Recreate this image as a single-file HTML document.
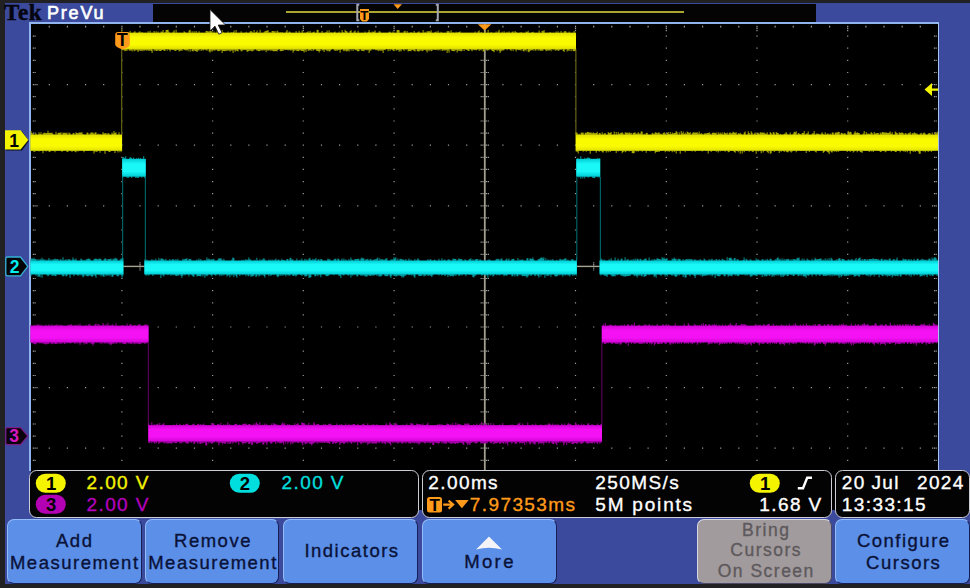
<!DOCTYPE html>
<html><head><meta charset="utf-8"><title>Tek PreVu</title>
<style>
html,body{margin:0;padding:0;background:#212023;}
body{width:970px;height:588px;overflow:hidden;position:relative;font-family:"Liberation Sans","DejaVu Sans",sans-serif;}
.abs{position:absolute;}
#screen{left:5px;top:3px;width:965px;height:581px;background:#3b4a9c;}
#topbar{left:153px;top:3.800px;width:663px;height:18.200px;background:#030403;}
#tek{left:4px;top:-1.300px;font-family:"Liberation Serif",serif;font-weight:bold;font-size:23px;color:#05050f;letter-spacing:0.700px;line-height:28px;-webkit-text-stroke:0.500px #05050f;}
#prevu{left:47px;top:1.500px;font-size:18px;color:#fff;line-height:22px;letter-spacing:1.8px;-webkit-text-stroke:0.650px #fff;}
#grat{left:28.700px;top:21.800px;width:910.700px;height:449px;background:#000;box-sizing:border-box;border:2px solid #8fb4ee;border-top-width:2.200px;border-right:1.600px solid #a5c4f4;border-bottom:none;}
svg{position:absolute;left:0;top:0;}
.box{box-sizing:border-box;border:1.700px solid #cdcdd8;border-radius:7.500px;background:#030303;top:470px;height:47.5px;}
.box>*{transform:translate(-0.200px,-0.200px);}
.t{position:absolute;white-space:nowrap;font-size:19px;line-height:20px;letter-spacing:1.4px;word-spacing:0px;-webkit-text-stroke:0.35px currentColor;}
.pill{position:absolute;width:30.200px;height:19px;border-radius:9.500px;color:#000;text-align:center;font-size:18.500px;font-weight:bold;line-height:19.500px;text-indent:1px;}
.btn{box-sizing:border-box;top:518.500px;height:65px;border-radius:7px;background:#5b8fe8;border-top:1.500px solid #93bcfa;border-left:1.500px solid #93bcfa;border-right:1.500px solid #171f55;border-bottom:1.500px solid #171f55;color:#0a1238;text-align:center;font-size:18.500px;line-height:22px;letter-spacing:1.5px;-webkit-text-stroke:0.35px currentColor;}
.btn div{position:absolute;left:-10px;right:-10px;white-space:nowrap;}
</style></head><body>
<div id="screen" class="abs"></div>
<div id="topbar" class="abs"></div>
<div id="tek" class="abs">Tek</div>
<div id="prevu" class="abs">PreVu</div>
<div id="grat" class="abs"></div>
<div class="abs" style="left:31px;top:470px;width:907px;height:39.500px;background:#000;"></div>
<svg width="970" height="588" viewBox="0 0 970 588">
<!-- record bar -->
<rect x="286" y="11.2" width="398" height="1.6" fill="#d6ce3e"/>
<path d="M359.300 4.800h-2v15.500h2M435.800 4.800h2v15.500h-2" fill="none" stroke="#a6a6b2" stroke-width="2"/>
<path d="M393.5 4.3h8.4l-4.2 4.6z" fill="#ff9a1a"/>
<path d="M360 9h9v10l-2 2.5h-5l-2-2.5z" fill="#ff9a1a"/>
<text x="364.400" y="20.400" font-size="13.500" font-weight="bold" text-anchor="middle" fill="#000" font-family='"Liberation Sans","DejaVu Sans",sans-serif'>T</text>
<defs><linearGradient id="gy" x1="0" y1="0" x2="0" y2="1"><stop offset="0" stop-color="#e2e200"/><stop offset="0.28" stop-color="#fbfb00"/><stop offset="0.72" stop-color="#fbfb00"/><stop offset="1" stop-color="#e2e200"/></linearGradient><linearGradient id="gc" x1="0" y1="0" x2="0" y2="1"><stop offset="0" stop-color="#00cdd6"/><stop offset="0.28" stop-color="#1af7f7"/><stop offset="0.72" stop-color="#1af7f7"/><stop offset="1" stop-color="#00cdd6"/></linearGradient><linearGradient id="gm" x1="0" y1="0" x2="0" y2="1"><stop offset="0" stop-color="#d404d8"/><stop offset="0.28" stop-color="#f412f4"/><stop offset="0.72" stop-color="#f412f4"/><stop offset="1" stop-color="#d404d8"/></linearGradient></defs>
<path d="M48.7 84.0h1.2v1.2h-1.2zM66.8 84.0h1.2v1.2h-1.2zM85.0 84.0h1.2v1.2h-1.2zM103.1 84.0h1.2v1.2h-1.2zM121.3 84.0h1.2v1.2h-1.2zM139.4 84.0h1.2v1.2h-1.2zM157.6 84.0h1.2v1.2h-1.2zM175.7 84.0h1.2v1.2h-1.2zM193.9 84.0h1.2v1.2h-1.2zM212.0 84.0h1.2v1.2h-1.2zM230.2 84.0h1.2v1.2h-1.2zM248.3 84.0h1.2v1.2h-1.2zM266.4 84.0h1.2v1.2h-1.2zM284.6 84.0h1.2v1.2h-1.2zM302.7 84.0h1.2v1.2h-1.2zM320.9 84.0h1.2v1.2h-1.2zM339.0 84.0h1.2v1.2h-1.2zM357.2 84.0h1.2v1.2h-1.2zM375.3 84.0h1.2v1.2h-1.2zM393.5 84.0h1.2v1.2h-1.2zM411.6 84.0h1.2v1.2h-1.2zM429.8 84.0h1.2v1.2h-1.2zM447.9 84.0h1.2v1.2h-1.2zM466.1 84.0h1.2v1.2h-1.2zM484.2 84.0h1.2v1.2h-1.2zM502.3 84.0h1.2v1.2h-1.2zM520.5 84.0h1.2v1.2h-1.2zM538.6 84.0h1.2v1.2h-1.2zM556.8 84.0h1.2v1.2h-1.2zM574.9 84.0h1.2v1.2h-1.2zM593.1 84.0h1.2v1.2h-1.2zM611.2 84.0h1.2v1.2h-1.2zM629.4 84.0h1.2v1.2h-1.2zM647.5 84.0h1.2v1.2h-1.2zM665.7 84.0h1.2v1.2h-1.2zM683.8 84.0h1.2v1.2h-1.2zM702.0 84.0h1.2v1.2h-1.2zM720.1 84.0h1.2v1.2h-1.2zM738.2 84.0h1.2v1.2h-1.2zM756.4 84.0h1.2v1.2h-1.2zM774.5 84.0h1.2v1.2h-1.2zM792.7 84.0h1.2v1.2h-1.2zM810.8 84.0h1.2v1.2h-1.2zM829.0 84.0h1.2v1.2h-1.2zM847.1 84.0h1.2v1.2h-1.2zM865.3 84.0h1.2v1.2h-1.2zM883.4 84.0h1.2v1.2h-1.2zM901.6 84.0h1.2v1.2h-1.2zM919.7 84.0h1.2v1.2h-1.2zM48.7 144.6h1.2v1.2h-1.2zM66.8 144.6h1.2v1.2h-1.2zM85.0 144.6h1.2v1.2h-1.2zM103.1 144.6h1.2v1.2h-1.2zM121.3 144.6h1.2v1.2h-1.2zM139.4 144.6h1.2v1.2h-1.2zM157.6 144.6h1.2v1.2h-1.2zM175.7 144.6h1.2v1.2h-1.2zM193.9 144.6h1.2v1.2h-1.2zM212.0 144.6h1.2v1.2h-1.2zM230.2 144.6h1.2v1.2h-1.2zM248.3 144.6h1.2v1.2h-1.2zM266.4 144.6h1.2v1.2h-1.2zM284.6 144.6h1.2v1.2h-1.2zM302.7 144.6h1.2v1.2h-1.2zM320.9 144.6h1.2v1.2h-1.2zM339.0 144.6h1.2v1.2h-1.2zM357.2 144.6h1.2v1.2h-1.2zM375.3 144.6h1.2v1.2h-1.2zM393.5 144.6h1.2v1.2h-1.2zM411.6 144.6h1.2v1.2h-1.2zM429.8 144.6h1.2v1.2h-1.2zM447.9 144.6h1.2v1.2h-1.2zM466.1 144.6h1.2v1.2h-1.2zM484.2 144.6h1.2v1.2h-1.2zM502.3 144.6h1.2v1.2h-1.2zM520.5 144.6h1.2v1.2h-1.2zM538.6 144.6h1.2v1.2h-1.2zM556.8 144.6h1.2v1.2h-1.2zM574.9 144.6h1.2v1.2h-1.2zM593.1 144.6h1.2v1.2h-1.2zM611.2 144.6h1.2v1.2h-1.2zM629.4 144.6h1.2v1.2h-1.2zM647.5 144.6h1.2v1.2h-1.2zM665.7 144.6h1.2v1.2h-1.2zM683.8 144.6h1.2v1.2h-1.2zM702.0 144.6h1.2v1.2h-1.2zM720.1 144.6h1.2v1.2h-1.2zM738.2 144.6h1.2v1.2h-1.2zM756.4 144.6h1.2v1.2h-1.2zM774.5 144.6h1.2v1.2h-1.2zM792.7 144.6h1.2v1.2h-1.2zM810.8 144.6h1.2v1.2h-1.2zM829.0 144.6h1.2v1.2h-1.2zM847.1 144.6h1.2v1.2h-1.2zM865.3 144.6h1.2v1.2h-1.2zM883.4 144.6h1.2v1.2h-1.2zM901.6 144.6h1.2v1.2h-1.2zM919.7 144.6h1.2v1.2h-1.2zM48.7 205.2h1.2v1.2h-1.2zM66.8 205.2h1.2v1.2h-1.2zM85.0 205.2h1.2v1.2h-1.2zM103.1 205.2h1.2v1.2h-1.2zM121.3 205.2h1.2v1.2h-1.2zM139.4 205.2h1.2v1.2h-1.2zM157.6 205.2h1.2v1.2h-1.2zM175.7 205.2h1.2v1.2h-1.2zM193.9 205.2h1.2v1.2h-1.2zM212.0 205.2h1.2v1.2h-1.2zM230.2 205.2h1.2v1.2h-1.2zM248.3 205.2h1.2v1.2h-1.2zM266.4 205.2h1.2v1.2h-1.2zM284.6 205.2h1.2v1.2h-1.2zM302.7 205.2h1.2v1.2h-1.2zM320.9 205.2h1.2v1.2h-1.2zM339.0 205.2h1.2v1.2h-1.2zM357.2 205.2h1.2v1.2h-1.2zM375.3 205.2h1.2v1.2h-1.2zM393.5 205.2h1.2v1.2h-1.2zM411.6 205.2h1.2v1.2h-1.2zM429.8 205.2h1.2v1.2h-1.2zM447.9 205.2h1.2v1.2h-1.2zM466.1 205.2h1.2v1.2h-1.2zM484.2 205.2h1.2v1.2h-1.2zM502.3 205.2h1.2v1.2h-1.2zM520.5 205.2h1.2v1.2h-1.2zM538.6 205.2h1.2v1.2h-1.2zM556.8 205.2h1.2v1.2h-1.2zM574.9 205.2h1.2v1.2h-1.2zM593.1 205.2h1.2v1.2h-1.2zM611.2 205.2h1.2v1.2h-1.2zM629.4 205.2h1.2v1.2h-1.2zM647.5 205.2h1.2v1.2h-1.2zM665.7 205.2h1.2v1.2h-1.2zM683.8 205.2h1.2v1.2h-1.2zM702.0 205.2h1.2v1.2h-1.2zM720.1 205.2h1.2v1.2h-1.2zM738.2 205.2h1.2v1.2h-1.2zM756.4 205.2h1.2v1.2h-1.2zM774.5 205.2h1.2v1.2h-1.2zM792.7 205.2h1.2v1.2h-1.2zM810.8 205.2h1.2v1.2h-1.2zM829.0 205.2h1.2v1.2h-1.2zM847.1 205.2h1.2v1.2h-1.2zM865.3 205.2h1.2v1.2h-1.2zM883.4 205.2h1.2v1.2h-1.2zM901.6 205.2h1.2v1.2h-1.2zM919.7 205.2h1.2v1.2h-1.2zM48.7 265.8h1.2v1.2h-1.2zM66.8 265.8h1.2v1.2h-1.2zM85.0 265.8h1.2v1.2h-1.2zM103.1 265.8h1.2v1.2h-1.2zM121.3 265.8h1.2v1.2h-1.2zM139.4 265.8h1.2v1.2h-1.2zM157.6 265.8h1.2v1.2h-1.2zM175.7 265.8h1.2v1.2h-1.2zM193.9 265.8h1.2v1.2h-1.2zM212.0 265.8h1.2v1.2h-1.2zM230.2 265.8h1.2v1.2h-1.2zM248.3 265.8h1.2v1.2h-1.2zM266.4 265.8h1.2v1.2h-1.2zM284.6 265.8h1.2v1.2h-1.2zM302.7 265.8h1.2v1.2h-1.2zM320.9 265.8h1.2v1.2h-1.2zM339.0 265.8h1.2v1.2h-1.2zM357.2 265.8h1.2v1.2h-1.2zM375.3 265.8h1.2v1.2h-1.2zM393.5 265.8h1.2v1.2h-1.2zM411.6 265.8h1.2v1.2h-1.2zM429.8 265.8h1.2v1.2h-1.2zM447.9 265.8h1.2v1.2h-1.2zM466.1 265.8h1.2v1.2h-1.2zM484.2 265.8h1.2v1.2h-1.2zM502.3 265.8h1.2v1.2h-1.2zM520.5 265.8h1.2v1.2h-1.2zM538.6 265.8h1.2v1.2h-1.2zM556.8 265.8h1.2v1.2h-1.2zM574.9 265.8h1.2v1.2h-1.2zM593.1 265.8h1.2v1.2h-1.2zM611.2 265.8h1.2v1.2h-1.2zM629.4 265.8h1.2v1.2h-1.2zM647.5 265.8h1.2v1.2h-1.2zM665.7 265.8h1.2v1.2h-1.2zM683.8 265.8h1.2v1.2h-1.2zM702.0 265.8h1.2v1.2h-1.2zM720.1 265.8h1.2v1.2h-1.2zM738.2 265.8h1.2v1.2h-1.2zM756.4 265.8h1.2v1.2h-1.2zM774.5 265.8h1.2v1.2h-1.2zM792.7 265.8h1.2v1.2h-1.2zM810.8 265.8h1.2v1.2h-1.2zM829.0 265.8h1.2v1.2h-1.2zM847.1 265.8h1.2v1.2h-1.2zM865.3 265.8h1.2v1.2h-1.2zM883.4 265.8h1.2v1.2h-1.2zM901.6 265.8h1.2v1.2h-1.2zM919.7 265.8h1.2v1.2h-1.2zM48.7 326.4h1.2v1.2h-1.2zM66.8 326.4h1.2v1.2h-1.2zM85.0 326.4h1.2v1.2h-1.2zM103.1 326.4h1.2v1.2h-1.2zM121.3 326.4h1.2v1.2h-1.2zM139.4 326.4h1.2v1.2h-1.2zM157.6 326.4h1.2v1.2h-1.2zM175.7 326.4h1.2v1.2h-1.2zM193.9 326.4h1.2v1.2h-1.2zM212.0 326.4h1.2v1.2h-1.2zM230.2 326.4h1.2v1.2h-1.2zM248.3 326.4h1.2v1.2h-1.2zM266.4 326.4h1.2v1.2h-1.2zM284.6 326.4h1.2v1.2h-1.2zM302.7 326.4h1.2v1.2h-1.2zM320.9 326.4h1.2v1.2h-1.2zM339.0 326.4h1.2v1.2h-1.2zM357.2 326.4h1.2v1.2h-1.2zM375.3 326.4h1.2v1.2h-1.2zM393.5 326.4h1.2v1.2h-1.2zM411.6 326.4h1.2v1.2h-1.2zM429.8 326.4h1.2v1.2h-1.2zM447.9 326.4h1.2v1.2h-1.2zM466.1 326.4h1.2v1.2h-1.2zM484.2 326.4h1.2v1.2h-1.2zM502.3 326.4h1.2v1.2h-1.2zM520.5 326.4h1.2v1.2h-1.2zM538.6 326.4h1.2v1.2h-1.2zM556.8 326.4h1.2v1.2h-1.2zM574.9 326.4h1.2v1.2h-1.2zM593.1 326.4h1.2v1.2h-1.2zM611.2 326.4h1.2v1.2h-1.2zM629.4 326.4h1.2v1.2h-1.2zM647.5 326.4h1.2v1.2h-1.2zM665.7 326.4h1.2v1.2h-1.2zM683.8 326.4h1.2v1.2h-1.2zM702.0 326.4h1.2v1.2h-1.2zM720.1 326.4h1.2v1.2h-1.2zM738.2 326.4h1.2v1.2h-1.2zM756.4 326.4h1.2v1.2h-1.2zM774.5 326.4h1.2v1.2h-1.2zM792.7 326.4h1.2v1.2h-1.2zM810.8 326.4h1.2v1.2h-1.2zM829.0 326.4h1.2v1.2h-1.2zM847.1 326.4h1.2v1.2h-1.2zM865.3 326.4h1.2v1.2h-1.2zM883.4 326.4h1.2v1.2h-1.2zM901.6 326.4h1.2v1.2h-1.2zM919.7 326.4h1.2v1.2h-1.2zM48.7 387.0h1.2v1.2h-1.2zM66.8 387.0h1.2v1.2h-1.2zM85.0 387.0h1.2v1.2h-1.2zM103.1 387.0h1.2v1.2h-1.2zM121.3 387.0h1.2v1.2h-1.2zM139.4 387.0h1.2v1.2h-1.2zM157.6 387.0h1.2v1.2h-1.2zM175.7 387.0h1.2v1.2h-1.2zM193.9 387.0h1.2v1.2h-1.2zM212.0 387.0h1.2v1.2h-1.2zM230.2 387.0h1.2v1.2h-1.2zM248.3 387.0h1.2v1.2h-1.2zM266.4 387.0h1.2v1.2h-1.2zM284.6 387.0h1.2v1.2h-1.2zM302.7 387.0h1.2v1.2h-1.2zM320.9 387.0h1.2v1.2h-1.2zM339.0 387.0h1.2v1.2h-1.2zM357.2 387.0h1.2v1.2h-1.2zM375.3 387.0h1.2v1.2h-1.2zM393.5 387.0h1.2v1.2h-1.2zM411.6 387.0h1.2v1.2h-1.2zM429.8 387.0h1.2v1.2h-1.2zM447.9 387.0h1.2v1.2h-1.2zM466.1 387.0h1.2v1.2h-1.2zM484.2 387.0h1.2v1.2h-1.2zM502.3 387.0h1.2v1.2h-1.2zM520.5 387.0h1.2v1.2h-1.2zM538.6 387.0h1.2v1.2h-1.2zM556.8 387.0h1.2v1.2h-1.2zM574.9 387.0h1.2v1.2h-1.2zM593.1 387.0h1.2v1.2h-1.2zM611.2 387.0h1.2v1.2h-1.2zM629.4 387.0h1.2v1.2h-1.2zM647.5 387.0h1.2v1.2h-1.2zM665.7 387.0h1.2v1.2h-1.2zM683.8 387.0h1.2v1.2h-1.2zM702.0 387.0h1.2v1.2h-1.2zM720.1 387.0h1.2v1.2h-1.2zM738.2 387.0h1.2v1.2h-1.2zM756.4 387.0h1.2v1.2h-1.2zM774.5 387.0h1.2v1.2h-1.2zM792.7 387.0h1.2v1.2h-1.2zM810.8 387.0h1.2v1.2h-1.2zM829.0 387.0h1.2v1.2h-1.2zM847.1 387.0h1.2v1.2h-1.2zM865.3 387.0h1.2v1.2h-1.2zM883.4 387.0h1.2v1.2h-1.2zM901.6 387.0h1.2v1.2h-1.2zM919.7 387.0h1.2v1.2h-1.2zM48.7 447.6h1.2v1.2h-1.2zM66.8 447.6h1.2v1.2h-1.2zM85.0 447.6h1.2v1.2h-1.2zM103.1 447.6h1.2v1.2h-1.2zM121.3 447.6h1.2v1.2h-1.2zM139.4 447.6h1.2v1.2h-1.2zM157.6 447.6h1.2v1.2h-1.2zM175.7 447.6h1.2v1.2h-1.2zM193.9 447.6h1.2v1.2h-1.2zM212.0 447.6h1.2v1.2h-1.2zM230.2 447.6h1.2v1.2h-1.2zM248.3 447.6h1.2v1.2h-1.2zM266.4 447.6h1.2v1.2h-1.2zM284.6 447.6h1.2v1.2h-1.2zM302.7 447.6h1.2v1.2h-1.2zM320.9 447.6h1.2v1.2h-1.2zM339.0 447.6h1.2v1.2h-1.2zM357.2 447.6h1.2v1.2h-1.2zM375.3 447.6h1.2v1.2h-1.2zM393.5 447.6h1.2v1.2h-1.2zM411.6 447.6h1.2v1.2h-1.2zM429.8 447.6h1.2v1.2h-1.2zM447.9 447.6h1.2v1.2h-1.2zM466.1 447.6h1.2v1.2h-1.2zM484.2 447.6h1.2v1.2h-1.2zM502.3 447.6h1.2v1.2h-1.2zM520.5 447.6h1.2v1.2h-1.2zM538.6 447.6h1.2v1.2h-1.2zM556.8 447.6h1.2v1.2h-1.2zM574.9 447.6h1.2v1.2h-1.2zM593.1 447.6h1.2v1.2h-1.2zM611.2 447.6h1.2v1.2h-1.2zM629.4 447.6h1.2v1.2h-1.2zM647.5 447.6h1.2v1.2h-1.2zM665.7 447.6h1.2v1.2h-1.2zM683.8 447.6h1.2v1.2h-1.2zM702.0 447.6h1.2v1.2h-1.2zM720.1 447.6h1.2v1.2h-1.2zM738.2 447.6h1.2v1.2h-1.2zM756.4 447.6h1.2v1.2h-1.2zM774.5 447.6h1.2v1.2h-1.2zM792.7 447.6h1.2v1.2h-1.2zM810.8 447.6h1.2v1.2h-1.2zM829.0 447.6h1.2v1.2h-1.2zM847.1 447.6h1.2v1.2h-1.2zM865.3 447.6h1.2v1.2h-1.2zM883.4 447.6h1.2v1.2h-1.2zM901.6 447.6h1.2v1.2h-1.2zM919.7 447.6h1.2v1.2h-1.2zM121.3 35.5h1.2v1.2h-1.2zM121.3 47.6h1.2v1.2h-1.2zM121.3 59.8h1.2v1.2h-1.2zM121.3 71.9h1.2v1.2h-1.2zM121.3 84.0h1.2v1.2h-1.2zM121.3 96.1h1.2v1.2h-1.2zM121.3 108.2h1.2v1.2h-1.2zM121.3 120.4h1.2v1.2h-1.2zM121.3 132.5h1.2v1.2h-1.2zM121.3 144.6h1.2v1.2h-1.2zM121.3 156.7h1.2v1.2h-1.2zM121.3 168.8h1.2v1.2h-1.2zM121.3 181.0h1.2v1.2h-1.2zM121.3 193.1h1.2v1.2h-1.2zM121.3 205.2h1.2v1.2h-1.2zM121.3 217.3h1.2v1.2h-1.2zM121.3 229.4h1.2v1.2h-1.2zM121.3 241.6h1.2v1.2h-1.2zM121.3 253.7h1.2v1.2h-1.2zM121.3 265.8h1.2v1.2h-1.2zM121.3 277.9h1.2v1.2h-1.2zM121.3 290.0h1.2v1.2h-1.2zM121.3 302.2h1.2v1.2h-1.2zM121.3 314.3h1.2v1.2h-1.2zM121.3 326.4h1.2v1.2h-1.2zM121.3 338.5h1.2v1.2h-1.2zM121.3 350.6h1.2v1.2h-1.2zM121.3 362.8h1.2v1.2h-1.2zM121.3 374.9h1.2v1.2h-1.2zM121.3 387.0h1.2v1.2h-1.2zM121.3 399.1h1.2v1.2h-1.2zM121.3 411.2h1.2v1.2h-1.2zM121.3 423.4h1.2v1.2h-1.2zM121.3 435.5h1.2v1.2h-1.2zM121.3 447.6h1.2v1.2h-1.2zM121.3 459.7h1.2v1.2h-1.2zM212.0 35.5h1.2v1.2h-1.2zM212.0 47.6h1.2v1.2h-1.2zM212.0 59.8h1.2v1.2h-1.2zM212.0 71.9h1.2v1.2h-1.2zM212.0 84.0h1.2v1.2h-1.2zM212.0 96.1h1.2v1.2h-1.2zM212.0 108.2h1.2v1.2h-1.2zM212.0 120.4h1.2v1.2h-1.2zM212.0 132.5h1.2v1.2h-1.2zM212.0 144.6h1.2v1.2h-1.2zM212.0 156.7h1.2v1.2h-1.2zM212.0 168.8h1.2v1.2h-1.2zM212.0 181.0h1.2v1.2h-1.2zM212.0 193.1h1.2v1.2h-1.2zM212.0 205.2h1.2v1.2h-1.2zM212.0 217.3h1.2v1.2h-1.2zM212.0 229.4h1.2v1.2h-1.2zM212.0 241.6h1.2v1.2h-1.2zM212.0 253.7h1.2v1.2h-1.2zM212.0 265.8h1.2v1.2h-1.2zM212.0 277.9h1.2v1.2h-1.2zM212.0 290.0h1.2v1.2h-1.2zM212.0 302.2h1.2v1.2h-1.2zM212.0 314.3h1.2v1.2h-1.2zM212.0 326.4h1.2v1.2h-1.2zM212.0 338.5h1.2v1.2h-1.2zM212.0 350.6h1.2v1.2h-1.2zM212.0 362.8h1.2v1.2h-1.2zM212.0 374.9h1.2v1.2h-1.2zM212.0 387.0h1.2v1.2h-1.2zM212.0 399.1h1.2v1.2h-1.2zM212.0 411.2h1.2v1.2h-1.2zM212.0 423.4h1.2v1.2h-1.2zM212.0 435.5h1.2v1.2h-1.2zM212.0 447.6h1.2v1.2h-1.2zM212.0 459.7h1.2v1.2h-1.2zM302.7 35.5h1.2v1.2h-1.2zM302.7 47.6h1.2v1.2h-1.2zM302.7 59.8h1.2v1.2h-1.2zM302.7 71.9h1.2v1.2h-1.2zM302.7 84.0h1.2v1.2h-1.2zM302.7 96.1h1.2v1.2h-1.2zM302.7 108.2h1.2v1.2h-1.2zM302.7 120.4h1.2v1.2h-1.2zM302.7 132.5h1.2v1.2h-1.2zM302.7 144.6h1.2v1.2h-1.2zM302.7 156.7h1.2v1.2h-1.2zM302.7 168.8h1.2v1.2h-1.2zM302.7 181.0h1.2v1.2h-1.2zM302.7 193.1h1.2v1.2h-1.2zM302.7 205.2h1.2v1.2h-1.2zM302.7 217.3h1.2v1.2h-1.2zM302.7 229.4h1.2v1.2h-1.2zM302.7 241.6h1.2v1.2h-1.2zM302.7 253.7h1.2v1.2h-1.2zM302.7 265.8h1.2v1.2h-1.2zM302.7 277.9h1.2v1.2h-1.2zM302.7 290.0h1.2v1.2h-1.2zM302.7 302.2h1.2v1.2h-1.2zM302.7 314.3h1.2v1.2h-1.2zM302.7 326.4h1.2v1.2h-1.2zM302.7 338.5h1.2v1.2h-1.2zM302.7 350.6h1.2v1.2h-1.2zM302.7 362.8h1.2v1.2h-1.2zM302.7 374.9h1.2v1.2h-1.2zM302.7 387.0h1.2v1.2h-1.2zM302.7 399.1h1.2v1.2h-1.2zM302.7 411.2h1.2v1.2h-1.2zM302.7 423.4h1.2v1.2h-1.2zM302.7 435.5h1.2v1.2h-1.2zM302.7 447.6h1.2v1.2h-1.2zM302.7 459.7h1.2v1.2h-1.2zM393.5 35.5h1.2v1.2h-1.2zM393.5 47.6h1.2v1.2h-1.2zM393.5 59.8h1.2v1.2h-1.2zM393.5 71.9h1.2v1.2h-1.2zM393.5 84.0h1.2v1.2h-1.2zM393.5 96.1h1.2v1.2h-1.2zM393.5 108.2h1.2v1.2h-1.2zM393.5 120.4h1.2v1.2h-1.2zM393.5 132.5h1.2v1.2h-1.2zM393.5 144.6h1.2v1.2h-1.2zM393.5 156.7h1.2v1.2h-1.2zM393.5 168.8h1.2v1.2h-1.2zM393.5 181.0h1.2v1.2h-1.2zM393.5 193.1h1.2v1.2h-1.2zM393.5 205.2h1.2v1.2h-1.2zM393.5 217.3h1.2v1.2h-1.2zM393.5 229.4h1.2v1.2h-1.2zM393.5 241.6h1.2v1.2h-1.2zM393.5 253.7h1.2v1.2h-1.2zM393.5 265.8h1.2v1.2h-1.2zM393.5 277.9h1.2v1.2h-1.2zM393.5 290.0h1.2v1.2h-1.2zM393.5 302.2h1.2v1.2h-1.2zM393.5 314.3h1.2v1.2h-1.2zM393.5 326.4h1.2v1.2h-1.2zM393.5 338.5h1.2v1.2h-1.2zM393.5 350.6h1.2v1.2h-1.2zM393.5 362.8h1.2v1.2h-1.2zM393.5 374.9h1.2v1.2h-1.2zM393.5 387.0h1.2v1.2h-1.2zM393.5 399.1h1.2v1.2h-1.2zM393.5 411.2h1.2v1.2h-1.2zM393.5 423.4h1.2v1.2h-1.2zM393.5 435.5h1.2v1.2h-1.2zM393.5 447.6h1.2v1.2h-1.2zM393.5 459.7h1.2v1.2h-1.2zM484.2 35.5h1.2v1.2h-1.2zM484.2 47.6h1.2v1.2h-1.2zM484.2 59.8h1.2v1.2h-1.2zM484.2 71.9h1.2v1.2h-1.2zM484.2 84.0h1.2v1.2h-1.2zM484.2 96.1h1.2v1.2h-1.2zM484.2 108.2h1.2v1.2h-1.2zM484.2 120.4h1.2v1.2h-1.2zM484.2 132.5h1.2v1.2h-1.2zM484.2 144.6h1.2v1.2h-1.2zM484.2 156.7h1.2v1.2h-1.2zM484.2 168.8h1.2v1.2h-1.2zM484.2 181.0h1.2v1.2h-1.2zM484.2 193.1h1.2v1.2h-1.2zM484.2 205.2h1.2v1.2h-1.2zM484.2 217.3h1.2v1.2h-1.2zM484.2 229.4h1.2v1.2h-1.2zM484.2 241.6h1.2v1.2h-1.2zM484.2 253.7h1.2v1.2h-1.2zM484.2 265.8h1.2v1.2h-1.2zM484.2 277.9h1.2v1.2h-1.2zM484.2 290.0h1.2v1.2h-1.2zM484.2 302.2h1.2v1.2h-1.2zM484.2 314.3h1.2v1.2h-1.2zM484.2 326.4h1.2v1.2h-1.2zM484.2 338.5h1.2v1.2h-1.2zM484.2 350.6h1.2v1.2h-1.2zM484.2 362.8h1.2v1.2h-1.2zM484.2 374.9h1.2v1.2h-1.2zM484.2 387.0h1.2v1.2h-1.2zM484.2 399.1h1.2v1.2h-1.2zM484.2 411.2h1.2v1.2h-1.2zM484.2 423.4h1.2v1.2h-1.2zM484.2 435.5h1.2v1.2h-1.2zM484.2 447.6h1.2v1.2h-1.2zM484.2 459.7h1.2v1.2h-1.2zM574.9 35.5h1.2v1.2h-1.2zM574.9 47.6h1.2v1.2h-1.2zM574.9 59.8h1.2v1.2h-1.2zM574.9 71.9h1.2v1.2h-1.2zM574.9 84.0h1.2v1.2h-1.2zM574.9 96.1h1.2v1.2h-1.2zM574.9 108.2h1.2v1.2h-1.2zM574.9 120.4h1.2v1.2h-1.2zM574.9 132.5h1.2v1.2h-1.2zM574.9 144.6h1.2v1.2h-1.2zM574.9 156.7h1.2v1.2h-1.2zM574.9 168.8h1.2v1.2h-1.2zM574.9 181.0h1.2v1.2h-1.2zM574.9 193.1h1.2v1.2h-1.2zM574.9 205.2h1.2v1.2h-1.2zM574.9 217.3h1.2v1.2h-1.2zM574.9 229.4h1.2v1.2h-1.2zM574.9 241.6h1.2v1.2h-1.2zM574.9 253.7h1.2v1.2h-1.2zM574.9 265.8h1.2v1.2h-1.2zM574.9 277.9h1.2v1.2h-1.2zM574.9 290.0h1.2v1.2h-1.2zM574.9 302.2h1.2v1.2h-1.2zM574.9 314.3h1.2v1.2h-1.2zM574.9 326.4h1.2v1.2h-1.2zM574.9 338.5h1.2v1.2h-1.2zM574.9 350.6h1.2v1.2h-1.2zM574.9 362.8h1.2v1.2h-1.2zM574.9 374.9h1.2v1.2h-1.2zM574.9 387.0h1.2v1.2h-1.2zM574.9 399.1h1.2v1.2h-1.2zM574.9 411.2h1.2v1.2h-1.2zM574.9 423.4h1.2v1.2h-1.2zM574.9 435.5h1.2v1.2h-1.2zM574.9 447.6h1.2v1.2h-1.2zM574.9 459.7h1.2v1.2h-1.2zM665.7 35.5h1.2v1.2h-1.2zM665.7 47.6h1.2v1.2h-1.2zM665.7 59.8h1.2v1.2h-1.2zM665.7 71.9h1.2v1.2h-1.2zM665.7 84.0h1.2v1.2h-1.2zM665.7 96.1h1.2v1.2h-1.2zM665.7 108.2h1.2v1.2h-1.2zM665.7 120.4h1.2v1.2h-1.2zM665.7 132.5h1.2v1.2h-1.2zM665.7 144.6h1.2v1.2h-1.2zM665.7 156.7h1.2v1.2h-1.2zM665.7 168.8h1.2v1.2h-1.2zM665.7 181.0h1.2v1.2h-1.2zM665.7 193.1h1.2v1.2h-1.2zM665.7 205.2h1.2v1.2h-1.2zM665.7 217.3h1.2v1.2h-1.2zM665.7 229.4h1.2v1.2h-1.2zM665.7 241.6h1.2v1.2h-1.2zM665.7 253.7h1.2v1.2h-1.2zM665.7 265.8h1.2v1.2h-1.2zM665.7 277.9h1.2v1.2h-1.2zM665.7 290.0h1.2v1.2h-1.2zM665.7 302.2h1.2v1.2h-1.2zM665.7 314.3h1.2v1.2h-1.2zM665.7 326.4h1.2v1.2h-1.2zM665.7 338.5h1.2v1.2h-1.2zM665.7 350.6h1.2v1.2h-1.2zM665.7 362.8h1.2v1.2h-1.2zM665.7 374.9h1.2v1.2h-1.2zM665.7 387.0h1.2v1.2h-1.2zM665.7 399.1h1.2v1.2h-1.2zM665.7 411.2h1.2v1.2h-1.2zM665.7 423.4h1.2v1.2h-1.2zM665.7 435.5h1.2v1.2h-1.2zM665.7 447.6h1.2v1.2h-1.2zM665.7 459.7h1.2v1.2h-1.2zM756.4 35.5h1.2v1.2h-1.2zM756.4 47.6h1.2v1.2h-1.2zM756.4 59.8h1.2v1.2h-1.2zM756.4 71.9h1.2v1.2h-1.2zM756.4 84.0h1.2v1.2h-1.2zM756.4 96.1h1.2v1.2h-1.2zM756.4 108.2h1.2v1.2h-1.2zM756.4 120.4h1.2v1.2h-1.2zM756.4 132.5h1.2v1.2h-1.2zM756.4 144.6h1.2v1.2h-1.2zM756.4 156.7h1.2v1.2h-1.2zM756.4 168.8h1.2v1.2h-1.2zM756.4 181.0h1.2v1.2h-1.2zM756.4 193.1h1.2v1.2h-1.2zM756.4 205.2h1.2v1.2h-1.2zM756.4 217.3h1.2v1.2h-1.2zM756.4 229.4h1.2v1.2h-1.2zM756.4 241.6h1.2v1.2h-1.2zM756.4 253.7h1.2v1.2h-1.2zM756.4 265.8h1.2v1.2h-1.2zM756.4 277.9h1.2v1.2h-1.2zM756.4 290.0h1.2v1.2h-1.2zM756.4 302.2h1.2v1.2h-1.2zM756.4 314.3h1.2v1.2h-1.2zM756.4 326.4h1.2v1.2h-1.2zM756.4 338.5h1.2v1.2h-1.2zM756.4 350.6h1.2v1.2h-1.2zM756.4 362.8h1.2v1.2h-1.2zM756.4 374.9h1.2v1.2h-1.2zM756.4 387.0h1.2v1.2h-1.2zM756.4 399.1h1.2v1.2h-1.2zM756.4 411.2h1.2v1.2h-1.2zM756.4 423.4h1.2v1.2h-1.2zM756.4 435.5h1.2v1.2h-1.2zM756.4 447.6h1.2v1.2h-1.2zM756.4 459.7h1.2v1.2h-1.2zM847.1 35.5h1.2v1.2h-1.2zM847.1 47.6h1.2v1.2h-1.2zM847.1 59.8h1.2v1.2h-1.2zM847.1 71.9h1.2v1.2h-1.2zM847.1 84.0h1.2v1.2h-1.2zM847.1 96.1h1.2v1.2h-1.2zM847.1 108.2h1.2v1.2h-1.2zM847.1 120.4h1.2v1.2h-1.2zM847.1 132.5h1.2v1.2h-1.2zM847.1 144.6h1.2v1.2h-1.2zM847.1 156.7h1.2v1.2h-1.2zM847.1 168.8h1.2v1.2h-1.2zM847.1 181.0h1.2v1.2h-1.2zM847.1 193.1h1.2v1.2h-1.2zM847.1 205.2h1.2v1.2h-1.2zM847.1 217.3h1.2v1.2h-1.2zM847.1 229.4h1.2v1.2h-1.2zM847.1 241.6h1.2v1.2h-1.2zM847.1 253.7h1.2v1.2h-1.2zM847.1 265.8h1.2v1.2h-1.2zM847.1 277.9h1.2v1.2h-1.2zM847.1 290.0h1.2v1.2h-1.2zM847.1 302.2h1.2v1.2h-1.2zM847.1 314.3h1.2v1.2h-1.2zM847.1 326.4h1.2v1.2h-1.2zM847.1 338.5h1.2v1.2h-1.2zM847.1 350.6h1.2v1.2h-1.2zM847.1 362.8h1.2v1.2h-1.2zM847.1 374.9h1.2v1.2h-1.2zM847.1 387.0h1.2v1.2h-1.2zM847.1 399.1h1.2v1.2h-1.2zM847.1 411.2h1.2v1.2h-1.2zM847.1 423.4h1.2v1.2h-1.2zM847.1 435.5h1.2v1.2h-1.2zM847.1 447.6h1.2v1.2h-1.2zM847.1 459.7h1.2v1.2h-1.2zM48.7 25.8h1.2v1.6h-1.2zM66.8 25.8h1.2v1.6h-1.2zM85.0 25.8h1.2v1.6h-1.2zM103.1 25.8h1.2v1.6h-1.2zM121.3 25.8h1.2v1.6h-1.2zM139.4 25.8h1.2v1.6h-1.2zM157.6 25.8h1.2v1.6h-1.2zM175.7 25.8h1.2v1.6h-1.2zM193.9 25.8h1.2v1.6h-1.2zM212.0 25.8h1.2v1.6h-1.2zM230.2 25.8h1.2v1.6h-1.2zM248.3 25.8h1.2v1.6h-1.2zM266.4 25.8h1.2v1.6h-1.2zM284.6 25.8h1.2v1.6h-1.2zM302.7 25.8h1.2v1.6h-1.2zM320.9 25.8h1.2v1.6h-1.2zM339.0 25.8h1.2v1.6h-1.2zM357.2 25.8h1.2v1.6h-1.2zM375.3 25.8h1.2v1.6h-1.2zM393.5 25.8h1.2v1.6h-1.2zM411.6 25.8h1.2v1.6h-1.2zM429.8 25.8h1.2v1.6h-1.2zM447.9 25.8h1.2v1.6h-1.2zM466.1 25.8h1.2v1.6h-1.2zM484.2 25.8h1.2v1.6h-1.2zM502.3 25.8h1.2v1.6h-1.2zM520.5 25.8h1.2v1.6h-1.2zM538.6 25.8h1.2v1.6h-1.2zM556.8 25.8h1.2v1.6h-1.2zM574.9 25.8h1.2v1.6h-1.2zM593.1 25.8h1.2v1.6h-1.2zM611.2 25.8h1.2v1.6h-1.2zM629.4 25.8h1.2v1.6h-1.2zM647.5 25.8h1.2v1.6h-1.2zM665.7 25.8h1.2v1.6h-1.2zM683.8 25.8h1.2v1.6h-1.2zM702.0 25.8h1.2v1.6h-1.2zM720.1 25.8h1.2v1.6h-1.2zM738.2 25.8h1.2v1.6h-1.2zM756.4 25.8h1.2v1.6h-1.2zM774.5 25.8h1.2v1.6h-1.2zM792.7 25.8h1.2v1.6h-1.2zM810.8 25.8h1.2v1.6h-1.2zM829.0 25.8h1.2v1.6h-1.2zM847.1 25.8h1.2v1.6h-1.2zM865.3 25.8h1.2v1.6h-1.2zM883.4 25.8h1.2v1.6h-1.2zM901.6 25.8h1.2v1.6h-1.2zM919.7 25.8h1.2v1.6h-1.2zM121.3 28.0h1.2v1.2h-1.2zM121.3 30.0h1.2v1.2h-1.2zM212.0 28.0h1.2v1.2h-1.2zM212.0 30.0h1.2v1.2h-1.2zM302.7 28.0h1.2v1.2h-1.2zM302.7 30.0h1.2v1.2h-1.2zM393.5 28.0h1.2v1.2h-1.2zM393.5 30.0h1.2v1.2h-1.2zM484.2 28.0h1.2v1.2h-1.2zM484.2 30.0h1.2v1.2h-1.2zM574.9 28.0h1.2v1.2h-1.2zM574.9 30.0h1.2v1.2h-1.2zM665.7 28.0h1.2v1.2h-1.2zM665.7 30.0h1.2v1.2h-1.2zM756.4 28.0h1.2v1.2h-1.2zM756.4 30.0h1.2v1.2h-1.2zM847.1 28.0h1.2v1.2h-1.2zM847.1 30.0h1.2v1.2h-1.2zM32.8 35.5h1.2v1.2h-1.2zM935.6 35.5h1.2v1.2h-1.2zM34.5 35.5h1.2v1.2h-1.2zM933.9 35.5h1.2v1.2h-1.2zM32.8 47.6h1.2v1.2h-1.2zM935.6 47.6h1.2v1.2h-1.2zM34.5 47.6h1.2v1.2h-1.2zM933.9 47.6h1.2v1.2h-1.2zM32.8 59.8h1.2v1.2h-1.2zM935.6 59.8h1.2v1.2h-1.2zM34.5 59.8h1.2v1.2h-1.2zM933.9 59.8h1.2v1.2h-1.2zM32.8 71.9h1.2v1.2h-1.2zM935.6 71.9h1.2v1.2h-1.2zM34.5 71.9h1.2v1.2h-1.2zM933.9 71.9h1.2v1.2h-1.2zM32.8 84.0h1.2v1.2h-1.2zM935.6 84.0h1.2v1.2h-1.2zM34.5 84.0h1.2v1.2h-1.2zM933.9 84.0h1.2v1.2h-1.2zM36.4 84.0h1.2v1.2h-1.2zM932.0 84.0h1.2v1.2h-1.2zM32.8 96.1h1.2v1.2h-1.2zM935.6 96.1h1.2v1.2h-1.2zM34.5 96.1h1.2v1.2h-1.2zM933.9 96.1h1.2v1.2h-1.2zM32.8 108.2h1.2v1.2h-1.2zM935.6 108.2h1.2v1.2h-1.2zM34.5 108.2h1.2v1.2h-1.2zM933.9 108.2h1.2v1.2h-1.2zM32.8 120.4h1.2v1.2h-1.2zM935.6 120.4h1.2v1.2h-1.2zM34.5 120.4h1.2v1.2h-1.2zM933.9 120.4h1.2v1.2h-1.2zM32.8 132.5h1.2v1.2h-1.2zM935.6 132.5h1.2v1.2h-1.2zM34.5 132.5h1.2v1.2h-1.2zM933.9 132.5h1.2v1.2h-1.2zM32.8 144.6h1.2v1.2h-1.2zM935.6 144.6h1.2v1.2h-1.2zM34.5 144.6h1.2v1.2h-1.2zM933.9 144.6h1.2v1.2h-1.2zM36.4 144.6h1.2v1.2h-1.2zM932.0 144.6h1.2v1.2h-1.2zM32.8 156.7h1.2v1.2h-1.2zM935.6 156.7h1.2v1.2h-1.2zM34.5 156.7h1.2v1.2h-1.2zM933.9 156.7h1.2v1.2h-1.2zM32.8 168.8h1.2v1.2h-1.2zM935.6 168.8h1.2v1.2h-1.2zM34.5 168.8h1.2v1.2h-1.2zM933.9 168.8h1.2v1.2h-1.2zM32.8 181.0h1.2v1.2h-1.2zM935.6 181.0h1.2v1.2h-1.2zM34.5 181.0h1.2v1.2h-1.2zM933.9 181.0h1.2v1.2h-1.2zM32.8 193.1h1.2v1.2h-1.2zM935.6 193.1h1.2v1.2h-1.2zM34.5 193.1h1.2v1.2h-1.2zM933.9 193.1h1.2v1.2h-1.2zM32.8 205.2h1.2v1.2h-1.2zM935.6 205.2h1.2v1.2h-1.2zM34.5 205.2h1.2v1.2h-1.2zM933.9 205.2h1.2v1.2h-1.2zM36.4 205.2h1.2v1.2h-1.2zM932.0 205.2h1.2v1.2h-1.2zM32.8 217.3h1.2v1.2h-1.2zM935.6 217.3h1.2v1.2h-1.2zM34.5 217.3h1.2v1.2h-1.2zM933.9 217.3h1.2v1.2h-1.2zM32.8 229.4h1.2v1.2h-1.2zM935.6 229.4h1.2v1.2h-1.2zM34.5 229.4h1.2v1.2h-1.2zM933.9 229.4h1.2v1.2h-1.2zM32.8 241.6h1.2v1.2h-1.2zM935.6 241.6h1.2v1.2h-1.2zM34.5 241.6h1.2v1.2h-1.2zM933.9 241.6h1.2v1.2h-1.2zM32.8 253.7h1.2v1.2h-1.2zM935.6 253.7h1.2v1.2h-1.2zM34.5 253.7h1.2v1.2h-1.2zM933.9 253.7h1.2v1.2h-1.2zM32.8 265.8h1.2v1.2h-1.2zM935.6 265.8h1.2v1.2h-1.2zM34.5 265.8h1.2v1.2h-1.2zM933.9 265.8h1.2v1.2h-1.2zM36.4 265.8h1.2v1.2h-1.2zM932.0 265.8h1.2v1.2h-1.2zM32.8 277.9h1.2v1.2h-1.2zM935.6 277.9h1.2v1.2h-1.2zM34.5 277.9h1.2v1.2h-1.2zM933.9 277.9h1.2v1.2h-1.2zM32.8 290.0h1.2v1.2h-1.2zM935.6 290.0h1.2v1.2h-1.2zM34.5 290.0h1.2v1.2h-1.2zM933.9 290.0h1.2v1.2h-1.2zM32.8 302.2h1.2v1.2h-1.2zM935.6 302.2h1.2v1.2h-1.2zM34.5 302.2h1.2v1.2h-1.2zM933.9 302.2h1.2v1.2h-1.2zM32.8 314.3h1.2v1.2h-1.2zM935.6 314.3h1.2v1.2h-1.2zM34.5 314.3h1.2v1.2h-1.2zM933.9 314.3h1.2v1.2h-1.2zM32.8 326.4h1.2v1.2h-1.2zM935.6 326.4h1.2v1.2h-1.2zM34.5 326.4h1.2v1.2h-1.2zM933.9 326.4h1.2v1.2h-1.2zM36.4 326.4h1.2v1.2h-1.2zM932.0 326.4h1.2v1.2h-1.2zM32.8 338.5h1.2v1.2h-1.2zM935.6 338.5h1.2v1.2h-1.2zM34.5 338.5h1.2v1.2h-1.2zM933.9 338.5h1.2v1.2h-1.2zM32.8 350.6h1.2v1.2h-1.2zM935.6 350.6h1.2v1.2h-1.2zM34.5 350.6h1.2v1.2h-1.2zM933.9 350.6h1.2v1.2h-1.2zM32.8 362.8h1.2v1.2h-1.2zM935.6 362.8h1.2v1.2h-1.2zM34.5 362.8h1.2v1.2h-1.2zM933.9 362.8h1.2v1.2h-1.2zM32.8 374.9h1.2v1.2h-1.2zM935.6 374.9h1.2v1.2h-1.2zM34.5 374.9h1.2v1.2h-1.2zM933.9 374.9h1.2v1.2h-1.2zM32.8 387.0h1.2v1.2h-1.2zM935.6 387.0h1.2v1.2h-1.2zM34.5 387.0h1.2v1.2h-1.2zM933.9 387.0h1.2v1.2h-1.2zM36.4 387.0h1.2v1.2h-1.2zM932.0 387.0h1.2v1.2h-1.2zM32.8 399.1h1.2v1.2h-1.2zM935.6 399.1h1.2v1.2h-1.2zM34.5 399.1h1.2v1.2h-1.2zM933.9 399.1h1.2v1.2h-1.2zM32.8 411.2h1.2v1.2h-1.2zM935.6 411.2h1.2v1.2h-1.2zM34.5 411.2h1.2v1.2h-1.2zM933.9 411.2h1.2v1.2h-1.2zM32.8 423.4h1.2v1.2h-1.2zM935.6 423.4h1.2v1.2h-1.2zM34.5 423.4h1.2v1.2h-1.2zM933.9 423.4h1.2v1.2h-1.2zM32.8 435.5h1.2v1.2h-1.2zM935.6 435.5h1.2v1.2h-1.2zM34.5 435.5h1.2v1.2h-1.2zM933.9 435.5h1.2v1.2h-1.2zM32.8 447.6h1.2v1.2h-1.2zM935.6 447.6h1.2v1.2h-1.2zM34.5 447.6h1.2v1.2h-1.2zM933.9 447.6h1.2v1.2h-1.2zM36.4 447.6h1.2v1.2h-1.2zM932.0 447.6h1.2v1.2h-1.2zM32.8 459.7h1.2v1.2h-1.2zM935.6 459.7h1.2v1.2h-1.2zM34.5 459.7h1.2v1.2h-1.2zM933.9 459.7h1.2v1.2h-1.2zM480.6 35.5h1.2v1.2h-1.2zM482.4 35.5h1.2v1.2h-1.2zM486.0 35.5h1.2v1.2h-1.2zM487.8 35.5h1.2v1.2h-1.2zM480.6 47.6h1.2v1.2h-1.2zM482.4 47.6h1.2v1.2h-1.2zM486.0 47.6h1.2v1.2h-1.2zM487.8 47.6h1.2v1.2h-1.2zM480.6 59.8h1.2v1.2h-1.2zM482.4 59.8h1.2v1.2h-1.2zM486.0 59.8h1.2v1.2h-1.2zM487.8 59.8h1.2v1.2h-1.2zM480.6 71.9h1.2v1.2h-1.2zM482.4 71.9h1.2v1.2h-1.2zM486.0 71.9h1.2v1.2h-1.2zM487.8 71.9h1.2v1.2h-1.2zM480.6 84.0h1.2v1.2h-1.2zM482.4 84.0h1.2v1.2h-1.2zM486.0 84.0h1.2v1.2h-1.2zM487.8 84.0h1.2v1.2h-1.2zM480.6 96.1h1.2v1.2h-1.2zM482.4 96.1h1.2v1.2h-1.2zM486.0 96.1h1.2v1.2h-1.2zM487.8 96.1h1.2v1.2h-1.2zM480.6 108.2h1.2v1.2h-1.2zM482.4 108.2h1.2v1.2h-1.2zM486.0 108.2h1.2v1.2h-1.2zM487.8 108.2h1.2v1.2h-1.2zM480.6 120.4h1.2v1.2h-1.2zM482.4 120.4h1.2v1.2h-1.2zM486.0 120.4h1.2v1.2h-1.2zM487.8 120.4h1.2v1.2h-1.2zM480.6 132.5h1.2v1.2h-1.2zM482.4 132.5h1.2v1.2h-1.2zM486.0 132.5h1.2v1.2h-1.2zM487.8 132.5h1.2v1.2h-1.2zM480.6 144.6h1.2v1.2h-1.2zM482.4 144.6h1.2v1.2h-1.2zM486.0 144.6h1.2v1.2h-1.2zM487.8 144.6h1.2v1.2h-1.2zM480.6 156.7h1.2v1.2h-1.2zM482.4 156.7h1.2v1.2h-1.2zM486.0 156.7h1.2v1.2h-1.2zM487.8 156.7h1.2v1.2h-1.2zM480.6 168.8h1.2v1.2h-1.2zM482.4 168.8h1.2v1.2h-1.2zM486.0 168.8h1.2v1.2h-1.2zM487.8 168.8h1.2v1.2h-1.2zM480.6 181.0h1.2v1.2h-1.2zM482.4 181.0h1.2v1.2h-1.2zM486.0 181.0h1.2v1.2h-1.2zM487.8 181.0h1.2v1.2h-1.2zM480.6 193.1h1.2v1.2h-1.2zM482.4 193.1h1.2v1.2h-1.2zM486.0 193.1h1.2v1.2h-1.2zM487.8 193.1h1.2v1.2h-1.2zM480.6 205.2h1.2v1.2h-1.2zM482.4 205.2h1.2v1.2h-1.2zM486.0 205.2h1.2v1.2h-1.2zM487.8 205.2h1.2v1.2h-1.2zM480.6 217.3h1.2v1.2h-1.2zM482.4 217.3h1.2v1.2h-1.2zM486.0 217.3h1.2v1.2h-1.2zM487.8 217.3h1.2v1.2h-1.2zM480.6 229.4h1.2v1.2h-1.2zM482.4 229.4h1.2v1.2h-1.2zM486.0 229.4h1.2v1.2h-1.2zM487.8 229.4h1.2v1.2h-1.2zM480.6 241.6h1.2v1.2h-1.2zM482.4 241.6h1.2v1.2h-1.2zM486.0 241.6h1.2v1.2h-1.2zM487.8 241.6h1.2v1.2h-1.2zM480.6 253.7h1.2v1.2h-1.2zM482.4 253.7h1.2v1.2h-1.2zM486.0 253.7h1.2v1.2h-1.2zM487.8 253.7h1.2v1.2h-1.2zM480.6 265.8h1.2v1.2h-1.2zM482.4 265.8h1.2v1.2h-1.2zM486.0 265.8h1.2v1.2h-1.2zM487.8 265.8h1.2v1.2h-1.2zM480.6 277.9h1.2v1.2h-1.2zM482.4 277.9h1.2v1.2h-1.2zM486.0 277.9h1.2v1.2h-1.2zM487.8 277.9h1.2v1.2h-1.2zM480.6 290.0h1.2v1.2h-1.2zM482.4 290.0h1.2v1.2h-1.2zM486.0 290.0h1.2v1.2h-1.2zM487.8 290.0h1.2v1.2h-1.2zM480.6 302.2h1.2v1.2h-1.2zM482.4 302.2h1.2v1.2h-1.2zM486.0 302.2h1.2v1.2h-1.2zM487.8 302.2h1.2v1.2h-1.2zM480.6 314.3h1.2v1.2h-1.2zM482.4 314.3h1.2v1.2h-1.2zM486.0 314.3h1.2v1.2h-1.2zM487.8 314.3h1.2v1.2h-1.2zM480.6 326.4h1.2v1.2h-1.2zM482.4 326.4h1.2v1.2h-1.2zM486.0 326.4h1.2v1.2h-1.2zM487.8 326.4h1.2v1.2h-1.2zM480.6 338.5h1.2v1.2h-1.2zM482.4 338.5h1.2v1.2h-1.2zM486.0 338.5h1.2v1.2h-1.2zM487.8 338.5h1.2v1.2h-1.2zM480.6 350.6h1.2v1.2h-1.2zM482.4 350.6h1.2v1.2h-1.2zM486.0 350.6h1.2v1.2h-1.2zM487.8 350.6h1.2v1.2h-1.2zM480.6 362.8h1.2v1.2h-1.2zM482.4 362.8h1.2v1.2h-1.2zM486.0 362.8h1.2v1.2h-1.2zM487.8 362.8h1.2v1.2h-1.2zM480.6 374.9h1.2v1.2h-1.2zM482.4 374.9h1.2v1.2h-1.2zM486.0 374.9h1.2v1.2h-1.2zM487.8 374.9h1.2v1.2h-1.2zM480.6 387.0h1.2v1.2h-1.2zM482.4 387.0h1.2v1.2h-1.2zM486.0 387.0h1.2v1.2h-1.2zM487.8 387.0h1.2v1.2h-1.2zM480.6 399.1h1.2v1.2h-1.2zM482.4 399.1h1.2v1.2h-1.2zM486.0 399.1h1.2v1.2h-1.2zM487.8 399.1h1.2v1.2h-1.2zM480.6 411.2h1.2v1.2h-1.2zM482.4 411.2h1.2v1.2h-1.2zM486.0 411.2h1.2v1.2h-1.2zM487.8 411.2h1.2v1.2h-1.2zM480.6 423.4h1.2v1.2h-1.2zM482.4 423.4h1.2v1.2h-1.2zM486.0 423.4h1.2v1.2h-1.2zM487.8 423.4h1.2v1.2h-1.2zM480.6 435.5h1.2v1.2h-1.2zM482.4 435.5h1.2v1.2h-1.2zM486.0 435.5h1.2v1.2h-1.2zM487.8 435.5h1.2v1.2h-1.2zM480.6 447.6h1.2v1.2h-1.2zM482.4 447.6h1.2v1.2h-1.2zM486.0 447.6h1.2v1.2h-1.2zM487.8 447.6h1.2v1.2h-1.2zM480.6 459.7h1.2v1.2h-1.2zM482.4 459.7h1.2v1.2h-1.2zM486.0 459.7h1.2v1.2h-1.2zM487.8 459.7h1.2v1.2h-1.2zM48.7 262.2h1.2v1.2h-1.2zM48.7 264.0h1.2v1.2h-1.2zM48.7 267.6h1.2v1.2h-1.2zM48.7 269.4h1.2v1.2h-1.2zM66.8 262.2h1.2v1.2h-1.2zM66.8 264.0h1.2v1.2h-1.2zM66.8 267.6h1.2v1.2h-1.2zM66.8 269.4h1.2v1.2h-1.2zM85.0 262.2h1.2v1.2h-1.2zM85.0 264.0h1.2v1.2h-1.2zM85.0 267.6h1.2v1.2h-1.2zM85.0 269.4h1.2v1.2h-1.2zM103.1 262.2h1.2v1.2h-1.2zM103.1 264.0h1.2v1.2h-1.2zM103.1 267.6h1.2v1.2h-1.2zM103.1 269.4h1.2v1.2h-1.2zM121.3 262.2h1.2v1.2h-1.2zM121.3 264.0h1.2v1.2h-1.2zM121.3 267.6h1.2v1.2h-1.2zM121.3 269.4h1.2v1.2h-1.2zM139.4 262.2h1.2v1.2h-1.2zM139.4 264.0h1.2v1.2h-1.2zM139.4 267.6h1.2v1.2h-1.2zM139.4 269.4h1.2v1.2h-1.2zM157.6 262.2h1.2v1.2h-1.2zM157.6 264.0h1.2v1.2h-1.2zM157.6 267.6h1.2v1.2h-1.2zM157.6 269.4h1.2v1.2h-1.2zM175.7 262.2h1.2v1.2h-1.2zM175.7 264.0h1.2v1.2h-1.2zM175.7 267.6h1.2v1.2h-1.2zM175.7 269.4h1.2v1.2h-1.2zM193.9 262.2h1.2v1.2h-1.2zM193.9 264.0h1.2v1.2h-1.2zM193.9 267.6h1.2v1.2h-1.2zM193.9 269.4h1.2v1.2h-1.2zM212.0 262.2h1.2v1.2h-1.2zM212.0 264.0h1.2v1.2h-1.2zM212.0 267.6h1.2v1.2h-1.2zM212.0 269.4h1.2v1.2h-1.2zM230.2 262.2h1.2v1.2h-1.2zM230.2 264.0h1.2v1.2h-1.2zM230.2 267.6h1.2v1.2h-1.2zM230.2 269.4h1.2v1.2h-1.2zM248.3 262.2h1.2v1.2h-1.2zM248.3 264.0h1.2v1.2h-1.2zM248.3 267.6h1.2v1.2h-1.2zM248.3 269.4h1.2v1.2h-1.2zM266.4 262.2h1.2v1.2h-1.2zM266.4 264.0h1.2v1.2h-1.2zM266.4 267.6h1.2v1.2h-1.2zM266.4 269.4h1.2v1.2h-1.2zM284.6 262.2h1.2v1.2h-1.2zM284.6 264.0h1.2v1.2h-1.2zM284.6 267.6h1.2v1.2h-1.2zM284.6 269.4h1.2v1.2h-1.2zM302.7 262.2h1.2v1.2h-1.2zM302.7 264.0h1.2v1.2h-1.2zM302.7 267.6h1.2v1.2h-1.2zM302.7 269.4h1.2v1.2h-1.2zM320.9 262.2h1.2v1.2h-1.2zM320.9 264.0h1.2v1.2h-1.2zM320.9 267.6h1.2v1.2h-1.2zM320.9 269.4h1.2v1.2h-1.2zM339.0 262.2h1.2v1.2h-1.2zM339.0 264.0h1.2v1.2h-1.2zM339.0 267.6h1.2v1.2h-1.2zM339.0 269.4h1.2v1.2h-1.2zM357.2 262.2h1.2v1.2h-1.2zM357.2 264.0h1.2v1.2h-1.2zM357.2 267.6h1.2v1.2h-1.2zM357.2 269.4h1.2v1.2h-1.2zM375.3 262.2h1.2v1.2h-1.2zM375.3 264.0h1.2v1.2h-1.2zM375.3 267.6h1.2v1.2h-1.2zM375.3 269.4h1.2v1.2h-1.2zM393.5 262.2h1.2v1.2h-1.2zM393.5 264.0h1.2v1.2h-1.2zM393.5 267.6h1.2v1.2h-1.2zM393.5 269.4h1.2v1.2h-1.2zM411.6 262.2h1.2v1.2h-1.2zM411.6 264.0h1.2v1.2h-1.2zM411.6 267.6h1.2v1.2h-1.2zM411.6 269.4h1.2v1.2h-1.2zM429.8 262.2h1.2v1.2h-1.2zM429.8 264.0h1.2v1.2h-1.2zM429.8 267.6h1.2v1.2h-1.2zM429.8 269.4h1.2v1.2h-1.2zM447.9 262.2h1.2v1.2h-1.2zM447.9 264.0h1.2v1.2h-1.2zM447.9 267.6h1.2v1.2h-1.2zM447.9 269.4h1.2v1.2h-1.2zM466.1 262.2h1.2v1.2h-1.2zM466.1 264.0h1.2v1.2h-1.2zM466.1 267.6h1.2v1.2h-1.2zM466.1 269.4h1.2v1.2h-1.2zM484.2 262.2h1.2v1.2h-1.2zM484.2 264.0h1.2v1.2h-1.2zM484.2 267.6h1.2v1.2h-1.2zM484.2 269.4h1.2v1.2h-1.2zM502.3 262.2h1.2v1.2h-1.2zM502.3 264.0h1.2v1.2h-1.2zM502.3 267.6h1.2v1.2h-1.2zM502.3 269.4h1.2v1.2h-1.2zM520.5 262.2h1.2v1.2h-1.2zM520.5 264.0h1.2v1.2h-1.2zM520.5 267.6h1.2v1.2h-1.2zM520.5 269.4h1.2v1.2h-1.2zM538.6 262.2h1.2v1.2h-1.2zM538.6 264.0h1.2v1.2h-1.2zM538.6 267.6h1.2v1.2h-1.2zM538.6 269.4h1.2v1.2h-1.2zM556.8 262.2h1.2v1.2h-1.2zM556.8 264.0h1.2v1.2h-1.2zM556.8 267.6h1.2v1.2h-1.2zM556.8 269.4h1.2v1.2h-1.2zM574.9 262.2h1.2v1.2h-1.2zM574.9 264.0h1.2v1.2h-1.2zM574.9 267.6h1.2v1.2h-1.2zM574.9 269.4h1.2v1.2h-1.2zM593.1 262.2h1.2v1.2h-1.2zM593.1 264.0h1.2v1.2h-1.2zM593.1 267.6h1.2v1.2h-1.2zM593.1 269.4h1.2v1.2h-1.2zM611.2 262.2h1.2v1.2h-1.2zM611.2 264.0h1.2v1.2h-1.2zM611.2 267.6h1.2v1.2h-1.2zM611.2 269.4h1.2v1.2h-1.2zM629.4 262.2h1.2v1.2h-1.2zM629.4 264.0h1.2v1.2h-1.2zM629.4 267.6h1.2v1.2h-1.2zM629.4 269.4h1.2v1.2h-1.2zM647.5 262.2h1.2v1.2h-1.2zM647.5 264.0h1.2v1.2h-1.2zM647.5 267.6h1.2v1.2h-1.2zM647.5 269.4h1.2v1.2h-1.2zM665.7 262.2h1.2v1.2h-1.2zM665.7 264.0h1.2v1.2h-1.2zM665.7 267.6h1.2v1.2h-1.2zM665.7 269.4h1.2v1.2h-1.2zM683.8 262.2h1.2v1.2h-1.2zM683.8 264.0h1.2v1.2h-1.2zM683.8 267.6h1.2v1.2h-1.2zM683.8 269.4h1.2v1.2h-1.2zM702.0 262.2h1.2v1.2h-1.2zM702.0 264.0h1.2v1.2h-1.2zM702.0 267.6h1.2v1.2h-1.2zM702.0 269.4h1.2v1.2h-1.2zM720.1 262.2h1.2v1.2h-1.2zM720.1 264.0h1.2v1.2h-1.2zM720.1 267.6h1.2v1.2h-1.2zM720.1 269.4h1.2v1.2h-1.2zM738.2 262.2h1.2v1.2h-1.2zM738.2 264.0h1.2v1.2h-1.2zM738.2 267.6h1.2v1.2h-1.2zM738.2 269.4h1.2v1.2h-1.2zM756.4 262.2h1.2v1.2h-1.2zM756.4 264.0h1.2v1.2h-1.2zM756.4 267.6h1.2v1.2h-1.2zM756.4 269.4h1.2v1.2h-1.2zM774.5 262.2h1.2v1.2h-1.2zM774.5 264.0h1.2v1.2h-1.2zM774.5 267.6h1.2v1.2h-1.2zM774.5 269.4h1.2v1.2h-1.2zM792.7 262.2h1.2v1.2h-1.2zM792.7 264.0h1.2v1.2h-1.2zM792.7 267.6h1.2v1.2h-1.2zM792.7 269.4h1.2v1.2h-1.2zM810.8 262.2h1.2v1.2h-1.2zM810.8 264.0h1.2v1.2h-1.2zM810.8 267.6h1.2v1.2h-1.2zM810.8 269.4h1.2v1.2h-1.2zM829.0 262.2h1.2v1.2h-1.2zM829.0 264.0h1.2v1.2h-1.2zM829.0 267.6h1.2v1.2h-1.2zM829.0 269.4h1.2v1.2h-1.2zM847.1 262.2h1.2v1.2h-1.2zM847.1 264.0h1.2v1.2h-1.2zM847.1 267.6h1.2v1.2h-1.2zM847.1 269.4h1.2v1.2h-1.2zM865.3 262.2h1.2v1.2h-1.2zM865.3 264.0h1.2v1.2h-1.2zM865.3 267.6h1.2v1.2h-1.2zM865.3 269.4h1.2v1.2h-1.2zM883.4 262.2h1.2v1.2h-1.2zM883.4 264.0h1.2v1.2h-1.2zM883.4 267.6h1.2v1.2h-1.2zM883.4 269.4h1.2v1.2h-1.2zM901.6 262.2h1.2v1.2h-1.2zM901.6 264.0h1.2v1.2h-1.2zM901.6 267.6h1.2v1.2h-1.2zM901.6 269.4h1.2v1.2h-1.2zM919.7 262.2h1.2v1.2h-1.2zM919.7 264.0h1.2v1.2h-1.2zM919.7 267.6h1.2v1.2h-1.2zM919.7 269.4h1.2v1.2h-1.2z" fill="#9a9a96"/>
<rect x="483.9" y="24" width="1.8" height="446" fill="#a29e8e"/>
<rect x="31" y="265.7" width="907" height="1.4" fill="#a9a595"/>
<rect x="147.8" y="343" width="1.2" height="83" fill="#560058"/>
<rect x="601.2" y="343" width="1.2" height="83" fill="#560058"/>
<path d="M30.5 324.9h1.0v18.2h-1.0zM31.5 325.6h1.0v17.4h-1.0zM32.5 325.6h1.0v17.9h-1.0zM33.5 325.0h1.0v19.1h-1.0zM34.5 324.9h1.0v19.4h-1.0zM35.5 325.6h1.0v18.6h-1.0zM36.5 324.2h1.0v19.0h-1.0zM37.5 324.8h1.0v17.7h-1.0zM38.5 324.5h1.0v19.0h-1.0zM39.5 325.6h1.0v17.4h-1.0zM40.5 324.4h1.0v19.1h-1.0zM41.5 325.6h1.0v17.7h-1.0zM42.5 325.6h1.0v17.7h-1.0zM43.5 325.6h1.0v18.5h-1.0zM44.5 325.6h1.0v18.6h-1.0zM45.5 324.6h1.0v19.9h-1.0zM46.5 325.6h1.0v18.2h-1.0zM47.5 325.6h1.0v18.5h-1.0zM48.5 324.3h1.0v19.4h-1.0zM49.5 325.6h1.0v16.8h-1.0zM50.5 325.6h1.0v18.2h-1.0zM51.5 324.3h1.0v20.0h-1.0zM52.5 325.6h1.0v17.9h-1.0zM53.5 325.6h1.0v18.0h-1.0zM54.5 325.0h1.0v19.0h-1.0zM55.5 324.8h1.0v19.3h-1.0zM56.5 324.6h1.0v19.5h-1.0zM57.5 325.6h1.0v16.8h-1.0zM58.5 324.6h1.0v19.5h-1.0zM59.5 325.6h1.0v17.6h-1.0zM60.5 324.8h1.0v18.9h-1.0zM61.5 325.1h1.0v18.4h-1.0zM62.5 325.6h1.0v16.8h-1.0zM63.5 325.6h1.0v18.2h-1.0zM64.5 325.6h1.0v18.5h-1.0zM65.5 325.6h1.0v16.8h-1.0zM66.5 325.6h1.0v17.9h-1.0zM67.5 324.4h1.0v18.7h-1.0zM68.5 324.9h1.0v18.1h-1.0zM69.5 324.9h1.0v18.5h-1.0zM70.5 324.1h1.0v19.1h-1.0zM71.5 324.7h1.0v18.4h-1.0zM72.5 325.6h1.0v16.8h-1.0zM73.5 325.6h1.0v17.5h-1.0zM74.5 324.7h1.0v19.4h-1.0zM75.5 325.1h1.0v17.4h-1.0zM76.5 325.6h1.0v18.1h-1.0zM77.5 324.5h1.0v17.9h-1.0zM78.5 325.6h1.0v17.7h-1.0zM79.5 323.8h1.0v21.3h-1.0zM80.5 325.6h1.0v17.6h-1.0zM81.5 325.6h1.0v16.8h-1.0zM82.5 325.6h1.0v16.8h-1.0zM83.5 325.6h1.0v19.0h-1.0zM84.5 325.6h1.0v17.4h-1.0zM85.5 324.8h1.0v19.1h-1.0zM86.5 325.6h1.0v18.6h-1.0zM87.5 325.6h1.0v16.8h-1.0zM88.5 323.7h1.0v19.5h-1.0zM89.5 324.4h1.0v18.0h-1.0zM90.5 325.6h1.0v18.2h-1.0zM91.5 325.6h1.0v18.2h-1.0zM92.5 325.6h1.0v19.8h-1.0zM93.5 325.6h1.0v18.4h-1.0zM94.5 324.2h1.0v18.2h-1.0zM95.5 323.5h1.0v19.0h-1.0zM96.5 325.6h1.0v17.5h-1.0zM97.5 324.1h1.0v18.3h-1.0zM98.5 324.2h1.0v18.3h-1.0zM99.5 325.6h1.0v18.1h-1.0zM100.5 325.1h1.0v17.4h-1.0zM101.5 325.6h1.0v18.6h-1.0zM102.5 322.9h1.0v19.6h-1.0zM103.5 324.8h1.0v18.5h-1.0zM104.5 325.6h1.0v17.9h-1.0zM105.5 324.1h1.0v19.5h-1.0zM106.5 325.6h1.0v16.8h-1.0zM107.5 322.8h1.0v20.9h-1.0zM108.5 325.6h1.0v17.9h-1.0zM109.5 325.1h1.0v19.5h-1.0zM110.5 325.6h1.0v19.5h-1.0zM111.5 324.5h1.0v19.5h-1.0zM112.5 324.5h1.0v18.9h-1.0zM113.5 325.6h1.0v18.1h-1.0zM114.5 325.6h1.0v16.8h-1.0zM115.5 323.2h1.0v20.5h-1.0zM116.5 325.6h1.0v18.0h-1.0zM117.5 325.6h1.0v16.8h-1.0zM118.5 325.6h1.0v16.8h-1.0zM119.5 325.6h1.0v18.1h-1.0zM120.5 325.6h1.0v16.8h-1.0zM121.5 325.0h1.0v18.1h-1.0zM122.5 325.0h1.0v19.0h-1.0zM123.5 325.6h1.0v18.3h-1.0zM124.5 325.6h1.0v18.5h-1.0zM125.5 325.6h1.0v18.6h-1.0zM126.5 323.4h1.0v19.1h-1.0zM127.5 325.6h1.0v17.9h-1.0zM128.5 325.6h1.0v17.6h-1.0zM129.5 324.3h1.0v19.4h-1.0zM130.5 324.0h1.0v19.8h-1.0zM131.5 325.6h1.0v18.6h-1.0zM132.5 325.6h1.0v16.8h-1.0zM133.5 324.8h1.0v19.2h-1.0zM134.5 325.0h1.0v19.2h-1.0zM135.5 325.6h1.0v17.5h-1.0zM136.5 325.6h1.0v18.3h-1.0zM137.5 325.0h1.0v18.5h-1.0zM138.5 324.1h1.0v20.0h-1.0zM139.5 324.2h1.0v20.0h-1.0zM140.5 325.6h1.0v18.1h-1.0zM141.5 325.6h1.0v17.5h-1.0zM142.5 325.6h1.0v17.5h-1.0zM143.5 325.0h1.0v18.4h-1.0zM144.5 324.3h1.0v19.4h-1.0zM145.5 324.7h1.0v18.6h-1.0zM146.5 324.3h1.0v19.0h-1.0zM147.5 325.6h1.0v16.8h-1.0z" fill="#a000a4"/>
<rect x="30.5" y="326.0" width="118.0" height="16.1" fill="url(#gm)"/>
<path d="M148.3 423.6h1.0v19.4h-1.0zM149.3 425.0h1.0v18.0h-1.0zM150.3 425.0h1.0v16.4h-1.0zM151.3 422.3h1.0v21.0h-1.0zM152.3 425.0h1.0v17.1h-1.0zM153.3 424.4h1.0v18.1h-1.0zM154.3 424.4h1.0v19.3h-1.0zM155.3 425.0h1.0v17.4h-1.0zM156.3 424.0h1.0v18.9h-1.0zM157.3 423.4h1.0v18.0h-1.0zM158.3 425.0h1.0v18.9h-1.0zM159.3 422.9h1.0v19.8h-1.0zM160.3 425.0h1.0v17.4h-1.0zM161.3 425.0h1.0v17.5h-1.0zM162.3 424.1h1.0v18.0h-1.0zM163.3 423.1h1.0v20.0h-1.0zM164.3 425.0h1.0v18.4h-1.0zM165.3 425.0h1.0v17.6h-1.0zM166.3 425.0h1.0v18.4h-1.0zM167.3 425.0h1.0v18.6h-1.0zM168.3 425.0h1.0v18.4h-1.0zM169.3 425.0h1.0v18.0h-1.0zM170.3 425.0h1.0v18.6h-1.0zM171.3 425.0h1.0v18.7h-1.0zM172.3 425.0h1.0v17.4h-1.0zM173.3 424.4h1.0v17.9h-1.0zM174.3 425.0h1.0v18.2h-1.0zM175.3 425.0h1.0v17.9h-1.0zM176.3 423.6h1.0v19.4h-1.0zM177.3 425.0h1.0v17.1h-1.0zM178.3 425.0h1.0v17.1h-1.0zM179.3 423.7h1.0v19.8h-1.0zM180.3 425.0h1.0v17.7h-1.0zM181.3 425.0h1.0v18.5h-1.0zM182.3 425.0h1.0v17.1h-1.0zM183.3 424.2h1.0v18.4h-1.0zM184.3 425.0h1.0v17.1h-1.0zM185.3 423.8h1.0v19.6h-1.0zM186.3 423.9h1.0v19.0h-1.0zM187.3 423.5h1.0v20.4h-1.0zM188.3 425.0h1.0v17.9h-1.0zM189.3 425.0h1.0v16.4h-1.0zM190.3 425.0h1.0v17.4h-1.0zM191.3 425.0h1.0v18.1h-1.0zM192.3 423.9h1.0v17.5h-1.0zM193.3 423.6h1.0v20.2h-1.0zM194.3 425.0h1.0v18.7h-1.0zM195.3 425.0h1.0v17.0h-1.0zM196.3 425.0h1.0v17.6h-1.0zM197.3 424.1h1.0v19.6h-1.0zM198.3 423.7h1.0v18.6h-1.0zM199.3 425.0h1.0v18.8h-1.0zM200.3 424.1h1.0v19.9h-1.0zM201.3 425.0h1.0v17.8h-1.0zM202.3 424.4h1.0v19.2h-1.0zM203.3 423.5h1.0v19.1h-1.0zM204.3 425.0h1.0v17.7h-1.0zM205.3 425.0h1.0v20.2h-1.0zM206.3 425.0h1.0v20.4h-1.0zM207.3 425.0h1.0v17.0h-1.0zM208.3 425.0h1.0v18.5h-1.0zM209.3 425.0h1.0v17.0h-1.0zM210.3 425.0h1.0v17.9h-1.0zM211.3 423.0h1.0v20.9h-1.0zM212.3 423.8h1.0v19.3h-1.0zM213.3 423.2h1.0v19.2h-1.0zM214.3 425.0h1.0v17.4h-1.0zM215.3 425.0h1.0v16.4h-1.0zM216.3 425.0h1.0v17.3h-1.0zM217.3 424.1h1.0v18.4h-1.0zM218.3 423.9h1.0v21.3h-1.0zM219.3 425.0h1.0v18.0h-1.0zM220.3 423.0h1.0v19.6h-1.0zM221.3 425.0h1.0v18.0h-1.0zM222.3 425.0h1.0v19.3h-1.0zM223.3 424.2h1.0v18.7h-1.0zM224.3 425.0h1.0v18.7h-1.0zM225.3 424.5h1.0v19.3h-1.0zM226.3 425.0h1.0v17.0h-1.0zM227.3 422.2h1.0v21.5h-1.0zM228.3 425.0h1.0v17.2h-1.0zM229.3 423.9h1.0v20.0h-1.0zM230.3 425.0h1.0v18.5h-1.0zM231.3 425.0h1.0v17.0h-1.0zM232.3 425.0h1.0v18.8h-1.0zM233.3 425.0h1.0v17.2h-1.0zM234.3 423.8h1.0v18.4h-1.0zM235.3 423.9h1.0v18.9h-1.0zM236.3 423.8h1.0v18.8h-1.0zM237.3 425.0h1.0v16.4h-1.0zM238.3 425.0h1.0v19.7h-1.0zM239.3 424.2h1.0v17.2h-1.0zM240.3 425.0h1.0v17.0h-1.0zM241.3 425.0h1.0v17.8h-1.0zM242.3 423.8h1.0v20.6h-1.0zM243.3 424.1h1.0v19.2h-1.0zM244.3 423.6h1.0v19.4h-1.0zM245.3 423.4h1.0v20.2h-1.0zM246.3 424.3h1.0v18.3h-1.0zM247.3 425.0h1.0v17.3h-1.0zM248.3 424.0h1.0v19.9h-1.0zM249.3 424.1h1.0v19.9h-1.0zM250.3 424.4h1.0v18.3h-1.0zM251.3 425.0h1.0v20.0h-1.0zM252.3 425.0h1.0v19.4h-1.0zM253.3 423.5h1.0v18.6h-1.0zM254.3 425.0h1.0v17.7h-1.0zM255.3 423.2h1.0v19.4h-1.0zM256.3 422.2h1.0v21.8h-1.0zM257.3 424.1h1.0v19.5h-1.0zM258.3 425.0h1.0v17.9h-1.0zM259.3 422.2h1.0v20.5h-1.0zM260.3 425.0h1.0v17.8h-1.0zM261.3 425.0h1.0v17.0h-1.0zM262.3 424.4h1.0v20.0h-1.0zM263.3 425.0h1.0v19.5h-1.0zM264.3 423.4h1.0v19.1h-1.0zM265.3 425.0h1.0v17.5h-1.0zM266.3 423.7h1.0v21.3h-1.0zM267.3 425.0h1.0v17.4h-1.0zM268.3 425.0h1.0v16.4h-1.0zM269.3 425.0h1.0v17.5h-1.0zM270.3 425.0h1.0v18.8h-1.0zM271.3 423.6h1.0v20.0h-1.0zM272.3 425.0h1.0v17.6h-1.0zM273.3 422.9h1.0v19.2h-1.0zM274.3 423.7h1.0v18.5h-1.0zM275.3 423.9h1.0v20.1h-1.0zM276.3 425.0h1.0v16.4h-1.0zM277.3 424.4h1.0v18.6h-1.0zM278.3 425.0h1.0v17.4h-1.0zM279.3 425.0h1.0v18.3h-1.0zM280.3 425.0h1.0v18.3h-1.0zM281.3 423.6h1.0v19.6h-1.0zM282.3 422.4h1.0v20.1h-1.0zM283.3 424.3h1.0v20.5h-1.0zM284.3 422.9h1.0v18.6h-1.0zM285.3 425.0h1.0v18.6h-1.0zM286.3 425.0h1.0v16.4h-1.0zM287.3 424.0h1.0v19.7h-1.0zM288.3 425.0h1.0v17.5h-1.0zM289.3 424.3h1.0v17.2h-1.0zM290.3 425.0h1.0v19.5h-1.0zM291.3 425.0h1.0v17.5h-1.0zM292.3 425.0h1.0v19.1h-1.0zM293.3 425.0h1.0v17.4h-1.0zM294.3 423.2h1.0v19.3h-1.0zM295.3 425.0h1.0v17.4h-1.0zM296.3 424.1h1.0v18.2h-1.0zM297.3 423.1h1.0v20.0h-1.0zM298.3 424.4h1.0v18.7h-1.0zM299.3 425.0h1.0v17.3h-1.0zM300.3 425.0h1.0v17.5h-1.0zM301.3 422.2h1.0v21.0h-1.0zM302.3 422.9h1.0v22.6h-1.0zM303.3 423.1h1.0v19.3h-1.0zM304.3 423.5h1.0v20.1h-1.0zM305.3 425.0h1.0v19.6h-1.0zM306.3 424.5h1.0v18.8h-1.0zM307.3 425.0h1.0v18.2h-1.0zM308.3 422.7h1.0v19.8h-1.0zM309.3 425.0h1.0v19.1h-1.0zM310.3 425.0h1.0v18.9h-1.0zM311.3 424.4h1.0v21.1h-1.0zM312.3 425.0h1.0v18.8h-1.0zM313.3 422.2h1.0v21.4h-1.0zM314.3 423.6h1.0v19.2h-1.0zM315.3 425.0h1.0v17.3h-1.0zM316.3 424.1h1.0v18.7h-1.0zM317.3 424.2h1.0v19.6h-1.0zM318.3 423.9h1.0v18.2h-1.0zM319.3 425.0h1.0v18.1h-1.0zM320.3 425.0h1.0v17.6h-1.0zM321.3 425.0h1.0v17.8h-1.0zM322.3 425.0h1.0v17.8h-1.0zM323.3 423.8h1.0v18.7h-1.0zM324.3 425.0h1.0v17.9h-1.0zM325.3 424.0h1.0v18.3h-1.0zM326.3 425.0h1.0v17.8h-1.0zM327.3 425.0h1.0v18.2h-1.0zM328.3 423.7h1.0v19.3h-1.0zM329.3 423.9h1.0v20.0h-1.0zM330.3 423.6h1.0v17.9h-1.0zM331.3 425.0h1.0v17.3h-1.0zM332.3 425.0h1.0v18.9h-1.0zM333.3 425.0h1.0v18.5h-1.0zM334.3 425.0h1.0v17.7h-1.0zM335.3 425.0h1.0v18.7h-1.0zM336.3 423.6h1.0v19.4h-1.0zM337.3 425.0h1.0v17.5h-1.0zM338.3 425.0h1.0v17.0h-1.0zM339.3 424.3h1.0v20.7h-1.0zM340.3 425.0h1.0v18.5h-1.0zM341.3 423.9h1.0v18.8h-1.0zM342.3 425.0h1.0v18.1h-1.0zM343.3 425.0h1.0v18.9h-1.0zM344.3 425.0h1.0v18.5h-1.0zM345.3 423.4h1.0v19.3h-1.0zM346.3 425.0h1.0v17.3h-1.0zM347.3 425.0h1.0v18.6h-1.0zM348.3 423.8h1.0v17.7h-1.0zM349.3 425.0h1.0v17.6h-1.0zM350.3 424.5h1.0v18.8h-1.0zM351.3 425.0h1.0v18.7h-1.0zM352.3 424.3h1.0v17.8h-1.0zM353.3 424.1h1.0v18.6h-1.0zM354.3 423.9h1.0v18.6h-1.0zM355.3 425.0h1.0v17.2h-1.0zM356.3 425.0h1.0v17.2h-1.0zM357.3 423.8h1.0v21.4h-1.0zM358.3 425.0h1.0v17.0h-1.0zM359.3 425.0h1.0v17.7h-1.0zM360.3 425.0h1.0v18.8h-1.0zM361.3 425.0h1.0v18.8h-1.0zM362.3 423.9h1.0v18.6h-1.0zM363.3 423.6h1.0v19.5h-1.0zM364.3 425.0h1.0v17.3h-1.0zM365.3 425.0h1.0v18.2h-1.0zM366.3 425.0h1.0v17.6h-1.0zM367.3 423.3h1.0v21.8h-1.0zM368.3 425.0h1.0v18.6h-1.0zM369.3 425.0h1.0v18.4h-1.0zM370.3 425.0h1.0v17.2h-1.0zM371.3 424.5h1.0v19.0h-1.0zM372.3 425.0h1.0v18.4h-1.0zM373.3 423.9h1.0v19.7h-1.0zM374.3 425.0h1.0v18.2h-1.0zM375.3 425.0h1.0v18.7h-1.0zM376.3 424.2h1.0v19.3h-1.0zM377.3 425.0h1.0v17.6h-1.0zM378.3 425.0h1.0v17.4h-1.0zM379.3 425.0h1.0v18.3h-1.0zM380.3 425.0h1.0v16.4h-1.0zM381.3 425.0h1.0v18.3h-1.0zM382.3 425.0h1.0v18.4h-1.0zM383.3 425.0h1.0v17.4h-1.0zM384.3 425.0h1.0v18.8h-1.0zM385.3 424.5h1.0v19.4h-1.0zM386.3 423.2h1.0v18.9h-1.0zM387.3 425.0h1.0v18.3h-1.0zM388.3 425.0h1.0v18.1h-1.0zM389.3 422.3h1.0v21.4h-1.0zM390.3 423.5h1.0v21.9h-1.0zM391.3 424.3h1.0v17.8h-1.0zM392.3 425.0h1.0v18.2h-1.0zM393.3 425.0h1.0v17.5h-1.0zM394.3 424.4h1.0v18.0h-1.0zM395.3 422.8h1.0v19.7h-1.0zM396.3 423.7h1.0v18.9h-1.0zM397.3 425.0h1.0v18.7h-1.0zM398.3 425.0h1.0v17.8h-1.0zM399.3 425.0h1.0v17.6h-1.0zM400.3 425.0h1.0v17.4h-1.0zM401.3 425.0h1.0v18.6h-1.0zM402.3 424.5h1.0v19.0h-1.0zM403.3 425.0h1.0v17.9h-1.0zM404.3 425.0h1.0v17.3h-1.0zM405.3 425.0h1.0v18.6h-1.0zM406.3 423.5h1.0v19.0h-1.0zM407.3 425.0h1.0v17.2h-1.0zM408.3 425.0h1.0v18.5h-1.0zM409.3 425.0h1.0v18.2h-1.0zM410.3 422.9h1.0v20.9h-1.0zM411.3 423.5h1.0v18.9h-1.0zM412.3 423.5h1.0v19.2h-1.0zM413.3 425.0h1.0v17.9h-1.0zM414.3 425.0h1.0v18.5h-1.0zM415.3 425.0h1.0v17.6h-1.0zM416.3 423.6h1.0v19.9h-1.0zM417.3 424.0h1.0v19.1h-1.0zM418.3 424.0h1.0v20.4h-1.0zM419.3 424.2h1.0v19.5h-1.0zM420.3 424.3h1.0v18.3h-1.0zM421.3 425.0h1.0v17.6h-1.0zM422.3 423.4h1.0v18.8h-1.0zM423.3 425.0h1.0v17.7h-1.0zM424.3 425.0h1.0v18.4h-1.0zM425.3 425.0h1.0v18.2h-1.0zM426.3 424.3h1.0v17.8h-1.0zM427.3 422.4h1.0v20.6h-1.0zM428.3 425.0h1.0v17.2h-1.0zM429.3 425.0h1.0v18.4h-1.0zM430.3 425.0h1.0v18.1h-1.0zM431.3 425.0h1.0v17.4h-1.0zM432.3 425.0h1.0v20.1h-1.0zM433.3 425.0h1.0v20.0h-1.0zM434.3 425.0h1.0v17.6h-1.0zM435.3 425.0h1.0v17.8h-1.0zM436.3 425.0h1.0v18.2h-1.0zM437.3 424.0h1.0v19.2h-1.0zM438.3 425.0h1.0v18.8h-1.0zM439.3 423.8h1.0v19.0h-1.0zM440.3 425.0h1.0v16.4h-1.0zM441.3 423.9h1.0v19.7h-1.0zM442.3 425.0h1.0v17.2h-1.0zM443.3 425.0h1.0v18.4h-1.0zM444.3 425.0h1.0v18.6h-1.0zM445.3 425.0h1.0v18.8h-1.0zM446.3 423.7h1.0v19.8h-1.0zM447.3 423.4h1.0v18.7h-1.0zM448.3 424.1h1.0v18.8h-1.0zM449.3 425.0h1.0v17.7h-1.0zM450.3 424.3h1.0v19.6h-1.0zM451.3 425.0h1.0v18.6h-1.0zM452.3 423.1h1.0v20.4h-1.0zM453.3 425.0h1.0v17.9h-1.0zM454.3 425.0h1.0v18.9h-1.0zM455.3 422.6h1.0v21.1h-1.0zM456.3 425.0h1.0v18.0h-1.0zM457.3 423.6h1.0v20.1h-1.0zM458.3 424.1h1.0v18.8h-1.0zM459.3 424.5h1.0v18.1h-1.0zM460.3 424.2h1.0v18.7h-1.0zM461.3 425.0h1.0v17.7h-1.0zM462.3 425.0h1.0v19.0h-1.0zM463.3 425.0h1.0v20.1h-1.0zM464.3 423.6h1.0v18.4h-1.0zM465.3 423.5h1.0v19.0h-1.0zM466.3 424.3h1.0v19.2h-1.0zM467.3 423.2h1.0v22.0h-1.0zM468.3 423.5h1.0v20.0h-1.0zM469.3 425.0h1.0v20.1h-1.0zM470.3 425.0h1.0v18.3h-1.0zM471.3 425.0h1.0v17.8h-1.0zM472.3 425.0h1.0v17.5h-1.0zM473.3 424.3h1.0v17.8h-1.0zM474.3 425.0h1.0v17.9h-1.0zM475.3 425.0h1.0v18.7h-1.0zM476.3 423.6h1.0v19.5h-1.0zM477.3 425.0h1.0v17.7h-1.0zM478.3 425.0h1.0v16.4h-1.0zM479.3 423.8h1.0v18.3h-1.0zM480.3 425.0h1.0v18.8h-1.0zM481.3 422.1h1.0v20.8h-1.0zM482.3 425.0h1.0v18.4h-1.0zM483.3 425.0h1.0v18.7h-1.0zM484.3 422.8h1.0v20.8h-1.0zM485.3 424.0h1.0v19.1h-1.0zM486.3 425.0h1.0v18.6h-1.0zM487.3 425.0h1.0v17.5h-1.0zM488.3 425.0h1.0v16.4h-1.0zM489.3 425.0h1.0v17.6h-1.0zM490.3 423.0h1.0v20.3h-1.0zM491.3 425.0h1.0v18.4h-1.0zM492.3 425.0h1.0v17.0h-1.0zM493.3 423.4h1.0v20.5h-1.0zM494.3 425.0h1.0v18.5h-1.0zM495.3 425.0h1.0v18.2h-1.0zM496.3 425.0h1.0v18.1h-1.0zM497.3 425.0h1.0v18.3h-1.0zM498.3 425.0h1.0v17.2h-1.0zM499.3 424.5h1.0v19.4h-1.0zM500.3 425.0h1.0v18.6h-1.0zM501.3 425.0h1.0v17.5h-1.0zM502.3 422.9h1.0v20.0h-1.0zM503.3 425.0h1.0v19.0h-1.0zM504.3 425.0h1.0v17.2h-1.0zM505.3 425.0h1.0v18.8h-1.0zM506.3 425.0h1.0v17.7h-1.0zM507.3 425.0h1.0v20.4h-1.0zM508.3 425.0h1.0v17.2h-1.0zM509.3 425.0h1.0v17.3h-1.0zM510.3 424.5h1.0v17.7h-1.0zM511.3 425.0h1.0v18.7h-1.0zM512.3 424.5h1.0v18.0h-1.0zM513.3 425.0h1.0v17.1h-1.0zM514.3 425.0h1.0v18.7h-1.0zM515.3 425.0h1.0v18.2h-1.0zM516.3 425.0h1.0v18.8h-1.0zM517.3 423.4h1.0v18.6h-1.0zM518.3 423.8h1.0v18.4h-1.0zM519.3 422.5h1.0v21.3h-1.0zM520.3 425.0h1.0v17.7h-1.0zM521.3 425.0h1.0v18.3h-1.0zM522.3 423.6h1.0v19.7h-1.0zM523.3 425.0h1.0v17.7h-1.0zM524.3 425.0h1.0v20.1h-1.0zM525.3 425.0h1.0v17.1h-1.0zM526.3 425.0h1.0v18.6h-1.0zM527.3 422.6h1.0v18.8h-1.0zM528.3 425.0h1.0v17.6h-1.0zM529.3 425.0h1.0v19.5h-1.0zM530.3 425.0h1.0v18.7h-1.0zM531.3 425.0h1.0v17.0h-1.0zM532.3 424.0h1.0v19.6h-1.0zM533.3 425.0h1.0v18.6h-1.0zM534.3 425.0h1.0v19.8h-1.0zM535.3 423.6h1.0v19.8h-1.0zM536.3 425.0h1.0v17.1h-1.0zM537.3 425.0h1.0v17.4h-1.0zM538.3 425.0h1.0v19.3h-1.0zM539.3 425.0h1.0v17.9h-1.0zM540.3 424.2h1.0v19.4h-1.0zM541.3 425.0h1.0v18.6h-1.0zM542.3 425.0h1.0v18.1h-1.0zM543.3 425.0h1.0v19.7h-1.0zM544.3 425.0h1.0v17.3h-1.0zM545.3 424.3h1.0v18.4h-1.0zM546.3 425.0h1.0v18.0h-1.0zM547.3 424.5h1.0v17.0h-1.0zM548.3 423.3h1.0v20.3h-1.0zM549.3 423.8h1.0v19.2h-1.0zM550.3 424.5h1.0v17.0h-1.0zM551.3 425.0h1.0v18.1h-1.0zM552.3 423.6h1.0v20.3h-1.0zM553.3 425.0h1.0v18.9h-1.0zM554.3 424.5h1.0v17.9h-1.0zM555.3 424.4h1.0v19.3h-1.0zM556.3 425.0h1.0v20.3h-1.0zM557.3 423.8h1.0v18.4h-1.0zM558.3 425.0h1.0v18.1h-1.0zM559.3 425.0h1.0v16.4h-1.0zM560.3 425.0h1.0v17.8h-1.0zM561.3 423.4h1.0v18.0h-1.0zM562.3 424.5h1.0v18.2h-1.0zM563.3 425.0h1.0v20.2h-1.0zM564.3 423.6h1.0v19.7h-1.0zM565.3 425.0h1.0v17.2h-1.0zM566.3 425.0h1.0v20.0h-1.0zM567.3 423.8h1.0v18.4h-1.0zM568.3 423.1h1.0v19.9h-1.0zM569.3 424.2h1.0v19.1h-1.0zM570.3 423.7h1.0v18.4h-1.0zM571.3 425.0h1.0v18.8h-1.0zM572.3 425.0h1.0v19.2h-1.0zM573.3 425.0h1.0v18.8h-1.0zM574.3 425.0h1.0v17.9h-1.0zM575.3 422.3h1.0v20.9h-1.0zM576.3 424.3h1.0v19.2h-1.0zM577.3 425.0h1.0v18.7h-1.0zM578.3 424.0h1.0v18.5h-1.0zM579.3 425.0h1.0v17.3h-1.0zM580.3 425.0h1.0v18.8h-1.0zM581.3 423.4h1.0v20.4h-1.0zM582.3 425.0h1.0v17.9h-1.0zM583.3 424.2h1.0v18.5h-1.0zM584.3 425.0h1.0v16.4h-1.0zM585.3 425.0h1.0v17.5h-1.0zM586.3 425.0h1.0v18.4h-1.0zM587.3 423.4h1.0v20.2h-1.0zM588.3 423.2h1.0v20.4h-1.0zM589.3 425.0h1.0v17.8h-1.0zM590.3 425.0h1.0v18.1h-1.0zM591.3 424.3h1.0v19.1h-1.0zM592.3 424.4h1.0v18.8h-1.0zM593.3 425.0h1.0v17.4h-1.0zM594.3 425.0h1.0v18.6h-1.0zM595.3 425.0h1.0v17.1h-1.0zM596.3 425.0h1.0v18.4h-1.0zM597.3 423.6h1.0v20.1h-1.0zM598.3 425.0h1.0v17.0h-1.0zM599.3 425.0h1.0v18.7h-1.0zM600.3 424.3h1.0v18.4h-1.0zM601.3 424.1h0.7v17.9h-0.7z" fill="#a000a4"/>
<rect x="148.3" y="425.4" width="453.7" height="15.7" fill="url(#gm)"/>
<path d="M601.8 325.6h1.0v18.0h-1.0zM602.8 324.3h1.0v18.1h-1.0zM603.8 325.6h1.0v18.3h-1.0zM604.8 323.0h1.0v21.1h-1.0zM605.8 325.6h1.0v18.0h-1.0zM606.8 325.6h1.0v17.4h-1.0zM607.8 325.6h1.0v17.6h-1.0zM608.8 324.8h1.0v17.6h-1.0zM609.8 325.0h1.0v18.3h-1.0zM610.8 324.4h1.0v19.2h-1.0zM611.8 325.6h1.0v18.5h-1.0zM612.8 325.6h1.0v17.5h-1.0zM613.8 325.6h1.0v17.7h-1.0zM614.8 324.7h1.0v19.1h-1.0zM615.8 325.6h1.0v18.1h-1.0zM616.8 325.6h1.0v18.4h-1.0zM617.8 325.6h1.0v17.9h-1.0zM618.8 325.6h1.0v17.9h-1.0zM619.8 325.6h1.0v19.2h-1.0zM620.8 324.7h1.0v19.5h-1.0zM621.8 325.6h1.0v16.8h-1.0zM622.8 325.6h1.0v16.8h-1.0zM623.8 324.5h1.0v17.9h-1.0zM624.8 325.6h1.0v17.9h-1.0zM625.8 325.6h1.0v18.0h-1.0zM626.8 324.6h1.0v18.4h-1.0zM627.8 324.0h1.0v21.7h-1.0zM628.8 325.6h1.0v16.8h-1.0zM629.8 325.6h1.0v16.8h-1.0zM630.8 324.4h1.0v19.5h-1.0zM631.8 324.5h1.0v17.9h-1.0zM632.8 325.6h1.0v18.0h-1.0zM633.8 322.8h1.0v20.6h-1.0zM634.8 325.6h1.0v18.1h-1.0zM635.8 325.6h1.0v17.7h-1.0zM636.8 325.6h1.0v17.5h-1.0zM637.8 325.0h1.0v18.6h-1.0zM638.8 324.8h1.0v18.9h-1.0zM639.8 325.6h1.0v18.1h-1.0zM640.8 325.6h1.0v18.3h-1.0zM641.8 325.6h1.0v18.1h-1.0zM642.8 325.6h1.0v17.7h-1.0zM643.8 324.5h1.0v19.2h-1.0zM644.8 324.7h1.0v17.7h-1.0zM645.8 324.5h1.0v18.9h-1.0zM646.8 325.6h1.0v18.4h-1.0zM647.8 325.0h1.0v17.4h-1.0zM648.8 323.9h1.0v19.7h-1.0zM649.8 325.6h1.0v17.6h-1.0zM650.8 325.6h1.0v18.9h-1.0zM651.8 324.7h1.0v19.1h-1.0zM652.8 325.6h1.0v16.8h-1.0zM653.8 325.6h1.0v19.8h-1.0zM654.8 325.6h1.0v18.4h-1.0zM655.8 325.6h1.0v16.8h-1.0zM656.8 324.1h1.0v19.9h-1.0zM657.8 325.6h1.0v18.6h-1.0zM658.8 325.6h1.0v18.4h-1.0zM659.8 325.6h1.0v17.8h-1.0zM660.8 325.6h1.0v18.3h-1.0zM661.8 324.7h1.0v18.8h-1.0zM662.8 324.2h1.0v18.2h-1.0zM663.8 325.6h1.0v17.6h-1.0zM664.8 324.9h1.0v18.8h-1.0zM665.8 324.1h1.0v20.0h-1.0zM666.8 325.6h1.0v16.8h-1.0zM667.8 324.6h1.0v17.8h-1.0zM668.8 325.0h1.0v18.6h-1.0zM669.8 325.6h1.0v19.5h-1.0zM670.8 325.6h1.0v18.0h-1.0zM671.8 325.6h1.0v17.8h-1.0zM672.8 325.6h1.0v18.6h-1.0zM673.8 325.6h1.0v17.5h-1.0zM674.8 323.5h1.0v20.3h-1.0zM675.8 325.6h1.0v16.8h-1.0zM676.8 325.6h1.0v18.2h-1.0zM677.8 325.6h1.0v18.0h-1.0zM678.8 325.6h1.0v17.8h-1.0zM679.8 325.6h1.0v16.8h-1.0zM680.8 325.6h1.0v18.5h-1.0zM681.8 325.6h1.0v16.8h-1.0zM682.8 325.6h1.0v16.8h-1.0zM683.8 323.8h1.0v19.9h-1.0zM684.8 325.6h1.0v17.6h-1.0zM685.8 325.6h1.0v17.8h-1.0zM686.8 325.6h1.0v17.4h-1.0zM687.8 323.0h1.0v20.9h-1.0zM688.8 324.8h1.0v17.7h-1.0zM689.8 325.6h1.0v17.6h-1.0zM690.8 325.6h1.0v17.7h-1.0zM691.8 325.6h1.0v18.6h-1.0zM692.8 325.6h1.0v17.5h-1.0zM693.8 324.3h1.0v18.9h-1.0zM694.8 324.5h1.0v17.9h-1.0zM695.8 325.6h1.0v16.8h-1.0zM696.8 325.1h1.0v19.7h-1.0zM697.8 325.6h1.0v17.6h-1.0zM698.8 325.0h1.0v17.5h-1.0zM699.8 325.6h1.0v17.9h-1.0zM700.8 323.9h1.0v18.5h-1.0zM701.8 325.6h1.0v16.8h-1.0zM702.8 323.2h1.0v19.9h-1.0zM703.8 325.6h1.0v16.8h-1.0zM704.8 324.1h1.0v18.3h-1.0zM705.8 324.4h1.0v18.0h-1.0zM706.8 325.6h1.0v16.8h-1.0zM707.8 324.7h1.0v20.0h-1.0zM708.8 324.1h1.0v19.9h-1.0zM709.8 324.9h1.0v18.3h-1.0zM710.8 325.6h1.0v18.1h-1.0zM711.8 324.5h1.0v19.0h-1.0zM712.8 325.0h1.0v17.5h-1.0zM713.8 323.7h1.0v19.7h-1.0zM714.8 325.1h1.0v18.4h-1.0zM715.8 324.3h1.0v19.0h-1.0zM716.8 325.6h1.0v17.9h-1.0zM717.8 325.6h1.0v16.8h-1.0zM718.8 324.7h1.0v20.2h-1.0zM719.8 325.6h1.0v18.6h-1.0zM720.8 325.6h1.0v17.9h-1.0zM721.8 324.3h1.0v19.8h-1.0zM722.8 325.6h1.0v17.7h-1.0zM723.8 325.6h1.0v18.5h-1.0zM724.8 324.5h1.0v18.8h-1.0zM725.8 325.6h1.0v18.2h-1.0zM726.8 325.6h1.0v17.9h-1.0zM727.8 324.9h1.0v17.5h-1.0zM728.8 324.4h1.0v19.4h-1.0zM729.8 323.3h1.0v19.7h-1.0zM730.8 324.9h1.0v19.1h-1.0zM731.8 324.7h1.0v17.8h-1.0zM732.8 325.6h1.0v16.8h-1.0zM733.8 325.6h1.0v17.7h-1.0zM734.8 324.4h1.0v19.1h-1.0zM735.8 323.1h1.0v20.2h-1.0zM736.8 325.6h1.0v18.2h-1.0zM737.8 325.0h1.0v17.5h-1.0zM738.8 325.6h1.0v18.7h-1.0zM739.8 324.9h1.0v18.5h-1.0zM740.8 323.9h1.0v19.9h-1.0zM741.8 324.2h1.0v19.8h-1.0zM742.8 324.6h1.0v18.8h-1.0zM743.8 324.2h1.0v20.5h-1.0zM744.8 324.2h1.0v18.9h-1.0zM745.8 325.0h1.0v19.6h-1.0zM746.8 325.6h1.0v18.8h-1.0zM747.8 325.6h1.0v18.3h-1.0zM748.8 325.6h1.0v17.5h-1.0zM749.8 325.6h1.0v18.6h-1.0zM750.8 325.6h1.0v19.9h-1.0zM751.8 325.6h1.0v17.4h-1.0zM752.8 325.6h1.0v18.0h-1.0zM753.8 325.6h1.0v18.3h-1.0zM754.8 324.3h1.0v18.1h-1.0zM755.8 324.5h1.0v18.0h-1.0zM756.8 325.6h1.0v17.7h-1.0zM757.8 324.7h1.0v18.6h-1.0zM758.8 324.9h1.0v20.4h-1.0zM759.8 324.8h1.0v18.7h-1.0zM760.8 325.6h1.0v17.7h-1.0zM761.8 325.6h1.0v18.1h-1.0zM762.8 324.2h1.0v19.8h-1.0zM763.8 324.4h1.0v19.2h-1.0zM764.8 325.6h1.0v16.8h-1.0zM765.8 324.8h1.0v18.5h-1.0zM766.8 324.8h1.0v19.1h-1.0zM767.8 323.9h1.0v19.8h-1.0zM768.8 323.8h1.0v19.2h-1.0zM769.8 325.6h1.0v18.8h-1.0zM770.8 325.6h1.0v16.8h-1.0zM771.8 325.6h1.0v18.0h-1.0zM772.8 323.8h1.0v19.3h-1.0zM773.8 325.6h1.0v18.2h-1.0zM774.8 325.6h1.0v17.7h-1.0zM775.8 324.9h1.0v19.1h-1.0zM776.8 325.6h1.0v17.6h-1.0zM777.8 325.6h1.0v16.8h-1.0zM778.8 325.6h1.0v18.4h-1.0zM779.8 325.6h1.0v19.1h-1.0zM780.8 324.2h1.0v19.3h-1.0zM781.8 325.6h1.0v18.4h-1.0zM782.8 325.1h1.0v18.8h-1.0zM783.8 325.6h1.0v20.0h-1.0zM784.8 325.6h1.0v18.0h-1.0zM785.8 324.8h1.0v18.3h-1.0zM786.8 325.6h1.0v17.9h-1.0zM787.8 325.6h1.0v17.4h-1.0zM788.8 323.8h1.0v20.6h-1.0zM789.8 325.6h1.0v16.8h-1.0zM790.8 325.6h1.0v17.7h-1.0zM791.8 325.6h1.0v17.9h-1.0zM792.8 324.6h1.0v19.5h-1.0zM793.8 325.6h1.0v17.7h-1.0zM794.8 323.3h1.0v20.0h-1.0zM795.8 324.7h1.0v19.5h-1.0zM796.8 325.6h1.0v16.8h-1.0zM797.8 325.6h1.0v16.8h-1.0zM798.8 325.6h1.0v16.8h-1.0zM799.8 324.4h1.0v19.0h-1.0zM800.8 325.6h1.0v16.8h-1.0zM801.8 325.6h1.0v17.7h-1.0zM802.8 324.1h1.0v19.1h-1.0zM803.8 325.6h1.0v17.5h-1.0zM804.8 325.6h1.0v18.1h-1.0zM805.8 323.3h1.0v20.2h-1.0zM806.8 324.9h1.0v17.5h-1.0zM807.8 325.6h1.0v18.5h-1.0zM808.8 325.0h1.0v18.3h-1.0zM809.8 325.6h1.0v17.6h-1.0zM810.8 325.6h1.0v18.0h-1.0zM811.8 325.6h1.0v17.9h-1.0zM812.8 324.6h1.0v17.8h-1.0zM813.8 325.6h1.0v19.8h-1.0zM814.8 324.0h1.0v20.4h-1.0zM815.8 325.6h1.0v17.6h-1.0zM816.8 325.6h1.0v18.4h-1.0zM817.8 324.2h1.0v19.1h-1.0zM818.8 324.0h1.0v19.3h-1.0zM819.8 324.3h1.0v19.8h-1.0zM820.8 325.6h1.0v16.8h-1.0zM821.8 325.6h1.0v16.8h-1.0zM822.8 325.6h1.0v18.3h-1.0zM823.8 324.3h1.0v19.8h-1.0zM824.8 324.7h1.0v21.0h-1.0zM825.8 325.6h1.0v18.1h-1.0zM826.8 324.5h1.0v18.0h-1.0zM827.8 324.1h1.0v19.2h-1.0zM828.8 324.6h1.0v17.8h-1.0zM829.8 325.6h1.0v17.4h-1.0zM830.8 324.2h1.0v19.5h-1.0zM831.8 324.3h1.0v18.8h-1.0zM832.8 325.6h1.0v18.2h-1.0zM833.8 325.6h1.0v16.8h-1.0zM834.8 324.7h1.0v18.9h-1.0zM835.8 325.6h1.0v16.8h-1.0zM836.8 324.9h1.0v17.6h-1.0zM837.8 325.6h1.0v18.0h-1.0zM838.8 324.2h1.0v20.0h-1.0zM839.8 325.6h1.0v17.8h-1.0zM840.8 324.1h1.0v18.9h-1.0zM841.8 324.7h1.0v19.0h-1.0zM842.8 323.5h1.0v20.2h-1.0zM843.8 325.1h1.0v19.2h-1.0zM844.8 324.9h1.0v18.4h-1.0zM845.8 324.5h1.0v19.2h-1.0zM846.8 325.6h1.0v16.8h-1.0zM847.8 325.6h1.0v18.1h-1.0zM848.8 325.6h1.0v16.8h-1.0zM849.8 325.6h1.0v18.2h-1.0zM850.8 323.6h1.0v22.0h-1.0zM851.8 325.6h1.0v17.7h-1.0zM852.8 325.6h1.0v19.4h-1.0zM853.8 325.6h1.0v18.1h-1.0zM854.8 323.9h1.0v19.5h-1.0zM855.8 325.6h1.0v17.8h-1.0zM856.8 324.8h1.0v18.3h-1.0zM857.8 324.1h1.0v19.4h-1.0zM858.8 325.6h1.0v17.6h-1.0zM859.8 324.8h1.0v19.2h-1.0zM860.8 325.6h1.0v16.8h-1.0zM861.8 324.1h1.0v19.0h-1.0zM862.8 324.5h1.0v18.0h-1.0zM863.8 323.0h1.0v21.1h-1.0zM864.8 324.6h1.0v17.9h-1.0zM865.8 324.8h1.0v18.4h-1.0zM866.8 324.3h1.0v19.2h-1.0zM867.8 324.4h1.0v18.0h-1.0zM868.8 325.6h1.0v18.3h-1.0zM869.8 325.6h1.0v17.5h-1.0zM870.8 325.6h1.0v16.8h-1.0zM871.8 324.9h1.0v18.7h-1.0zM872.8 325.6h1.0v18.5h-1.0zM873.8 324.7h1.0v20.5h-1.0zM874.8 323.1h1.0v20.0h-1.0zM875.8 323.9h1.0v19.5h-1.0zM876.8 325.6h1.0v17.7h-1.0zM877.8 325.6h1.0v18.6h-1.0zM878.8 325.6h1.0v16.8h-1.0zM879.8 324.4h1.0v20.4h-1.0zM880.8 324.9h1.0v19.1h-1.0zM881.8 324.2h1.0v19.5h-1.0zM882.8 325.6h1.0v18.2h-1.0zM883.8 325.6h1.0v18.3h-1.0zM884.8 324.3h1.0v21.1h-1.0zM885.8 324.3h1.0v18.2h-1.0zM886.8 325.6h1.0v18.0h-1.0zM887.8 325.6h1.0v17.4h-1.0zM888.8 325.6h1.0v18.4h-1.0zM889.8 322.7h1.0v21.3h-1.0zM890.8 325.1h1.0v18.0h-1.0zM891.8 325.6h1.0v17.6h-1.0zM892.8 325.6h1.0v17.5h-1.0zM893.8 324.3h1.0v18.2h-1.0zM894.8 325.1h1.0v19.6h-1.0zM895.8 325.6h1.0v18.2h-1.0zM896.8 324.2h1.0v19.2h-1.0zM897.8 325.6h1.0v18.3h-1.0zM898.8 324.4h1.0v19.7h-1.0zM899.8 324.5h1.0v19.7h-1.0zM900.8 325.6h1.0v17.6h-1.0zM901.8 324.8h1.0v18.5h-1.0zM902.8 324.3h1.0v19.1h-1.0zM903.8 325.6h1.0v18.1h-1.0zM904.8 324.2h1.0v18.3h-1.0zM905.8 324.3h1.0v18.2h-1.0zM906.8 324.7h1.0v19.4h-1.0zM907.8 324.3h1.0v19.2h-1.0zM908.8 325.6h1.0v16.8h-1.0zM909.8 324.1h1.0v19.9h-1.0zM910.8 325.6h1.0v18.5h-1.0zM911.8 325.6h1.0v17.4h-1.0zM912.8 324.0h1.0v20.2h-1.0zM913.8 324.3h1.0v18.9h-1.0zM914.8 325.6h1.0v17.8h-1.0zM915.8 325.6h1.0v20.0h-1.0zM916.8 325.6h1.0v17.7h-1.0zM917.8 325.6h1.0v17.4h-1.0zM918.8 325.6h1.0v17.9h-1.0zM919.8 325.1h1.0v17.4h-1.0zM920.8 324.1h1.0v19.5h-1.0zM921.8 324.6h1.0v19.3h-1.0zM922.8 324.3h1.0v18.9h-1.0zM923.8 323.4h1.0v19.1h-1.0zM924.8 324.9h1.0v17.6h-1.0zM925.8 325.6h1.0v19.1h-1.0zM926.8 324.8h1.0v18.2h-1.0zM927.8 325.6h1.0v18.1h-1.0zM928.8 324.0h1.0v19.9h-1.0zM929.8 325.6h1.0v18.2h-1.0zM930.8 325.6h1.0v16.8h-1.0zM931.8 325.6h1.0v17.8h-1.0zM932.8 322.7h1.0v20.8h-1.0zM933.8 323.8h1.0v18.6h-1.0zM934.8 324.4h1.0v18.0h-1.0zM935.8 324.4h1.0v18.9h-1.0zM936.8 325.0h1.0v17.5h-1.0zM937.8 325.6h0.2v16.8h-0.2z" fill="#a000a4"/>
<rect x="601.8" y="326.0" width="336.2" height="16.1" fill="url(#gm)"/>
<rect x="122.0" y="177" width="1.2" height="84" fill="#006064"/>
<rect x="144.8" y="177" width="1.2" height="84" fill="#006064"/>
<rect x="576.2" y="177" width="1.2" height="84" fill="#006064"/>
<rect x="599.8" y="177" width="1.2" height="84" fill="#006064"/>
<path d="M30.5 258.9h1.0v17.1h-1.0zM31.5 258.1h1.0v16.5h-1.0zM32.5 258.9h1.0v15.7h-1.0zM33.5 257.7h1.0v16.8h-1.0zM34.5 259.0h1.0v15.5h-1.0zM35.5 258.9h1.0v16.9h-1.0zM36.5 260.4h1.0v14.1h-1.0zM37.5 259.0h1.0v17.8h-1.0zM38.5 260.4h1.0v15.9h-1.0zM39.5 258.9h1.0v18.3h-1.0zM40.5 259.7h1.0v14.8h-1.0zM41.5 257.8h1.0v19.9h-1.0zM42.5 259.7h1.0v14.9h-1.0zM43.5 259.0h1.0v15.5h-1.0zM44.5 260.4h1.0v14.1h-1.0zM45.5 259.4h1.0v15.2h-1.0zM46.5 260.4h1.0v14.9h-1.0zM47.5 259.8h1.0v16.5h-1.0zM48.5 257.9h1.0v17.7h-1.0zM49.5 260.4h1.0v14.1h-1.0zM50.5 259.2h1.0v15.3h-1.0zM51.5 260.4h1.0v15.6h-1.0zM52.5 259.2h1.0v16.4h-1.0zM53.5 259.4h1.0v16.0h-1.0zM54.5 258.4h1.0v17.7h-1.0zM55.5 259.4h1.0v16.8h-1.0zM56.5 259.0h1.0v15.5h-1.0zM57.5 259.3h1.0v15.2h-1.0zM58.5 260.4h1.0v14.7h-1.0zM59.5 259.4h1.0v15.2h-1.0zM60.5 259.3h1.0v15.2h-1.0zM61.5 260.4h1.0v15.2h-1.0zM62.5 257.3h1.0v19.2h-1.0zM63.5 260.4h1.0v15.6h-1.0zM64.5 259.8h1.0v14.7h-1.0zM65.5 259.2h1.0v17.2h-1.0zM66.5 260.4h1.0v15.5h-1.0zM67.5 259.3h1.0v15.3h-1.0zM68.5 259.2h1.0v15.3h-1.0zM69.5 259.2h1.0v18.5h-1.0zM70.5 260.4h1.0v14.1h-1.0zM71.5 259.8h1.0v14.7h-1.0zM72.5 257.5h1.0v17.0h-1.0zM73.5 259.6h1.0v16.7h-1.0zM74.5 259.8h1.0v14.8h-1.0zM75.5 258.4h1.0v16.1h-1.0zM76.5 260.4h1.0v14.7h-1.0zM77.5 260.4h1.0v15.5h-1.0zM78.5 260.4h1.0v14.1h-1.0zM79.5 260.4h1.0v15.1h-1.0zM80.5 258.5h1.0v16.1h-1.0zM81.5 259.5h1.0v15.9h-1.0zM82.5 260.4h1.0v16.8h-1.0zM83.5 259.8h1.0v16.5h-1.0zM84.5 260.4h1.0v14.1h-1.0zM85.5 259.6h1.0v16.2h-1.0zM86.5 259.3h1.0v16.7h-1.0zM87.5 258.8h1.0v17.6h-1.0zM88.5 258.4h1.0v17.4h-1.0zM89.5 259.1h1.0v16.4h-1.0zM90.5 260.4h1.0v15.6h-1.0zM91.5 260.4h1.0v16.7h-1.0zM92.5 260.4h1.0v15.9h-1.0zM93.5 259.3h1.0v15.3h-1.0zM94.5 258.7h1.0v17.2h-1.0zM95.5 258.6h1.0v19.1h-1.0zM96.5 259.0h1.0v15.6h-1.0zM97.5 259.6h1.0v14.9h-1.0zM98.5 258.6h1.0v16.6h-1.0zM99.5 258.8h1.0v15.7h-1.0zM100.5 259.0h1.0v17.4h-1.0zM101.5 260.4h1.0v14.7h-1.0zM102.5 260.4h1.0v15.8h-1.0zM103.5 259.6h1.0v17.4h-1.0zM104.5 258.3h1.0v16.3h-1.0zM105.5 258.7h1.0v17.5h-1.0zM106.5 260.4h1.0v14.7h-1.0zM107.5 259.0h1.0v16.9h-1.0zM108.5 259.2h1.0v15.3h-1.0zM109.5 258.9h1.0v17.3h-1.0zM110.5 258.6h1.0v15.9h-1.0zM111.5 260.4h1.0v16.5h-1.0zM112.5 258.8h1.0v17.6h-1.0zM113.5 259.2h1.0v15.3h-1.0zM114.5 257.8h1.0v17.5h-1.0zM115.5 258.6h1.0v15.9h-1.0zM116.5 258.6h1.0v17.3h-1.0zM117.5 260.4h1.0v16.0h-1.0zM118.5 260.4h1.0v15.1h-1.0zM119.5 259.6h1.0v15.0h-1.0zM120.5 258.8h1.0v16.4h-1.0zM121.5 258.4h1.0v19.3h-1.0zM122.5 257.9h0.9v17.9h-0.9z" fill="#009ca0"/>
<rect x="30.5" y="260.8" width="92.9" height="13.4" fill="url(#gc)"/>
<path d="M122.2 157.6h1.0v20.1h-1.0zM123.2 156.9h1.0v19.8h-1.0zM124.2 158.0h1.0v18.8h-1.0zM125.2 156.3h1.0v20.4h-1.0zM126.2 158.7h1.0v18.7h-1.0zM127.2 158.7h1.0v19.0h-1.0zM128.2 158.7h1.0v19.0h-1.0zM129.2 157.7h1.0v19.0h-1.0zM130.2 157.1h1.0v19.6h-1.0zM131.2 158.0h1.0v19.9h-1.0zM132.2 158.7h1.0v18.1h-1.0zM133.2 157.4h1.0v19.3h-1.0zM134.2 158.7h1.0v18.1h-1.0zM135.2 158.7h1.0v19.2h-1.0zM136.2 157.9h1.0v19.7h-1.0zM137.2 158.7h1.0v19.3h-1.0zM138.2 157.7h1.0v20.0h-1.0zM139.2 158.7h1.0v18.1h-1.0zM140.2 157.9h1.0v18.8h-1.0zM141.2 158.7h1.0v19.1h-1.0zM142.2 158.7h1.0v18.1h-1.0zM143.2 156.3h1.0v20.4h-1.0zM144.2 158.7h1.0v19.3h-1.0zM145.2 158.7h0.5v18.1h-0.5z" fill="#009ca0"/>
<rect x="122.2" y="159.0" width="23.5" height="17.4" fill="url(#gc)"/>
<path d="M144.4 259.6h1.0v15.0h-1.0zM145.4 260.4h1.0v15.1h-1.0zM146.4 259.6h1.0v15.9h-1.0zM147.4 260.4h1.0v14.1h-1.0zM148.4 260.4h1.0v15.3h-1.0zM149.4 260.4h1.0v14.1h-1.0zM150.4 260.4h1.0v14.1h-1.0zM151.4 259.0h1.0v15.5h-1.0zM152.4 260.4h1.0v15.7h-1.0zM153.4 259.7h1.0v14.9h-1.0zM154.4 260.4h1.0v14.1h-1.0zM155.4 258.7h1.0v15.8h-1.0zM156.4 260.4h1.0v14.1h-1.0zM157.4 260.4h1.0v14.1h-1.0zM158.4 257.9h1.0v16.6h-1.0zM159.4 260.4h1.0v14.1h-1.0zM160.4 258.6h1.0v19.4h-1.0zM161.4 258.5h1.0v16.0h-1.0zM162.4 258.7h1.0v16.7h-1.0zM163.4 259.6h1.0v16.8h-1.0zM164.4 260.4h1.0v14.1h-1.0zM165.4 258.8h1.0v15.7h-1.0zM166.4 260.4h1.0v14.1h-1.0zM167.4 260.4h1.0v14.8h-1.0zM168.4 260.4h1.0v14.1h-1.0zM169.4 259.1h1.0v15.5h-1.0zM170.4 260.4h1.0v15.3h-1.0zM171.4 259.7h1.0v14.8h-1.0zM172.4 259.1h1.0v16.5h-1.0zM173.4 259.4h1.0v15.1h-1.0zM174.4 260.4h1.0v14.8h-1.0zM175.4 258.9h1.0v17.1h-1.0zM176.4 260.4h1.0v15.6h-1.0zM177.4 258.7h1.0v16.7h-1.0zM178.4 260.4h1.0v15.0h-1.0zM179.4 260.4h1.0v14.1h-1.0zM180.4 260.4h1.0v15.3h-1.0zM181.4 260.4h1.0v17.5h-1.0zM182.4 258.7h1.0v17.1h-1.0zM183.4 259.7h1.0v14.9h-1.0zM184.4 258.8h1.0v16.8h-1.0zM185.4 259.1h1.0v15.4h-1.0zM186.4 258.0h1.0v16.5h-1.0zM187.4 260.4h1.0v14.1h-1.0zM188.4 259.0h1.0v17.4h-1.0zM189.4 259.0h1.0v15.6h-1.0zM190.4 259.2h1.0v15.4h-1.0zM191.4 260.4h1.0v15.2h-1.0zM192.4 260.4h1.0v15.8h-1.0zM193.4 260.4h1.0v16.7h-1.0zM194.4 260.4h1.0v14.1h-1.0zM195.4 260.4h1.0v14.1h-1.0zM196.4 259.4h1.0v17.0h-1.0zM197.4 260.4h1.0v15.5h-1.0zM198.4 258.4h1.0v17.7h-1.0zM199.4 260.4h1.0v15.7h-1.0zM200.4 259.1h1.0v17.3h-1.0zM201.4 260.4h1.0v14.1h-1.0zM202.4 260.4h1.0v16.0h-1.0zM203.4 260.4h1.0v14.1h-1.0zM204.4 259.7h1.0v18.1h-1.0zM205.4 260.4h1.0v14.8h-1.0zM206.4 257.4h1.0v18.8h-1.0zM207.4 259.5h1.0v16.1h-1.0zM208.4 258.5h1.0v16.0h-1.0zM209.4 259.5h1.0v15.1h-1.0zM210.4 259.5h1.0v15.8h-1.0zM211.4 259.3h1.0v17.1h-1.0zM212.4 259.6h1.0v14.9h-1.0zM213.4 258.7h1.0v15.8h-1.0zM214.4 260.4h1.0v14.9h-1.0zM215.4 260.4h1.0v15.4h-1.0zM216.4 260.4h1.0v14.1h-1.0zM217.4 259.4h1.0v15.2h-1.0zM218.4 258.1h1.0v16.4h-1.0zM219.4 258.8h1.0v17.4h-1.0zM220.4 258.0h1.0v16.5h-1.0zM221.4 259.6h1.0v16.3h-1.0zM222.4 260.4h1.0v14.1h-1.0zM223.4 258.8h1.0v16.8h-1.0zM224.4 260.4h1.0v14.1h-1.0zM225.4 260.4h1.0v14.1h-1.0zM226.4 260.4h1.0v16.0h-1.0zM227.4 260.4h1.0v15.2h-1.0zM228.4 260.4h1.0v14.9h-1.0zM229.4 260.4h1.0v16.8h-1.0zM230.4 260.4h1.0v14.1h-1.0zM231.4 259.4h1.0v16.3h-1.0zM232.4 257.4h1.0v17.2h-1.0zM233.4 258.0h1.0v18.9h-1.0zM234.4 260.4h1.0v14.1h-1.0zM235.4 260.4h1.0v15.6h-1.0zM236.4 260.4h1.0v17.4h-1.0zM237.4 260.4h1.0v14.1h-1.0zM238.4 260.4h1.0v14.1h-1.0zM239.4 260.4h1.0v15.6h-1.0zM240.4 260.4h1.0v14.1h-1.0zM241.4 259.8h1.0v14.7h-1.0zM242.4 260.4h1.0v14.9h-1.0zM243.4 259.8h1.0v14.8h-1.0zM244.4 260.4h1.0v14.1h-1.0zM245.4 258.9h1.0v17.4h-1.0zM246.4 259.9h1.0v14.7h-1.0zM247.4 259.5h1.0v16.2h-1.0zM248.4 257.5h1.0v18.8h-1.0zM249.4 259.6h1.0v15.0h-1.0zM250.4 259.4h1.0v17.4h-1.0zM251.4 260.4h1.0v15.8h-1.0zM252.4 260.4h1.0v16.1h-1.0zM253.4 260.4h1.0v15.4h-1.0zM254.4 259.8h1.0v14.7h-1.0zM255.4 260.4h1.0v16.7h-1.0zM256.4 257.7h1.0v18.6h-1.0zM257.4 260.4h1.0v14.1h-1.0zM258.4 260.4h1.0v16.0h-1.0zM259.4 259.2h1.0v16.5h-1.0zM260.4 260.4h1.0v14.1h-1.0zM261.4 259.4h1.0v16.2h-1.0zM262.4 259.6h1.0v14.9h-1.0zM263.4 257.9h1.0v18.2h-1.0zM264.4 259.5h1.0v18.0h-1.0zM265.4 260.4h1.0v14.1h-1.0zM266.4 260.4h1.0v14.1h-1.0zM267.4 260.4h1.0v14.1h-1.0zM268.4 259.6h1.0v16.7h-1.0zM269.4 260.4h1.0v14.1h-1.0zM270.4 259.4h1.0v16.6h-1.0zM271.4 260.4h1.0v14.7h-1.0zM272.4 259.4h1.0v15.1h-1.0zM273.4 260.4h1.0v14.8h-1.0zM274.4 259.7h1.0v14.9h-1.0zM275.4 258.5h1.0v16.0h-1.0zM276.4 260.4h1.0v15.8h-1.0zM277.4 259.7h1.0v17.5h-1.0zM278.4 259.5h1.0v16.8h-1.0zM279.4 260.4h1.0v14.1h-1.0zM280.4 260.4h1.0v15.7h-1.0zM281.4 258.8h1.0v15.8h-1.0zM282.4 259.9h1.0v16.0h-1.0zM283.4 259.9h1.0v14.7h-1.0zM284.4 260.4h1.0v14.7h-1.0zM285.4 260.4h1.0v16.2h-1.0zM286.4 259.0h1.0v15.5h-1.0zM287.4 259.0h1.0v16.4h-1.0zM288.4 260.4h1.0v14.8h-1.0zM289.4 258.3h1.0v17.4h-1.0zM290.4 257.7h1.0v16.9h-1.0zM291.4 259.8h1.0v14.7h-1.0zM292.4 259.2h1.0v16.8h-1.0zM293.4 260.4h1.0v15.6h-1.0zM294.4 260.4h1.0v14.8h-1.0zM295.4 260.4h1.0v16.1h-1.0zM296.4 258.5h1.0v17.1h-1.0zM297.4 260.4h1.0v14.1h-1.0zM298.4 260.4h1.0v14.1h-1.0zM299.4 259.8h1.0v14.8h-1.0zM300.4 260.4h1.0v14.7h-1.0zM301.4 258.6h1.0v17.4h-1.0zM302.4 260.4h1.0v14.1h-1.0zM303.4 260.4h1.0v14.9h-1.0zM304.4 258.8h1.0v17.6h-1.0zM305.4 260.4h1.0v15.8h-1.0zM306.4 259.2h1.0v17.0h-1.0zM307.4 260.4h1.0v14.1h-1.0zM308.4 258.7h1.0v19.0h-1.0zM309.4 257.7h1.0v20.0h-1.0zM310.4 259.8h1.0v17.1h-1.0zM311.4 259.9h1.0v14.7h-1.0zM312.4 258.7h1.0v15.8h-1.0zM313.4 259.7h1.0v14.8h-1.0zM314.4 259.3h1.0v17.2h-1.0zM315.4 258.0h1.0v18.1h-1.0zM316.4 260.4h1.0v14.1h-1.0zM317.4 259.4h1.0v16.8h-1.0zM318.4 259.1h1.0v15.5h-1.0zM319.4 260.4h1.0v14.8h-1.0zM320.4 258.9h1.0v18.3h-1.0zM321.4 259.3h1.0v15.2h-1.0zM322.4 260.4h1.0v14.1h-1.0zM323.4 260.4h1.0v14.1h-1.0zM324.4 260.4h1.0v14.1h-1.0zM325.4 260.4h1.0v15.6h-1.0zM326.4 260.4h1.0v15.9h-1.0zM327.4 258.6h1.0v17.5h-1.0zM328.4 259.5h1.0v16.1h-1.0zM329.4 259.3h1.0v15.3h-1.0zM330.4 260.4h1.0v14.1h-1.0zM331.4 260.4h1.0v14.1h-1.0zM332.4 260.4h1.0v14.1h-1.0zM333.4 259.6h1.0v15.6h-1.0zM334.4 258.7h1.0v15.9h-1.0zM335.4 258.8h1.0v15.7h-1.0zM336.4 260.4h1.0v14.1h-1.0zM337.4 258.4h1.0v16.2h-1.0zM338.4 259.0h1.0v16.8h-1.0zM339.4 260.4h1.0v15.4h-1.0zM340.4 260.4h1.0v17.5h-1.0zM341.4 258.6h1.0v15.9h-1.0zM342.4 260.4h1.0v14.9h-1.0zM343.4 258.6h1.0v16.8h-1.0zM344.4 260.4h1.0v14.1h-1.0zM345.4 259.3h1.0v15.3h-1.0zM346.4 260.4h1.0v14.1h-1.0zM347.4 260.4h1.0v15.0h-1.0zM348.4 258.9h1.0v16.5h-1.0zM349.4 260.4h1.0v14.1h-1.0zM350.4 257.6h1.0v19.9h-1.0zM351.4 259.8h1.0v15.3h-1.0zM352.4 259.7h1.0v16.1h-1.0zM353.4 260.4h1.0v14.1h-1.0zM354.4 258.8h1.0v16.4h-1.0zM355.4 259.3h1.0v15.2h-1.0zM356.4 258.9h1.0v17.5h-1.0zM357.4 258.7h1.0v17.5h-1.0zM358.4 258.7h1.0v15.8h-1.0zM359.4 260.4h1.0v14.7h-1.0zM360.4 258.6h1.0v17.4h-1.0zM361.4 257.6h1.0v17.7h-1.0zM362.4 258.5h1.0v17.5h-1.0zM363.4 258.2h1.0v16.9h-1.0zM364.4 260.4h1.0v16.0h-1.0zM365.4 258.9h1.0v17.3h-1.0zM366.4 259.4h1.0v17.3h-1.0zM367.4 258.8h1.0v16.8h-1.0zM368.4 260.4h1.0v14.9h-1.0zM369.4 259.4h1.0v16.6h-1.0zM370.4 258.7h1.0v17.3h-1.0zM371.4 260.4h1.0v14.7h-1.0zM372.4 259.7h1.0v16.4h-1.0zM373.4 259.7h1.0v15.6h-1.0zM374.4 259.3h1.0v15.9h-1.0zM375.4 259.2h1.0v15.3h-1.0zM376.4 258.4h1.0v17.7h-1.0zM377.4 257.4h1.0v17.2h-1.0zM378.4 260.4h1.0v16.0h-1.0zM379.4 258.2h1.0v18.1h-1.0zM380.4 259.8h1.0v16.6h-1.0zM381.4 258.9h1.0v16.9h-1.0zM382.4 259.6h1.0v14.9h-1.0zM383.4 259.7h1.0v14.8h-1.0zM384.4 259.6h1.0v16.4h-1.0zM385.4 258.5h1.0v17.7h-1.0zM386.4 258.2h1.0v17.8h-1.0zM387.4 260.4h1.0v15.8h-1.0zM388.4 260.4h1.0v14.1h-1.0zM389.4 260.4h1.0v15.9h-1.0zM390.4 259.6h1.0v18.3h-1.0zM391.4 259.6h1.0v16.1h-1.0zM392.4 259.6h1.0v14.9h-1.0zM393.4 257.3h1.0v18.8h-1.0zM394.4 258.6h1.0v17.2h-1.0zM395.4 257.3h1.0v19.2h-1.0zM396.4 260.4h1.0v15.8h-1.0zM397.4 258.5h1.0v16.9h-1.0zM398.4 260.4h1.0v15.2h-1.0zM399.4 259.0h1.0v16.7h-1.0zM400.4 258.7h1.0v17.2h-1.0zM401.4 259.3h1.0v18.3h-1.0zM402.4 259.6h1.0v16.9h-1.0zM403.4 259.7h1.0v17.7h-1.0zM404.4 260.4h1.0v15.0h-1.0zM405.4 259.1h1.0v16.6h-1.0zM406.4 260.4h1.0v14.1h-1.0zM407.4 260.4h1.0v14.1h-1.0zM408.4 258.6h1.0v16.6h-1.0zM409.4 260.4h1.0v14.7h-1.0zM410.4 259.5h1.0v15.1h-1.0zM411.4 260.4h1.0v15.4h-1.0zM412.4 260.4h1.0v14.1h-1.0zM413.4 260.4h1.0v16.2h-1.0zM414.4 259.0h1.0v18.7h-1.0zM415.4 260.4h1.0v14.1h-1.0zM416.4 259.8h1.0v14.8h-1.0zM417.4 258.3h1.0v16.3h-1.0zM418.4 259.6h1.0v16.3h-1.0zM419.4 260.4h1.0v15.7h-1.0zM420.4 260.4h1.0v15.6h-1.0zM421.4 260.4h1.0v15.3h-1.0zM422.4 260.4h1.0v14.1h-1.0zM423.4 260.4h1.0v16.0h-1.0zM424.4 260.4h1.0v15.3h-1.0zM425.4 260.4h1.0v15.2h-1.0zM426.4 260.4h1.0v14.1h-1.0zM427.4 258.9h1.0v17.2h-1.0zM428.4 260.4h1.0v15.0h-1.0zM429.4 259.5h1.0v15.8h-1.0zM430.4 259.3h1.0v16.6h-1.0zM431.4 260.4h1.0v16.6h-1.0zM432.4 260.4h1.0v14.9h-1.0zM433.4 259.9h1.0v14.7h-1.0zM434.4 259.4h1.0v15.2h-1.0zM435.4 260.4h1.0v14.1h-1.0zM436.4 260.4h1.0v14.1h-1.0zM437.4 260.4h1.0v14.1h-1.0zM438.4 258.8h1.0v16.6h-1.0zM439.4 260.4h1.0v14.1h-1.0zM440.4 260.4h1.0v14.1h-1.0zM441.4 258.2h1.0v17.6h-1.0zM442.4 260.4h1.0v14.7h-1.0zM443.4 259.7h1.0v14.9h-1.0zM444.4 259.6h1.0v16.5h-1.0zM445.4 260.4h1.0v14.8h-1.0zM446.4 260.4h1.0v14.1h-1.0zM447.4 259.4h1.0v17.5h-1.0zM448.4 259.2h1.0v15.9h-1.0zM449.4 259.7h1.0v16.3h-1.0zM450.4 260.4h1.0v15.8h-1.0zM451.4 260.4h1.0v15.3h-1.0zM452.4 258.6h1.0v18.0h-1.0zM453.4 258.9h1.0v17.2h-1.0zM454.4 258.8h1.0v15.8h-1.0zM455.4 259.1h1.0v17.0h-1.0zM456.4 260.4h1.0v14.1h-1.0zM457.4 259.8h1.0v14.8h-1.0zM458.4 258.3h1.0v17.6h-1.0zM459.4 259.0h1.0v16.4h-1.0zM460.4 259.2h1.0v15.4h-1.0zM461.4 258.9h1.0v16.6h-1.0zM462.4 260.4h1.0v14.1h-1.0zM463.4 260.4h1.0v14.1h-1.0zM464.4 259.5h1.0v15.1h-1.0zM465.4 259.7h1.0v16.5h-1.0zM466.4 260.4h1.0v14.1h-1.0zM467.4 260.4h1.0v14.1h-1.0zM468.4 259.5h1.0v15.1h-1.0zM469.4 259.0h1.0v16.1h-1.0zM470.4 258.3h1.0v16.2h-1.0zM471.4 260.4h1.0v14.9h-1.0zM472.4 259.2h1.0v17.9h-1.0zM473.4 260.4h1.0v17.2h-1.0zM474.4 259.8h1.0v16.0h-1.0zM475.4 259.0h1.0v16.6h-1.0zM476.4 258.9h1.0v15.6h-1.0zM477.4 259.3h1.0v15.3h-1.0zM478.4 260.4h1.0v14.1h-1.0zM479.4 259.3h1.0v15.3h-1.0zM480.4 259.8h1.0v14.7h-1.0zM481.4 260.4h1.0v15.3h-1.0zM482.4 260.4h1.0v14.7h-1.0zM483.4 260.4h1.0v14.1h-1.0zM484.4 259.8h1.0v15.5h-1.0zM485.4 260.4h1.0v15.1h-1.0zM486.4 260.4h1.0v14.8h-1.0zM487.4 259.7h1.0v18.1h-1.0zM488.4 259.7h1.0v14.9h-1.0zM489.4 259.4h1.0v16.0h-1.0zM490.4 260.4h1.0v15.0h-1.0zM491.4 260.4h1.0v14.1h-1.0zM492.4 260.4h1.0v16.0h-1.0zM493.4 260.4h1.0v15.3h-1.0zM494.4 260.4h1.0v14.1h-1.0zM495.4 259.6h1.0v14.9h-1.0zM496.4 258.8h1.0v16.7h-1.0zM497.4 259.2h1.0v15.3h-1.0zM498.4 258.7h1.0v16.6h-1.0zM499.4 260.4h1.0v14.9h-1.0zM500.4 258.7h1.0v15.8h-1.0zM501.4 258.5h1.0v16.1h-1.0zM502.4 260.4h1.0v14.1h-1.0zM503.4 260.4h1.0v15.8h-1.0zM504.4 260.4h1.0v15.2h-1.0zM505.4 259.4h1.0v15.8h-1.0zM506.4 258.6h1.0v17.4h-1.0zM507.4 260.4h1.0v14.1h-1.0zM508.4 258.6h1.0v15.9h-1.0zM509.4 260.4h1.0v14.1h-1.0zM510.4 260.4h1.0v14.1h-1.0zM511.4 259.0h1.0v17.3h-1.0zM512.4 259.1h1.0v17.1h-1.0zM513.4 258.7h1.0v15.8h-1.0zM514.4 260.4h1.0v16.0h-1.0zM515.4 260.4h1.0v14.1h-1.0zM516.4 260.4h1.0v15.9h-1.0zM517.4 257.9h1.0v18.3h-1.0zM518.4 260.4h1.0v14.1h-1.0zM519.4 259.4h1.0v15.8h-1.0zM520.4 259.9h1.0v14.7h-1.0zM521.4 259.8h1.0v16.3h-1.0zM522.4 259.3h1.0v17.0h-1.0zM523.4 260.4h1.0v15.5h-1.0zM524.4 260.4h1.0v15.9h-1.0zM525.4 260.4h1.0v15.9h-1.0zM526.4 258.4h1.0v19.4h-1.0zM527.4 257.9h1.0v18.5h-1.0zM528.4 260.4h1.0v15.2h-1.0zM529.4 258.6h1.0v16.0h-1.0zM530.4 258.6h1.0v17.3h-1.0zM531.4 258.9h1.0v16.3h-1.0zM532.4 257.4h1.0v17.1h-1.0zM533.4 259.6h1.0v15.0h-1.0zM534.4 260.4h1.0v15.9h-1.0zM535.4 260.4h1.0v15.2h-1.0zM536.4 260.4h1.0v14.1h-1.0zM537.4 259.5h1.0v16.6h-1.0zM538.4 259.1h1.0v18.4h-1.0zM539.4 258.6h1.0v16.0h-1.0zM540.4 257.5h1.0v18.9h-1.0zM541.4 257.5h1.0v17.0h-1.0zM542.4 258.6h1.0v16.5h-1.0zM543.4 257.3h1.0v17.2h-1.0zM544.4 260.4h1.0v17.4h-1.0zM545.4 258.3h1.0v16.2h-1.0zM546.4 260.4h1.0v15.5h-1.0zM547.4 259.5h1.0v16.3h-1.0zM548.4 259.8h1.0v15.8h-1.0zM549.4 260.4h1.0v14.1h-1.0zM550.4 259.5h1.0v17.2h-1.0zM551.4 260.4h1.0v14.1h-1.0zM552.4 259.1h1.0v15.5h-1.0zM553.4 260.4h1.0v14.1h-1.0zM554.4 260.4h1.0v15.8h-1.0zM555.4 260.4h1.0v16.0h-1.0zM556.4 259.8h1.0v16.4h-1.0zM557.4 260.4h1.0v15.3h-1.0zM558.4 260.4h1.0v14.1h-1.0zM559.4 258.8h1.0v16.6h-1.0zM560.4 259.3h1.0v15.2h-1.0zM561.4 259.7h1.0v15.5h-1.0zM562.4 259.5h1.0v17.3h-1.0zM563.4 259.3h1.0v15.3h-1.0zM564.4 258.6h1.0v16.8h-1.0zM565.4 258.3h1.0v16.9h-1.0zM566.4 260.4h1.0v14.1h-1.0zM567.4 259.4h1.0v16.2h-1.0zM568.4 260.4h1.0v14.9h-1.0zM569.4 260.4h1.0v16.1h-1.0zM570.4 260.4h1.0v14.1h-1.0zM571.4 259.0h1.0v15.5h-1.0zM572.4 259.3h1.0v16.6h-1.0zM573.4 260.4h1.0v14.1h-1.0zM574.4 260.4h1.0v15.2h-1.0zM575.4 260.4h1.0v14.1h-1.0zM576.4 257.6h0.4v18.8h-0.4z" fill="#009ca0"/>
<rect x="144.4" y="260.8" width="432.4" height="13.4" fill="url(#gc)"/>
<path d="M576.3 158.7h1.0v18.1h-1.0zM577.3 158.0h1.0v18.7h-1.0zM578.3 158.7h1.0v18.9h-1.0zM579.3 158.7h1.0v18.1h-1.0zM580.3 156.2h1.0v22.6h-1.0zM581.3 158.7h1.0v18.1h-1.0zM582.3 158.7h1.0v19.9h-1.0zM583.3 158.7h1.0v18.1h-1.0zM584.3 157.8h1.0v20.7h-1.0zM585.3 158.7h1.0v18.1h-1.0zM586.3 157.9h1.0v18.9h-1.0zM587.3 157.6h1.0v19.8h-1.0zM588.3 157.5h1.0v19.9h-1.0zM589.3 157.9h1.0v18.8h-1.0zM590.3 158.7h1.0v18.1h-1.0zM591.3 158.7h1.0v18.1h-1.0zM592.3 158.7h1.0v19.3h-1.0zM593.3 158.7h1.0v19.2h-1.0zM594.3 158.7h1.0v19.5h-1.0zM595.3 158.7h1.0v18.1h-1.0zM596.3 158.7h1.0v18.1h-1.0zM597.3 158.1h1.0v19.3h-1.0zM598.3 158.7h1.0v18.1h-1.0zM599.3 158.0h0.9v19.7h-0.9z" fill="#009ca0"/>
<rect x="576.3" y="159.0" width="23.9" height="17.4" fill="url(#gc)"/>
<path d="M599.6 260.4h1.0v14.1h-1.0zM600.6 258.5h1.0v17.1h-1.0zM601.6 259.6h1.0v15.0h-1.0zM602.6 260.4h1.0v14.1h-1.0zM603.6 259.6h1.0v15.9h-1.0zM604.6 260.4h1.0v15.4h-1.0zM605.6 260.4h1.0v15.3h-1.0zM606.6 260.4h1.0v16.7h-1.0zM607.6 260.4h1.0v14.1h-1.0zM608.6 259.3h1.0v15.2h-1.0zM609.6 260.4h1.0v14.1h-1.0zM610.6 258.3h1.0v17.3h-1.0zM611.6 260.4h1.0v15.8h-1.0zM612.6 260.4h1.0v16.1h-1.0zM613.6 260.4h1.0v15.6h-1.0zM614.6 257.6h1.0v18.9h-1.0zM615.6 260.4h1.0v14.1h-1.0zM616.6 260.4h1.0v15.2h-1.0zM617.6 258.6h1.0v15.9h-1.0zM618.6 260.4h1.0v14.1h-1.0zM619.6 260.4h1.0v14.1h-1.0zM620.6 258.8h1.0v17.1h-1.0zM621.6 258.7h1.0v16.8h-1.0zM622.6 260.4h1.0v16.0h-1.0zM623.6 260.4h1.0v15.7h-1.0zM624.6 257.3h1.0v19.8h-1.0zM625.6 260.4h1.0v15.7h-1.0zM626.6 259.5h1.0v16.8h-1.0zM627.6 258.9h1.0v17.2h-1.0zM628.6 260.4h1.0v15.3h-1.0zM629.6 260.4h1.0v15.6h-1.0zM630.6 259.4h1.0v15.2h-1.0zM631.6 260.4h1.0v14.1h-1.0zM632.6 259.1h1.0v15.5h-1.0zM633.6 260.4h1.0v15.9h-1.0zM634.6 258.6h1.0v16.7h-1.0zM635.6 260.4h1.0v15.6h-1.0zM636.6 258.5h1.0v19.1h-1.0zM637.6 259.0h1.0v16.4h-1.0zM638.6 260.4h1.0v15.3h-1.0zM639.6 258.7h1.0v15.8h-1.0zM640.6 259.2h1.0v16.9h-1.0zM641.6 260.4h1.0v16.0h-1.0zM642.6 259.7h1.0v14.8h-1.0zM643.6 259.6h1.0v17.4h-1.0zM644.6 258.6h1.0v17.6h-1.0zM645.6 258.6h1.0v17.7h-1.0zM646.6 260.4h1.0v14.1h-1.0zM647.6 260.4h1.0v14.1h-1.0zM648.6 257.4h1.0v17.8h-1.0zM649.6 260.4h1.0v14.1h-1.0zM650.6 260.4h1.0v14.1h-1.0zM651.6 259.3h1.0v15.3h-1.0zM652.6 260.4h1.0v14.1h-1.0zM653.6 258.9h1.0v18.2h-1.0zM654.6 259.7h1.0v16.1h-1.0zM655.6 259.4h1.0v18.3h-1.0zM656.6 258.3h1.0v16.3h-1.0zM657.6 258.6h1.0v16.0h-1.0zM658.6 259.1h1.0v15.5h-1.0zM659.6 259.1h1.0v16.0h-1.0zM660.6 259.7h1.0v16.3h-1.0zM661.6 257.3h1.0v17.3h-1.0zM662.6 258.6h1.0v16.0h-1.0zM663.6 257.4h1.0v17.2h-1.0zM664.6 259.1h1.0v17.4h-1.0zM665.6 258.5h1.0v16.6h-1.0zM666.6 258.2h1.0v18.4h-1.0zM667.6 260.4h1.0v14.1h-1.0zM668.6 260.4h1.0v14.1h-1.0zM669.6 260.4h1.0v14.1h-1.0zM670.6 260.4h1.0v14.7h-1.0zM671.6 258.5h1.0v17.4h-1.0zM672.6 259.3h1.0v15.2h-1.0zM673.6 257.4h1.0v18.0h-1.0zM674.6 258.7h1.0v17.7h-1.0zM675.6 258.7h1.0v18.3h-1.0zM676.6 260.4h1.0v15.6h-1.0zM677.6 258.7h1.0v15.8h-1.0zM678.6 258.9h1.0v16.5h-1.0zM679.6 259.0h1.0v15.6h-1.0zM680.6 260.4h1.0v14.1h-1.0zM681.6 260.4h1.0v14.1h-1.0zM682.6 258.9h1.0v18.2h-1.0zM683.6 260.4h1.0v14.8h-1.0zM684.6 259.7h1.0v18.0h-1.0zM685.6 259.2h1.0v18.1h-1.0zM686.6 259.1h1.0v16.0h-1.0zM687.6 259.6h1.0v15.0h-1.0zM688.6 258.7h1.0v16.5h-1.0zM689.6 259.4h1.0v16.8h-1.0zM690.6 259.0h1.0v15.6h-1.0zM691.6 259.2h1.0v15.4h-1.0zM692.6 260.4h1.0v14.7h-1.0zM693.6 259.4h1.0v16.6h-1.0zM694.6 259.5h1.0v18.4h-1.0zM695.6 259.7h1.0v15.9h-1.0zM696.6 260.4h1.0v14.1h-1.0zM697.6 259.7h1.0v15.6h-1.0zM698.6 260.4h1.0v14.1h-1.0zM699.6 259.0h1.0v16.8h-1.0zM700.6 259.8h1.0v14.8h-1.0zM701.6 260.4h1.0v16.3h-1.0zM702.6 260.4h1.0v15.6h-1.0zM703.6 258.6h1.0v16.8h-1.0zM704.6 259.6h1.0v16.4h-1.0zM705.6 260.4h1.0v15.0h-1.0zM706.6 260.4h1.0v15.2h-1.0zM707.6 260.4h1.0v14.9h-1.0zM708.6 259.1h1.0v15.4h-1.0zM709.6 260.4h1.0v15.4h-1.0zM710.6 259.6h1.0v14.9h-1.0zM711.6 258.8h1.0v17.6h-1.0zM712.6 260.4h1.0v14.8h-1.0zM713.6 259.7h1.0v14.8h-1.0zM714.6 260.4h1.0v17.5h-1.0zM715.6 258.9h1.0v15.7h-1.0zM716.6 259.4h1.0v16.5h-1.0zM717.6 260.4h1.0v15.6h-1.0zM718.6 258.9h1.0v17.6h-1.0zM719.6 259.9h1.0v16.2h-1.0zM720.6 260.4h1.0v14.1h-1.0zM721.6 258.7h1.0v15.9h-1.0zM722.6 259.4h1.0v15.2h-1.0zM723.6 259.8h1.0v16.5h-1.0zM724.6 260.4h1.0v15.9h-1.0zM725.6 260.4h1.0v14.1h-1.0zM726.6 257.2h1.0v17.3h-1.0zM727.6 260.4h1.0v16.3h-1.0zM728.6 257.9h1.0v17.8h-1.0zM729.6 257.7h1.0v17.8h-1.0zM730.6 257.8h1.0v18.2h-1.0zM731.6 259.2h1.0v17.0h-1.0zM732.6 260.4h1.0v14.1h-1.0zM733.6 258.2h1.0v16.4h-1.0zM734.6 258.0h1.0v17.7h-1.0zM735.6 260.4h1.0v14.1h-1.0zM736.6 258.9h1.0v16.9h-1.0zM737.6 259.5h1.0v16.7h-1.0zM738.6 260.4h1.0v15.0h-1.0zM739.6 260.4h1.0v14.1h-1.0zM740.6 260.4h1.0v14.1h-1.0zM741.6 260.4h1.0v14.7h-1.0zM742.6 259.9h1.0v14.7h-1.0zM743.6 257.6h1.0v16.9h-1.0zM744.6 260.4h1.0v15.1h-1.0zM745.6 258.8h1.0v15.8h-1.0zM746.6 259.4h1.0v16.4h-1.0zM747.6 260.4h1.0v14.1h-1.0zM748.6 260.4h1.0v14.1h-1.0zM749.6 259.3h1.0v17.2h-1.0zM750.6 259.7h1.0v16.7h-1.0zM751.6 260.4h1.0v15.8h-1.0zM752.6 260.4h1.0v14.9h-1.0zM753.6 260.4h1.0v14.8h-1.0zM754.6 260.4h1.0v15.2h-1.0zM755.6 258.2h1.0v17.5h-1.0zM756.6 259.9h1.0v16.3h-1.0zM757.6 258.9h1.0v15.6h-1.0zM758.6 259.9h1.0v14.7h-1.0zM759.6 260.4h1.0v14.9h-1.0zM760.6 260.4h1.0v14.1h-1.0zM761.6 259.1h1.0v17.9h-1.0zM762.6 259.4h1.0v15.1h-1.0zM763.6 260.4h1.0v16.2h-1.0zM764.6 259.5h1.0v16.1h-1.0zM765.6 260.4h1.0v16.0h-1.0zM766.6 258.7h1.0v17.2h-1.0zM767.6 259.8h1.0v14.7h-1.0zM768.6 260.4h1.0v15.7h-1.0zM769.6 258.5h1.0v17.1h-1.0zM770.6 259.0h1.0v15.5h-1.0zM771.6 260.4h1.0v16.6h-1.0zM772.6 260.4h1.0v15.0h-1.0zM773.6 260.4h1.0v16.0h-1.0zM774.6 259.3h1.0v15.8h-1.0zM775.6 259.8h1.0v15.9h-1.0zM776.6 258.1h1.0v16.4h-1.0zM777.6 257.2h1.0v18.6h-1.0zM778.6 259.4h1.0v15.2h-1.0zM779.6 258.7h1.0v16.9h-1.0zM780.6 260.4h1.0v16.5h-1.0zM781.6 258.6h1.0v16.7h-1.0zM782.6 260.4h1.0v16.5h-1.0zM783.6 258.7h1.0v17.0h-1.0zM784.6 260.4h1.0v15.2h-1.0zM785.6 259.0h1.0v15.6h-1.0zM786.6 259.3h1.0v16.9h-1.0zM787.6 258.7h1.0v17.4h-1.0zM788.6 259.6h1.0v15.0h-1.0zM789.6 260.4h1.0v14.1h-1.0zM790.6 259.2h1.0v16.1h-1.0zM791.6 260.4h1.0v14.1h-1.0zM792.6 259.0h1.0v17.0h-1.0zM793.6 259.2h1.0v16.7h-1.0zM794.6 259.2h1.0v15.3h-1.0zM795.6 259.5h1.0v15.1h-1.0zM796.6 257.7h1.0v16.9h-1.0zM797.6 258.2h1.0v18.1h-1.0zM798.6 257.5h1.0v18.2h-1.0zM799.6 260.4h1.0v14.1h-1.0zM800.6 260.4h1.0v15.5h-1.0zM801.6 258.6h1.0v16.0h-1.0zM802.6 260.4h1.0v15.8h-1.0zM803.6 258.7h1.0v17.8h-1.0zM804.6 260.4h1.0v15.8h-1.0zM805.6 260.4h1.0v17.3h-1.0zM806.6 258.6h1.0v16.5h-1.0zM807.6 259.8h1.0v16.2h-1.0zM808.6 259.7h1.0v15.8h-1.0zM809.6 260.4h1.0v14.1h-1.0zM810.6 260.4h1.0v14.1h-1.0zM811.6 258.8h1.0v17.6h-1.0zM812.6 260.4h1.0v14.1h-1.0zM813.6 259.8h1.0v14.8h-1.0zM814.6 257.7h1.0v16.8h-1.0zM815.6 258.9h1.0v17.3h-1.0zM816.6 259.6h1.0v14.9h-1.0zM817.6 258.9h1.0v15.7h-1.0zM818.6 258.9h1.0v16.5h-1.0zM819.6 258.6h1.0v17.2h-1.0zM820.6 258.5h1.0v16.1h-1.0zM821.6 260.4h1.0v14.1h-1.0zM822.6 259.6h1.0v16.5h-1.0zM823.6 260.4h1.0v15.4h-1.0zM824.6 258.6h1.0v17.2h-1.0zM825.6 260.4h1.0v15.7h-1.0zM826.6 258.8h1.0v16.7h-1.0zM827.6 260.4h1.0v15.2h-1.0zM828.6 258.2h1.0v16.9h-1.0zM829.6 260.4h1.0v15.8h-1.0zM830.6 257.7h1.0v16.8h-1.0zM831.6 258.8h1.0v17.5h-1.0zM832.6 260.4h1.0v14.1h-1.0zM833.6 260.4h1.0v15.6h-1.0zM834.6 260.4h1.0v14.8h-1.0zM835.6 259.2h1.0v16.2h-1.0zM836.6 260.4h1.0v14.9h-1.0zM837.6 259.1h1.0v16.7h-1.0zM838.6 257.9h1.0v19.8h-1.0zM839.6 258.6h1.0v16.6h-1.0zM840.6 260.4h1.0v16.9h-1.0zM841.6 258.8h1.0v17.3h-1.0zM842.6 259.1h1.0v15.5h-1.0zM843.6 259.2h1.0v16.8h-1.0zM844.6 260.4h1.0v15.4h-1.0zM845.6 260.4h1.0v15.8h-1.0zM846.6 260.4h1.0v15.0h-1.0zM847.6 259.5h1.0v16.2h-1.0zM848.6 259.5h1.0v16.1h-1.0zM849.6 260.4h1.0v14.1h-1.0zM850.6 259.6h1.0v16.0h-1.0zM851.6 258.9h1.0v15.6h-1.0zM852.6 260.4h1.0v14.7h-1.0zM853.6 260.4h1.0v16.0h-1.0zM854.6 259.5h1.0v17.0h-1.0zM855.6 257.9h1.0v18.2h-1.0zM856.6 260.4h1.0v14.9h-1.0zM857.6 258.7h1.0v17.4h-1.0zM858.6 257.9h1.0v19.0h-1.0zM859.6 257.4h1.0v18.2h-1.0zM860.6 260.4h1.0v14.1h-1.0zM861.6 259.0h1.0v15.5h-1.0zM862.6 260.4h1.0v14.8h-1.0zM863.6 258.9h1.0v15.6h-1.0zM864.6 259.0h1.0v15.5h-1.0zM865.6 260.4h1.0v15.3h-1.0zM866.6 259.1h1.0v16.2h-1.0zM867.6 260.4h1.0v15.8h-1.0zM868.6 259.1h1.0v15.4h-1.0zM869.6 258.9h1.0v17.5h-1.0zM870.6 258.9h1.0v16.5h-1.0zM871.6 259.2h1.0v16.1h-1.0zM872.6 258.1h1.0v16.4h-1.0zM873.6 259.3h1.0v17.2h-1.0zM874.6 259.0h1.0v15.6h-1.0zM875.6 258.8h1.0v16.4h-1.0zM876.6 259.3h1.0v15.3h-1.0zM877.6 259.3h1.0v15.3h-1.0zM878.6 259.7h1.0v17.5h-1.0zM879.6 260.4h1.0v14.1h-1.0zM880.6 259.1h1.0v16.0h-1.0zM881.6 258.6h1.0v17.3h-1.0zM882.6 260.4h1.0v15.9h-1.0zM883.6 259.5h1.0v15.1h-1.0zM884.6 259.4h1.0v16.4h-1.0zM885.6 259.7h1.0v15.5h-1.0zM886.6 259.6h1.0v17.1h-1.0zM887.6 260.4h1.0v15.0h-1.0zM888.6 258.7h1.0v17.4h-1.0zM889.6 258.6h1.0v17.4h-1.0zM890.6 260.4h1.0v14.7h-1.0zM891.6 260.4h1.0v17.1h-1.0zM892.6 259.2h1.0v16.5h-1.0zM893.6 259.1h1.0v16.4h-1.0zM894.6 260.4h1.0v15.8h-1.0zM895.6 259.6h1.0v16.2h-1.0zM896.6 257.6h1.0v18.1h-1.0zM897.6 260.4h1.0v16.0h-1.0zM898.6 260.4h1.0v14.1h-1.0zM899.6 260.4h1.0v15.8h-1.0zM900.6 260.4h1.0v16.0h-1.0zM901.6 260.4h1.0v14.1h-1.0zM902.6 258.4h1.0v16.2h-1.0zM903.6 259.5h1.0v15.0h-1.0zM904.6 259.3h1.0v15.3h-1.0zM905.6 259.0h1.0v16.8h-1.0zM906.6 260.4h1.0v14.1h-1.0zM907.6 259.6h1.0v14.9h-1.0zM908.6 259.3h1.0v16.8h-1.0zM909.6 260.4h1.0v14.1h-1.0zM910.6 259.1h1.0v17.7h-1.0zM911.6 260.4h1.0v14.1h-1.0zM912.6 260.4h1.0v14.1h-1.0zM913.6 258.7h1.0v17.4h-1.0zM914.6 260.4h1.0v14.1h-1.0zM915.6 260.4h1.0v14.1h-1.0zM916.6 258.8h1.0v16.7h-1.0zM917.6 258.8h1.0v15.8h-1.0zM918.6 260.4h1.0v14.1h-1.0zM919.6 259.7h1.0v17.1h-1.0zM920.6 259.8h1.0v16.3h-1.0zM921.6 258.7h1.0v17.6h-1.0zM922.6 259.5h1.0v15.6h-1.0zM923.6 259.4h1.0v16.9h-1.0zM924.6 259.9h1.0v14.7h-1.0zM925.6 259.5h1.0v15.7h-1.0zM926.6 260.4h1.0v16.8h-1.0zM927.6 259.5h1.0v15.1h-1.0zM928.6 258.5h1.0v16.0h-1.0zM929.6 258.7h1.0v17.4h-1.0zM930.6 260.4h1.0v14.1h-1.0zM931.6 257.4h1.0v18.4h-1.0zM932.6 259.3h1.0v16.8h-1.0zM933.6 257.5h1.0v17.1h-1.0zM934.6 257.3h1.0v17.2h-1.0zM935.6 258.1h1.0v16.5h-1.0zM936.6 259.8h1.0v16.3h-1.0zM937.6 260.4h0.4v14.1h-0.4z" fill="#009ca0"/>
<rect x="599.6" y="260.8" width="338.4" height="13.4" fill="url(#gc)"/>
<rect x="121" y="29" width="1.3" height="122" fill="#5c5c14"/>
<rect x="575.2" y="49" width="1.3" height="86" fill="#5c5c14"/>
<path d="M30.5 130.9h1.0v20.0h-1.0zM31.5 133.1h1.0v17.8h-1.0zM32.5 133.7h1.0v17.1h-1.0zM33.5 134.5h1.0v17.6h-1.0zM34.5 134.5h1.0v17.1h-1.0zM35.5 133.3h1.0v17.6h-1.0zM36.5 134.5h1.0v16.4h-1.0zM37.5 134.5h1.0v16.4h-1.0zM38.5 132.2h1.0v19.3h-1.0zM39.5 133.9h1.0v17.0h-1.0zM40.5 132.2h1.0v18.7h-1.0zM41.5 134.5h1.0v16.4h-1.0zM42.5 133.5h1.0v19.7h-1.0zM43.5 132.7h1.0v18.1h-1.0zM44.5 132.8h1.0v18.0h-1.0zM45.5 133.3h1.0v18.2h-1.0zM46.5 133.1h1.0v17.7h-1.0zM47.5 130.8h1.0v20.0h-1.0zM48.5 132.9h1.0v18.9h-1.0zM49.5 132.8h1.0v19.2h-1.0zM50.5 133.0h1.0v17.8h-1.0zM51.5 132.6h1.0v18.3h-1.0zM52.5 133.7h1.0v17.2h-1.0zM53.5 134.5h1.0v16.4h-1.0zM54.5 134.5h1.0v17.8h-1.0zM55.5 131.7h1.0v19.1h-1.0zM56.5 134.5h1.0v16.4h-1.0zM57.5 132.9h1.0v18.0h-1.0zM58.5 132.5h1.0v18.3h-1.0zM59.5 132.9h1.0v17.9h-1.0zM60.5 132.3h1.0v18.6h-1.0zM61.5 134.5h1.0v17.4h-1.0zM62.5 132.6h1.0v18.3h-1.0zM63.5 133.0h1.0v17.8h-1.0zM64.5 132.6h1.0v18.2h-1.0zM65.5 133.3h1.0v17.5h-1.0zM66.5 132.5h1.0v19.6h-1.0zM67.5 134.5h1.0v17.3h-1.0zM68.5 132.6h1.0v18.2h-1.0zM69.5 133.3h1.0v17.5h-1.0zM70.5 134.5h1.0v16.4h-1.0zM71.5 134.5h1.0v17.5h-1.0zM72.5 133.3h1.0v17.6h-1.0zM73.5 132.9h1.0v18.0h-1.0zM74.5 134.5h1.0v17.2h-1.0zM75.5 132.2h1.0v20.0h-1.0zM76.5 132.9h1.0v17.9h-1.0zM77.5 133.3h1.0v18.2h-1.0zM78.5 132.6h1.0v18.2h-1.0zM79.5 132.5h1.0v18.4h-1.0zM80.5 132.4h1.0v18.4h-1.0zM81.5 132.2h1.0v18.6h-1.0zM82.5 133.9h1.0v17.0h-1.0zM83.5 134.5h1.0v17.7h-1.0zM84.5 134.5h1.0v16.4h-1.0zM85.5 134.5h1.0v16.4h-1.0zM86.5 132.4h1.0v18.5h-1.0zM87.5 132.7h1.0v18.2h-1.0zM88.5 134.5h1.0v16.4h-1.0zM89.5 133.4h1.0v17.4h-1.0zM90.5 132.4h1.0v18.5h-1.0zM91.5 132.6h1.0v18.2h-1.0zM92.5 132.5h1.0v18.4h-1.0zM93.5 133.7h1.0v19.8h-1.0zM94.5 132.4h1.0v19.1h-1.0zM95.5 132.3h1.0v19.2h-1.0zM96.5 134.5h1.0v17.6h-1.0zM97.5 133.5h1.0v17.4h-1.0zM98.5 134.5h1.0v16.4h-1.0zM99.5 133.8h1.0v18.9h-1.0zM100.5 134.5h1.0v16.4h-1.0zM101.5 134.5h1.0v16.4h-1.0zM102.5 131.9h1.0v18.9h-1.0zM103.5 133.4h1.0v17.5h-1.0zM104.5 133.3h1.0v20.4h-1.0zM105.5 133.0h1.0v17.8h-1.0zM106.5 134.5h1.0v16.4h-1.0zM107.5 132.9h1.0v18.0h-1.0zM108.5 133.4h1.0v18.5h-1.0zM109.5 134.5h1.0v17.4h-1.0zM110.5 134.5h1.0v16.4h-1.0zM111.5 132.4h1.0v18.5h-1.0zM112.5 133.7h1.0v17.2h-1.0zM113.5 130.9h1.0v20.0h-1.0zM114.5 133.0h1.0v20.1h-1.0zM115.5 132.3h1.0v18.6h-1.0zM116.5 134.5h1.0v16.4h-1.0zM117.5 134.5h1.0v17.9h-1.0zM118.5 132.3h1.0v18.5h-1.0zM119.5 134.5h1.0v17.8h-1.0zM120.5 134.5h1.0v16.4h-1.0zM121.5 134.5h0.5v17.7h-0.5z" fill="#aaaa00"/>
<rect x="30.5" y="134.8" width="91.5" height="15.7" fill="url(#gy)"/>
<path d="M121.6 32.6h1.0v17.5h-1.0zM122.6 32.6h1.0v17.3h-1.0zM123.6 32.6h1.0v17.8h-1.0zM124.6 32.6h1.0v18.7h-1.0zM125.6 32.6h1.0v17.8h-1.0zM126.6 32.0h1.0v18.8h-1.0zM127.6 32.6h1.0v16.6h-1.0zM128.6 32.6h1.0v17.9h-1.0zM129.6 31.1h1.0v19.7h-1.0zM130.6 32.6h1.0v17.7h-1.0zM131.6 32.6h1.0v18.8h-1.0zM132.6 32.6h1.0v17.2h-1.0zM133.6 31.7h1.0v19.6h-1.0zM134.6 31.2h1.0v19.5h-1.0zM135.6 32.6h1.0v17.3h-1.0zM136.6 32.6h1.0v17.8h-1.0zM137.6 32.6h1.0v19.3h-1.0zM138.6 31.5h1.0v18.7h-1.0zM139.6 31.6h1.0v19.5h-1.0zM140.6 32.6h1.0v17.9h-1.0zM141.6 31.9h1.0v19.3h-1.0zM142.6 32.6h1.0v17.7h-1.0zM143.6 32.6h1.0v18.3h-1.0zM144.6 32.6h1.0v17.5h-1.0zM145.6 32.6h1.0v18.1h-1.0zM146.6 32.6h1.0v17.7h-1.0zM147.6 31.2h1.0v19.4h-1.0zM148.6 32.6h1.0v18.4h-1.0zM149.6 30.7h1.0v19.6h-1.0zM150.6 32.6h1.0v18.4h-1.0zM151.6 32.6h1.0v20.3h-1.0zM152.6 32.6h1.0v16.6h-1.0zM153.6 31.1h1.0v19.6h-1.0zM154.6 32.6h1.0v17.7h-1.0zM155.6 31.2h1.0v19.8h-1.0zM156.6 32.6h1.0v18.5h-1.0zM157.6 31.6h1.0v18.7h-1.0zM158.6 32.6h1.0v18.2h-1.0zM159.6 32.6h1.0v18.3h-1.0zM160.6 31.5h1.0v19.5h-1.0zM161.6 31.8h1.0v18.2h-1.0zM162.6 30.1h1.0v20.0h-1.0zM163.6 32.6h1.0v18.4h-1.0zM164.6 32.0h1.0v18.7h-1.0zM165.6 29.9h1.0v19.4h-1.0zM166.6 30.0h1.0v20.7h-1.0zM167.6 29.8h1.0v19.5h-1.0zM168.6 31.7h1.0v18.4h-1.0zM169.6 32.6h1.0v18.9h-1.0zM170.6 32.6h1.0v17.2h-1.0zM171.6 32.6h1.0v17.5h-1.0zM172.6 31.7h1.0v18.4h-1.0zM173.6 30.2h1.0v20.1h-1.0zM174.6 32.6h1.0v18.4h-1.0zM175.6 29.8h1.0v20.9h-1.0zM176.6 32.6h1.0v17.4h-1.0zM177.6 32.6h1.0v17.3h-1.0zM178.6 32.6h1.0v18.9h-1.0zM179.6 32.6h1.0v18.1h-1.0zM180.6 32.6h1.0v18.0h-1.0zM181.6 32.6h1.0v18.2h-1.0zM182.6 32.6h1.0v16.6h-1.0zM183.6 31.3h1.0v18.9h-1.0zM184.6 31.9h1.0v18.2h-1.0zM185.6 32.6h1.0v18.2h-1.0zM186.6 32.6h1.0v17.5h-1.0zM187.6 32.6h1.0v18.7h-1.0zM188.6 30.5h1.0v18.8h-1.0zM189.6 29.7h1.0v22.1h-1.0zM190.6 32.6h1.0v16.6h-1.0zM191.6 31.2h1.0v19.9h-1.0zM192.6 32.6h1.0v18.8h-1.0zM193.6 31.2h1.0v19.1h-1.0zM194.6 32.6h1.0v18.4h-1.0zM195.6 31.1h1.0v20.1h-1.0zM196.6 32.6h1.0v19.3h-1.0zM197.6 32.6h1.0v18.0h-1.0zM198.6 31.2h1.0v19.4h-1.0zM199.6 32.6h1.0v16.6h-1.0zM200.6 32.6h1.0v18.3h-1.0zM201.6 32.6h1.0v17.2h-1.0zM202.6 32.6h1.0v18.2h-1.0zM203.6 32.6h1.0v17.2h-1.0zM204.6 32.6h1.0v17.2h-1.0zM205.6 31.0h1.0v19.2h-1.0zM206.6 31.1h1.0v19.7h-1.0zM207.6 31.6h1.0v17.6h-1.0zM208.6 31.6h1.0v19.9h-1.0zM209.6 31.1h1.0v21.5h-1.0zM210.6 31.3h1.0v19.3h-1.0zM211.6 31.5h1.0v20.2h-1.0zM212.6 32.6h1.0v17.6h-1.0zM213.6 31.6h1.0v19.2h-1.0zM214.6 32.6h1.0v18.0h-1.0zM215.6 32.6h1.0v17.2h-1.0zM216.6 30.6h1.0v19.9h-1.0zM217.6 31.1h1.0v20.2h-1.0zM218.6 32.6h1.0v18.4h-1.0zM219.6 30.1h1.0v20.7h-1.0zM220.6 32.6h1.0v17.4h-1.0zM221.6 29.9h1.0v23.0h-1.0zM222.6 31.9h1.0v19.2h-1.0zM223.6 32.6h1.0v18.5h-1.0zM224.6 32.6h1.0v18.7h-1.0zM225.6 32.6h1.0v18.2h-1.0zM226.6 32.6h1.0v18.1h-1.0zM227.6 31.6h1.0v18.9h-1.0zM228.6 32.6h1.0v17.8h-1.0zM229.6 32.6h1.0v18.8h-1.0zM230.6 32.1h1.0v18.4h-1.0zM231.6 32.6h1.0v17.8h-1.0zM232.6 32.1h1.0v20.8h-1.0zM233.6 30.4h1.0v19.5h-1.0zM234.6 32.6h1.0v19.2h-1.0zM235.6 30.1h1.0v20.5h-1.0zM236.6 32.6h1.0v18.5h-1.0zM237.6 32.6h1.0v19.0h-1.0zM238.6 32.6h1.0v16.6h-1.0zM239.6 32.6h1.0v17.4h-1.0zM240.6 31.3h1.0v19.9h-1.0zM241.6 32.6h1.0v18.7h-1.0zM242.6 32.6h1.0v17.3h-1.0zM243.6 32.6h1.0v17.6h-1.0zM244.6 32.6h1.0v17.4h-1.0zM245.6 31.7h1.0v18.6h-1.0zM246.6 32.6h1.0v19.1h-1.0zM247.6 32.6h1.0v18.8h-1.0zM248.6 32.6h1.0v18.2h-1.0zM249.6 31.6h1.0v19.2h-1.0zM250.6 31.0h1.0v19.8h-1.0zM251.6 31.8h1.0v19.6h-1.0zM252.6 32.6h1.0v18.1h-1.0zM253.6 30.0h1.0v20.3h-1.0zM254.6 32.6h1.0v16.6h-1.0zM255.6 31.9h1.0v18.3h-1.0zM256.6 30.5h1.0v20.0h-1.0zM257.6 32.6h1.0v18.5h-1.0zM258.6 32.6h1.0v18.7h-1.0zM259.6 29.7h1.0v21.2h-1.0zM260.6 32.6h1.0v17.4h-1.0zM261.6 32.6h1.0v18.3h-1.0zM262.6 32.6h1.0v17.5h-1.0zM263.6 31.7h1.0v19.0h-1.0zM264.6 31.3h1.0v18.6h-1.0zM265.6 30.7h1.0v21.6h-1.0zM266.6 30.7h1.0v19.6h-1.0zM267.6 30.0h1.0v21.0h-1.0zM268.6 32.6h1.0v17.3h-1.0zM269.6 31.9h1.0v18.8h-1.0zM270.6 32.6h1.0v17.9h-1.0zM271.6 31.0h1.0v19.4h-1.0zM272.6 31.0h1.0v20.2h-1.0zM273.6 31.4h1.0v19.9h-1.0zM274.6 30.9h1.0v20.3h-1.0zM275.6 32.6h1.0v18.3h-1.0zM276.6 30.6h1.0v20.8h-1.0zM277.6 31.4h1.0v18.7h-1.0zM278.6 32.6h1.0v16.6h-1.0zM279.6 31.9h1.0v19.0h-1.0zM280.6 32.6h1.0v18.6h-1.0zM281.6 31.9h1.0v18.8h-1.0zM282.6 32.6h1.0v18.4h-1.0zM283.6 32.6h1.0v17.2h-1.0zM284.6 32.6h1.0v17.7h-1.0zM285.6 31.4h1.0v18.6h-1.0zM286.6 29.9h1.0v20.1h-1.0zM287.6 32.6h1.0v17.8h-1.0zM288.6 31.4h1.0v18.7h-1.0zM289.6 31.7h1.0v18.8h-1.0zM290.6 32.6h1.0v17.8h-1.0zM291.6 32.6h1.0v17.7h-1.0zM292.6 32.6h1.0v20.2h-1.0zM293.6 32.6h1.0v18.5h-1.0zM294.6 32.6h1.0v17.6h-1.0zM295.6 31.1h1.0v19.4h-1.0zM296.6 32.6h1.0v18.3h-1.0zM297.6 32.6h1.0v18.6h-1.0zM298.6 30.8h1.0v20.2h-1.0zM299.6 32.6h1.0v17.4h-1.0zM300.6 32.6h1.0v18.5h-1.0zM301.6 30.6h1.0v20.5h-1.0zM302.6 32.6h1.0v18.3h-1.0zM303.6 32.6h1.0v20.0h-1.0zM304.6 32.6h1.0v17.6h-1.0zM305.6 32.6h1.0v19.3h-1.0zM306.6 31.9h1.0v17.4h-1.0zM307.6 31.2h1.0v19.5h-1.0zM308.6 32.6h1.0v18.1h-1.0zM309.6 31.1h1.0v18.9h-1.0zM310.6 32.6h1.0v18.5h-1.0zM311.6 32.6h1.0v16.6h-1.0zM312.6 32.1h1.0v19.0h-1.0zM313.6 31.5h1.0v18.6h-1.0zM314.6 32.6h1.0v16.6h-1.0zM315.6 32.6h1.0v18.0h-1.0zM316.6 29.8h1.0v21.2h-1.0zM317.6 30.0h1.0v21.1h-1.0zM318.6 32.6h1.0v19.9h-1.0zM319.6 32.6h1.0v18.5h-1.0zM320.6 32.6h1.0v16.6h-1.0zM321.6 31.1h1.0v19.5h-1.0zM322.6 32.6h1.0v17.7h-1.0zM323.6 32.6h1.0v19.4h-1.0zM324.6 32.6h1.0v17.2h-1.0zM325.6 32.0h1.0v18.3h-1.0zM326.6 30.4h1.0v20.9h-1.0zM327.6 32.6h1.0v17.9h-1.0zM328.6 30.2h1.0v21.2h-1.0zM329.6 32.6h1.0v18.6h-1.0zM330.6 32.0h1.0v18.1h-1.0zM331.6 32.6h1.0v16.6h-1.0zM332.6 32.6h1.0v16.6h-1.0zM333.6 31.9h1.0v18.4h-1.0zM334.6 31.5h1.0v19.4h-1.0zM335.6 32.6h1.0v17.7h-1.0zM336.6 32.6h1.0v18.4h-1.0zM337.6 32.6h1.0v17.6h-1.0zM338.6 31.6h1.0v18.5h-1.0zM339.6 32.6h1.0v20.1h-1.0zM340.6 32.6h1.0v17.4h-1.0zM341.6 30.0h1.0v19.2h-1.0zM342.6 32.1h1.0v18.3h-1.0zM343.6 32.6h1.0v18.6h-1.0zM344.6 29.8h1.0v20.5h-1.0zM345.6 31.0h1.0v20.2h-1.0zM346.6 31.5h1.0v20.0h-1.0zM347.6 32.6h1.0v17.8h-1.0zM348.6 32.6h1.0v18.8h-1.0zM349.6 31.0h1.0v18.3h-1.0zM350.6 30.3h1.0v20.5h-1.0zM351.6 32.6h1.0v16.6h-1.0zM352.6 32.6h1.0v18.5h-1.0zM353.6 31.6h1.0v17.6h-1.0zM354.6 30.5h1.0v19.7h-1.0zM355.6 32.6h1.0v17.3h-1.0zM356.6 32.6h1.0v18.3h-1.0zM357.6 30.8h1.0v20.7h-1.0zM358.6 32.6h1.0v18.5h-1.0zM359.6 32.6h1.0v16.6h-1.0zM360.6 32.6h1.0v18.0h-1.0zM361.6 32.6h1.0v18.3h-1.0zM362.6 32.6h1.0v18.1h-1.0zM363.6 32.6h1.0v18.6h-1.0zM364.6 31.5h1.0v18.5h-1.0zM365.6 32.6h1.0v17.5h-1.0zM366.6 32.6h1.0v17.9h-1.0zM367.6 32.0h1.0v18.0h-1.0zM368.6 30.0h1.0v22.9h-1.0zM369.6 32.1h1.0v18.7h-1.0zM370.6 32.6h1.0v17.9h-1.0zM371.6 31.5h1.0v17.8h-1.0zM372.6 32.0h1.0v18.0h-1.0zM373.6 31.6h1.0v17.6h-1.0zM374.6 30.6h1.0v19.5h-1.0zM375.6 32.6h1.0v17.7h-1.0zM376.6 32.6h1.0v17.3h-1.0zM377.6 32.6h1.0v18.7h-1.0zM378.6 31.3h1.0v19.2h-1.0zM379.6 31.4h1.0v19.2h-1.0zM380.6 32.6h1.0v18.2h-1.0zM381.6 32.6h1.0v17.9h-1.0zM382.6 32.6h1.0v20.3h-1.0zM383.6 32.6h1.0v17.5h-1.0zM384.6 32.6h1.0v17.6h-1.0zM385.6 32.6h1.0v16.6h-1.0zM386.6 32.6h1.0v16.6h-1.0zM387.6 32.6h1.0v18.6h-1.0zM388.6 31.7h1.0v17.5h-1.0zM389.6 31.8h1.0v19.3h-1.0zM390.6 32.6h1.0v16.6h-1.0zM391.6 32.6h1.0v17.3h-1.0zM392.6 31.6h1.0v19.1h-1.0zM393.6 32.6h1.0v18.6h-1.0zM394.6 32.6h1.0v16.6h-1.0zM395.6 32.6h1.0v18.1h-1.0zM396.6 30.0h1.0v20.2h-1.0zM397.6 29.9h1.0v20.0h-1.0zM398.6 30.2h1.0v21.5h-1.0zM399.6 32.6h1.0v18.0h-1.0zM400.6 32.6h1.0v18.8h-1.0zM401.6 32.6h1.0v16.6h-1.0zM402.6 32.6h1.0v17.4h-1.0zM403.6 31.2h1.0v19.7h-1.0zM404.6 30.7h1.0v18.6h-1.0zM405.6 32.6h1.0v17.7h-1.0zM406.6 30.9h1.0v18.3h-1.0zM407.6 32.6h1.0v18.9h-1.0zM408.6 32.6h1.0v18.4h-1.0zM409.6 32.6h1.0v18.5h-1.0zM410.6 32.1h1.0v19.1h-1.0zM411.6 32.6h1.0v17.5h-1.0zM412.6 32.6h1.0v17.7h-1.0zM413.6 31.0h1.0v20.1h-1.0zM414.6 32.6h1.0v18.8h-1.0zM415.6 32.6h1.0v16.6h-1.0zM416.6 32.6h1.0v18.4h-1.0zM417.6 31.7h1.0v19.7h-1.0zM418.6 31.6h1.0v19.9h-1.0zM419.6 32.6h1.0v18.0h-1.0zM420.6 32.6h1.0v17.9h-1.0zM421.6 32.6h1.0v18.7h-1.0zM422.6 29.9h1.0v20.9h-1.0zM423.6 32.6h1.0v17.3h-1.0zM424.6 31.8h1.0v18.1h-1.0zM425.6 32.6h1.0v18.2h-1.0zM426.6 31.3h1.0v21.1h-1.0zM427.6 31.5h1.0v18.8h-1.0zM428.6 31.1h1.0v20.2h-1.0zM429.6 31.8h1.0v18.1h-1.0zM430.6 30.3h1.0v21.0h-1.0zM431.6 32.6h1.0v18.1h-1.0zM432.6 32.6h1.0v17.2h-1.0zM433.6 32.6h1.0v17.4h-1.0zM434.6 31.9h1.0v18.2h-1.0zM435.6 31.6h1.0v18.7h-1.0zM436.6 32.6h1.0v17.2h-1.0zM437.6 30.7h1.0v19.8h-1.0zM438.6 32.6h1.0v17.2h-1.0zM439.6 32.6h1.0v18.0h-1.0zM440.6 31.8h1.0v17.4h-1.0zM441.6 32.6h1.0v18.5h-1.0zM442.6 32.6h1.0v18.0h-1.0zM443.6 32.6h1.0v17.7h-1.0zM444.6 32.6h1.0v18.2h-1.0zM445.6 32.6h1.0v17.3h-1.0zM446.6 31.2h1.0v21.7h-1.0zM447.6 31.3h1.0v19.1h-1.0zM448.6 31.2h1.0v21.6h-1.0zM449.6 32.6h1.0v16.6h-1.0zM450.6 30.3h1.0v19.9h-1.0zM451.6 32.6h1.0v18.5h-1.0zM452.6 32.0h1.0v18.9h-1.0zM453.6 32.6h1.0v18.6h-1.0zM454.6 32.6h1.0v18.1h-1.0zM455.6 31.8h1.0v18.1h-1.0zM456.6 32.6h1.0v19.8h-1.0zM457.6 31.9h1.0v18.8h-1.0zM458.6 32.0h1.0v18.8h-1.0zM459.6 31.2h1.0v19.6h-1.0zM460.6 32.6h1.0v18.8h-1.0zM461.6 32.6h1.0v18.1h-1.0zM462.6 32.6h1.0v16.6h-1.0zM463.6 32.6h1.0v18.4h-1.0zM464.6 32.6h1.0v16.6h-1.0zM465.6 32.6h1.0v17.5h-1.0zM466.6 32.6h1.0v17.5h-1.0zM467.6 32.6h1.0v18.4h-1.0zM468.6 32.6h1.0v18.4h-1.0zM469.6 32.6h1.0v16.6h-1.0zM470.6 32.6h1.0v17.6h-1.0zM471.6 32.6h1.0v18.7h-1.0zM472.6 32.6h1.0v17.2h-1.0zM473.6 32.6h1.0v17.7h-1.0zM474.6 31.6h1.0v18.5h-1.0zM475.6 32.6h1.0v18.0h-1.0zM476.6 32.6h1.0v17.4h-1.0zM477.6 31.5h1.0v17.8h-1.0zM478.6 30.5h1.0v20.5h-1.0zM479.6 32.6h1.0v17.2h-1.0zM480.6 31.9h1.0v18.6h-1.0zM481.6 32.6h1.0v16.6h-1.0zM482.6 32.6h1.0v18.8h-1.0zM483.6 32.6h1.0v18.6h-1.0zM484.6 31.0h1.0v18.3h-1.0zM485.6 32.6h1.0v17.3h-1.0zM486.6 32.6h1.0v18.2h-1.0zM487.6 29.8h1.0v20.5h-1.0zM488.6 32.6h1.0v17.6h-1.0zM489.6 32.6h1.0v16.6h-1.0zM490.6 31.9h1.0v18.1h-1.0zM491.6 32.6h1.0v18.4h-1.0zM492.6 32.6h1.0v18.7h-1.0zM493.6 32.6h1.0v19.6h-1.0zM494.6 32.6h1.0v17.6h-1.0zM495.6 31.6h1.0v18.5h-1.0zM496.6 32.6h1.0v18.6h-1.0zM497.6 31.6h1.0v18.4h-1.0zM498.6 29.8h1.0v20.9h-1.0zM499.6 32.6h1.0v20.3h-1.0zM500.6 32.6h1.0v18.6h-1.0zM501.6 31.8h1.0v18.8h-1.0zM502.6 32.6h1.0v17.9h-1.0zM503.6 31.3h1.0v19.0h-1.0zM504.6 32.6h1.0v16.6h-1.0zM505.6 32.6h1.0v16.6h-1.0zM506.6 31.7h1.0v18.6h-1.0zM507.6 32.6h1.0v16.6h-1.0zM508.6 31.5h1.0v17.7h-1.0zM509.6 32.6h1.0v17.3h-1.0zM510.6 32.6h1.0v18.5h-1.0zM511.6 31.8h1.0v17.5h-1.0zM512.6 31.4h1.0v19.6h-1.0zM513.6 32.6h1.0v16.6h-1.0zM514.6 31.1h1.0v18.7h-1.0zM515.6 32.0h1.0v19.4h-1.0zM516.6 32.6h1.0v17.2h-1.0zM517.6 32.6h1.0v17.3h-1.0zM518.6 32.6h1.0v17.7h-1.0zM519.6 32.6h1.0v17.4h-1.0zM520.6 32.0h1.0v18.8h-1.0zM521.6 32.6h1.0v16.6h-1.0zM522.6 32.6h1.0v18.5h-1.0zM523.6 32.6h1.0v18.8h-1.0zM524.6 32.6h1.0v17.5h-1.0zM525.6 31.4h1.0v19.8h-1.0zM526.6 32.1h1.0v17.2h-1.0zM527.6 30.7h1.0v21.0h-1.0zM528.6 32.6h1.0v19.7h-1.0zM529.6 32.6h1.0v18.2h-1.0zM530.6 32.6h1.0v18.0h-1.0zM531.6 31.9h1.0v18.1h-1.0zM532.6 31.8h1.0v18.9h-1.0zM533.6 32.6h1.0v16.6h-1.0zM534.6 32.6h1.0v18.1h-1.0zM535.6 32.6h1.0v17.9h-1.0zM536.6 32.6h1.0v16.6h-1.0zM537.6 32.6h1.0v18.1h-1.0zM538.6 30.4h1.0v19.4h-1.0zM539.6 32.6h1.0v18.2h-1.0zM540.6 32.6h1.0v18.2h-1.0zM541.6 30.7h1.0v20.0h-1.0zM542.6 31.3h1.0v19.1h-1.0zM543.6 29.9h1.0v19.3h-1.0zM544.6 32.6h1.0v17.3h-1.0zM545.6 32.6h1.0v18.6h-1.0zM546.6 32.6h1.0v17.9h-1.0zM547.6 32.6h1.0v17.8h-1.0zM548.6 32.6h1.0v18.1h-1.0zM549.6 31.9h1.0v18.0h-1.0zM550.6 32.6h1.0v18.7h-1.0zM551.6 32.6h1.0v16.6h-1.0zM552.6 32.6h1.0v17.6h-1.0zM553.6 32.6h1.0v16.6h-1.0zM554.6 32.6h1.0v17.8h-1.0zM555.6 31.4h1.0v19.2h-1.0zM556.6 32.6h1.0v17.3h-1.0zM557.6 31.3h1.0v19.6h-1.0zM558.6 32.6h1.0v17.9h-1.0zM559.6 32.6h1.0v17.2h-1.0zM560.6 31.1h1.0v19.0h-1.0zM561.6 32.6h1.0v16.6h-1.0zM562.6 32.6h1.0v18.5h-1.0zM563.6 31.6h1.0v20.4h-1.0zM564.6 31.1h1.0v18.7h-1.0zM565.6 31.5h1.0v17.8h-1.0zM566.6 32.6h1.0v19.0h-1.0zM567.6 32.6h1.0v17.7h-1.0zM568.6 31.6h1.0v19.3h-1.0zM569.6 32.6h1.0v16.6h-1.0zM570.6 32.6h1.0v18.6h-1.0zM571.6 32.6h1.0v16.6h-1.0zM572.6 32.6h1.0v18.3h-1.0zM573.6 31.0h1.0v20.3h-1.0zM574.6 32.6h1.0v18.3h-1.0zM575.6 32.6h0.4v17.6h-0.4z" fill="#aaaa00"/>
<rect x="121.6" y="33.0" width="454.4" height="15.9" fill="url(#gy)"/>
<path d="M575.7 132.6h1.0v18.9h-1.0zM576.7 132.7h1.0v19.0h-1.0zM577.7 134.5h1.0v19.1h-1.0zM578.7 133.7h1.0v17.1h-1.0zM579.7 134.5h1.0v16.4h-1.0zM580.7 132.6h1.0v18.2h-1.0zM581.7 132.7h1.0v18.1h-1.0zM582.7 132.6h1.0v19.1h-1.0zM583.7 134.5h1.0v16.4h-1.0zM584.7 132.6h1.0v18.2h-1.0zM585.7 132.9h1.0v18.8h-1.0zM586.7 132.1h1.0v18.7h-1.0zM587.7 131.9h1.0v19.0h-1.0zM588.7 132.5h1.0v18.4h-1.0zM589.7 132.6h1.0v21.1h-1.0zM590.7 132.5h1.0v18.3h-1.0zM591.7 133.2h1.0v17.7h-1.0zM592.7 132.3h1.0v18.5h-1.0zM593.7 132.9h1.0v17.9h-1.0zM594.7 133.3h1.0v17.6h-1.0zM595.7 133.0h1.0v19.7h-1.0zM596.7 131.7h1.0v19.2h-1.0zM597.7 134.5h1.0v16.4h-1.0zM598.7 133.0h1.0v18.8h-1.0zM599.7 133.0h1.0v17.9h-1.0zM600.7 134.5h1.0v16.4h-1.0zM601.7 132.2h1.0v20.0h-1.0zM602.7 134.5h1.0v17.9h-1.0zM603.7 133.2h1.0v17.7h-1.0zM604.7 133.0h1.0v17.9h-1.0zM605.7 134.5h1.0v18.0h-1.0zM606.7 134.5h1.0v16.4h-1.0zM607.7 132.0h1.0v20.3h-1.0zM608.7 133.0h1.0v17.8h-1.0zM609.7 132.8h1.0v19.2h-1.0zM610.7 131.9h1.0v19.0h-1.0zM611.7 134.5h1.0v16.4h-1.0zM612.7 134.5h1.0v16.4h-1.0zM613.7 131.4h1.0v19.5h-1.0zM614.7 134.5h1.0v16.4h-1.0zM615.7 131.9h1.0v21.0h-1.0zM616.7 134.5h1.0v16.4h-1.0zM617.7 132.1h1.0v19.4h-1.0zM618.7 133.8h1.0v17.1h-1.0zM619.7 133.2h1.0v17.6h-1.0zM620.7 132.8h1.0v18.1h-1.0zM621.7 132.2h1.0v21.0h-1.0zM622.7 133.6h1.0v18.3h-1.0zM623.7 134.5h1.0v16.4h-1.0zM624.7 132.2h1.0v20.1h-1.0zM625.7 132.7h1.0v18.9h-1.0zM626.7 132.5h1.0v18.3h-1.0zM627.7 133.2h1.0v17.7h-1.0zM628.7 132.2h1.0v19.3h-1.0zM629.7 133.3h1.0v17.6h-1.0zM630.7 132.7h1.0v18.2h-1.0zM631.7 134.5h1.0v18.6h-1.0zM632.7 132.9h1.0v20.5h-1.0zM633.7 132.6h1.0v20.5h-1.0zM634.7 132.6h1.0v18.2h-1.0zM635.7 133.7h1.0v17.8h-1.0zM636.7 133.6h1.0v17.3h-1.0zM637.7 132.3h1.0v19.4h-1.0zM638.7 133.6h1.0v17.2h-1.0zM639.7 133.4h1.0v17.4h-1.0zM640.7 131.5h1.0v19.3h-1.0zM641.7 131.5h1.0v20.2h-1.0zM642.7 134.5h1.0v16.4h-1.0zM643.7 133.7h1.0v17.1h-1.0zM644.7 134.5h1.0v16.4h-1.0zM645.7 133.0h1.0v19.7h-1.0zM646.7 132.7h1.0v18.2h-1.0zM647.7 134.5h1.0v16.4h-1.0zM648.7 134.5h1.0v16.4h-1.0zM649.7 134.5h1.0v17.1h-1.0zM650.7 134.5h1.0v16.4h-1.0zM651.7 132.8h1.0v18.1h-1.0zM652.7 133.6h1.0v17.2h-1.0zM653.7 133.7h1.0v17.2h-1.0zM654.7 132.3h1.0v20.9h-1.0zM655.7 132.4h1.0v19.6h-1.0zM656.7 133.3h1.0v18.6h-1.0zM657.7 132.4h1.0v19.2h-1.0zM658.7 132.5h1.0v19.6h-1.0zM659.7 133.8h1.0v17.1h-1.0zM660.7 133.7h1.0v17.2h-1.0zM661.7 134.5h1.0v16.4h-1.0zM662.7 133.1h1.0v17.7h-1.0zM663.7 132.3h1.0v18.5h-1.0zM664.7 133.4h1.0v18.9h-1.0zM665.7 134.5h1.0v16.4h-1.0zM666.7 132.9h1.0v18.5h-1.0zM667.7 131.9h1.0v19.0h-1.0zM668.7 133.9h1.0v18.2h-1.0zM669.7 132.1h1.0v18.7h-1.0zM670.7 133.9h1.0v17.0h-1.0zM671.7 132.4h1.0v19.9h-1.0zM672.7 133.5h1.0v17.3h-1.0zM673.7 132.9h1.0v19.2h-1.0zM674.7 132.7h1.0v18.2h-1.0zM675.7 130.9h1.0v22.6h-1.0zM676.7 132.3h1.0v18.6h-1.0zM677.7 134.5h1.0v16.4h-1.0zM678.7 132.3h1.0v18.6h-1.0zM679.7 134.5h1.0v19.2h-1.0zM680.7 131.0h1.0v19.8h-1.0zM681.7 133.2h1.0v17.7h-1.0zM682.7 131.4h1.0v19.5h-1.0zM683.7 133.9h1.0v17.0h-1.0zM684.7 132.4h1.0v19.9h-1.0zM685.7 133.7h1.0v17.2h-1.0zM686.7 131.6h1.0v19.3h-1.0zM687.7 132.2h1.0v18.7h-1.0zM688.7 133.1h1.0v17.8h-1.0zM689.7 132.0h1.0v18.9h-1.0zM690.7 134.5h1.0v16.4h-1.0zM691.7 133.3h1.0v18.2h-1.0zM692.7 132.3h1.0v18.5h-1.0zM693.7 132.6h1.0v18.3h-1.0zM694.7 132.4h1.0v19.4h-1.0zM695.7 132.6h1.0v18.3h-1.0zM696.7 132.3h1.0v18.5h-1.0zM697.7 133.5h1.0v17.4h-1.0zM698.7 131.6h1.0v19.2h-1.0zM699.7 133.9h1.0v17.0h-1.0zM700.7 132.9h1.0v17.9h-1.0zM701.7 133.8h1.0v17.8h-1.0zM702.7 134.5h1.0v16.4h-1.0zM703.7 133.4h1.0v17.4h-1.0zM704.7 133.3h1.0v17.5h-1.0zM705.7 133.5h1.0v17.4h-1.0zM706.7 133.0h1.0v17.9h-1.0zM707.7 132.9h1.0v20.6h-1.0zM708.7 132.3h1.0v18.6h-1.0zM709.7 133.6h1.0v17.3h-1.0zM710.7 134.5h1.0v17.4h-1.0zM711.7 133.1h1.0v17.8h-1.0zM712.7 132.6h1.0v18.3h-1.0zM713.7 132.8h1.0v18.1h-1.0zM714.7 132.9h1.0v17.9h-1.0zM715.7 132.4h1.0v19.3h-1.0zM716.7 134.5h1.0v16.4h-1.0zM717.7 132.2h1.0v20.2h-1.0zM718.7 133.8h1.0v17.0h-1.0zM719.7 132.5h1.0v19.0h-1.0zM720.7 133.7h1.0v17.1h-1.0zM721.7 132.6h1.0v18.3h-1.0zM722.7 134.5h1.0v16.4h-1.0zM723.7 132.2h1.0v18.6h-1.0zM724.7 133.0h1.0v18.8h-1.0zM725.7 133.5h1.0v17.3h-1.0zM726.7 132.5h1.0v18.3h-1.0zM727.7 134.5h1.0v17.8h-1.0zM728.7 132.8h1.0v19.3h-1.0zM729.7 132.6h1.0v18.2h-1.0zM730.7 133.4h1.0v17.5h-1.0zM731.7 132.8h1.0v18.1h-1.0zM732.7 131.7h1.0v19.2h-1.0zM733.7 132.6h1.0v19.4h-1.0zM734.7 132.8h1.0v19.9h-1.0zM735.7 132.3h1.0v18.6h-1.0zM736.7 134.5h1.0v16.4h-1.0zM737.7 132.9h1.0v19.4h-1.0zM738.7 133.7h1.0v17.2h-1.0zM739.7 132.7h1.0v21.1h-1.0zM740.7 133.8h1.0v17.1h-1.0zM741.7 134.5h1.0v19.0h-1.0zM742.7 134.5h1.0v16.4h-1.0zM743.7 132.4h1.0v19.8h-1.0zM744.7 131.5h1.0v19.4h-1.0zM745.7 134.5h1.0v16.4h-1.0zM746.7 134.5h1.0v16.4h-1.0zM747.7 131.2h1.0v19.6h-1.0zM748.7 133.0h1.0v18.7h-1.0zM749.7 134.5h1.0v16.4h-1.0zM750.7 131.2h1.0v19.6h-1.0zM751.7 132.7h1.0v19.1h-1.0zM752.7 134.5h1.0v17.4h-1.0zM753.7 133.4h1.0v17.4h-1.0zM754.7 132.5h1.0v18.4h-1.0zM755.7 134.5h1.0v19.3h-1.0zM756.7 133.1h1.0v17.8h-1.0zM757.7 132.7h1.0v18.7h-1.0zM758.7 133.7h1.0v17.1h-1.0zM759.7 132.2h1.0v18.7h-1.0zM760.7 132.6h1.0v20.6h-1.0zM761.7 132.4h1.0v18.4h-1.0zM762.7 132.7h1.0v19.9h-1.0zM763.7 132.6h1.0v18.3h-1.0zM764.7 133.5h1.0v17.4h-1.0zM765.7 133.8h1.0v17.0h-1.0zM766.7 132.3h1.0v19.8h-1.0zM767.7 134.5h1.0v18.8h-1.0zM768.7 134.5h1.0v16.4h-1.0zM769.7 132.1h1.0v21.7h-1.0zM770.7 133.1h1.0v20.2h-1.0zM771.7 134.5h1.0v16.4h-1.0zM772.7 132.1h1.0v18.7h-1.0zM773.7 132.4h1.0v19.6h-1.0zM774.7 134.5h1.0v16.4h-1.0zM775.7 132.0h1.0v18.8h-1.0zM776.7 132.8h1.0v18.0h-1.0zM777.7 132.9h1.0v17.9h-1.0zM778.7 134.5h1.0v18.4h-1.0zM779.7 133.7h1.0v17.2h-1.0zM780.7 134.5h1.0v17.3h-1.0zM781.7 134.5h1.0v16.4h-1.0zM782.7 134.5h1.0v16.4h-1.0zM783.7 133.8h1.0v18.1h-1.0zM784.7 133.4h1.0v17.4h-1.0zM785.7 131.9h1.0v19.8h-1.0zM786.7 133.7h1.0v18.5h-1.0zM787.7 134.5h1.0v17.8h-1.0zM788.7 134.5h1.0v16.4h-1.0zM789.7 132.4h1.0v19.0h-1.0zM790.7 134.5h1.0v17.9h-1.0zM791.7 134.5h1.0v17.0h-1.0zM792.7 133.6h1.0v17.2h-1.0zM793.7 131.8h1.0v19.1h-1.0zM794.7 132.3h1.0v18.5h-1.0zM795.7 131.3h1.0v21.0h-1.0zM796.7 134.5h1.0v16.4h-1.0zM797.7 133.0h1.0v17.8h-1.0zM798.7 133.4h1.0v17.4h-1.0zM799.7 133.9h1.0v17.0h-1.0zM800.7 134.5h1.0v16.4h-1.0zM801.7 133.0h1.0v17.9h-1.0zM802.7 133.1h1.0v17.8h-1.0zM803.7 131.0h1.0v19.9h-1.0zM804.7 134.5h1.0v16.4h-1.0zM805.7 133.4h1.0v19.5h-1.0zM806.7 133.4h1.0v17.5h-1.0zM807.7 131.6h1.0v19.2h-1.0zM808.7 134.5h1.0v17.6h-1.0zM809.7 134.5h1.0v16.4h-1.0zM810.7 134.5h1.0v16.4h-1.0zM811.7 133.6h1.0v17.2h-1.0zM812.7 133.3h1.0v17.6h-1.0zM813.7 130.9h1.0v19.9h-1.0zM814.7 134.5h1.0v17.3h-1.0zM815.7 133.5h1.0v19.1h-1.0zM816.7 133.7h1.0v17.2h-1.0zM817.7 133.5h1.0v17.4h-1.0zM818.7 133.9h1.0v17.0h-1.0zM819.7 134.5h1.0v16.4h-1.0zM820.7 133.4h1.0v17.4h-1.0zM821.7 132.2h1.0v18.7h-1.0zM822.7 133.8h1.0v19.2h-1.0zM823.7 134.5h1.0v17.5h-1.0zM824.7 132.2h1.0v18.7h-1.0zM825.7 134.5h1.0v16.4h-1.0zM826.7 133.5h1.0v18.5h-1.0zM827.7 133.6h1.0v18.8h-1.0zM828.7 134.5h1.0v19.4h-1.0zM829.7 133.6h1.0v17.2h-1.0zM830.7 134.5h1.0v17.7h-1.0zM831.7 132.5h1.0v20.0h-1.0zM832.7 132.6h1.0v18.3h-1.0zM833.7 134.5h1.0v17.2h-1.0zM834.7 132.4h1.0v18.5h-1.0zM835.7 132.6h1.0v19.3h-1.0zM836.7 132.5h1.0v18.3h-1.0zM837.7 131.8h1.0v20.2h-1.0zM838.7 132.1h1.0v18.8h-1.0zM839.7 134.5h1.0v16.4h-1.0zM840.7 132.7h1.0v18.1h-1.0zM841.7 133.0h1.0v17.9h-1.0zM842.7 133.8h1.0v17.0h-1.0zM843.7 133.3h1.0v17.6h-1.0zM844.7 133.3h1.0v17.5h-1.0zM845.7 134.5h1.0v16.4h-1.0zM846.7 134.5h1.0v17.5h-1.0zM847.7 131.1h1.0v19.8h-1.0zM848.7 132.2h1.0v18.7h-1.0zM849.7 131.7h1.0v20.3h-1.0zM850.7 132.3h1.0v18.6h-1.0zM851.7 134.5h1.0v16.4h-1.0zM852.7 134.5h1.0v17.9h-1.0zM853.7 132.8h1.0v18.7h-1.0zM854.7 131.2h1.0v19.7h-1.0zM855.7 133.0h1.0v17.8h-1.0zM856.7 132.3h1.0v19.9h-1.0zM857.7 132.8h1.0v18.1h-1.0zM858.7 133.1h1.0v17.7h-1.0zM859.7 134.5h1.0v17.5h-1.0zM860.7 134.5h1.0v17.8h-1.0zM861.7 134.5h1.0v18.3h-1.0zM862.7 133.5h1.0v17.3h-1.0zM863.7 130.9h1.0v20.0h-1.0zM864.7 134.5h1.0v16.4h-1.0zM865.7 132.1h1.0v18.8h-1.0zM866.7 133.7h1.0v17.2h-1.0zM867.7 133.4h1.0v17.5h-1.0zM868.7 133.8h1.0v18.2h-1.0zM869.7 133.7h1.0v17.1h-1.0zM870.7 132.1h1.0v19.5h-1.0zM871.7 132.9h1.0v17.9h-1.0zM872.7 134.5h1.0v17.5h-1.0zM873.7 132.1h1.0v18.7h-1.0zM874.7 133.4h1.0v17.4h-1.0zM875.7 133.2h1.0v17.6h-1.0zM876.7 133.1h1.0v17.7h-1.0zM877.7 133.0h1.0v17.9h-1.0zM878.7 134.5h1.0v16.4h-1.0zM879.7 132.6h1.0v19.4h-1.0zM880.7 133.6h1.0v18.2h-1.0zM881.7 132.1h1.0v18.8h-1.0zM882.7 132.2h1.0v18.7h-1.0zM883.7 132.4h1.0v18.5h-1.0zM884.7 132.4h1.0v19.8h-1.0zM885.7 132.5h1.0v19.0h-1.0zM886.7 132.8h1.0v18.0h-1.0zM887.7 132.9h1.0v18.0h-1.0zM888.7 132.4h1.0v18.4h-1.0zM889.7 131.5h1.0v19.3h-1.0zM890.7 133.7h1.0v18.0h-1.0zM891.7 132.3h1.0v18.6h-1.0zM892.7 134.5h1.0v16.4h-1.0zM893.7 134.5h1.0v16.4h-1.0zM894.7 131.5h1.0v20.4h-1.0zM895.7 132.4h1.0v19.6h-1.0zM896.7 133.1h1.0v17.7h-1.0zM897.7 134.5h1.0v16.4h-1.0zM898.7 132.2h1.0v18.7h-1.0zM899.7 132.9h1.0v19.3h-1.0zM900.7 132.5h1.0v18.3h-1.0zM901.7 132.6h1.0v18.2h-1.0zM902.7 133.1h1.0v18.5h-1.0zM903.7 134.5h1.0v16.4h-1.0zM904.7 133.1h1.0v18.9h-1.0zM905.7 133.5h1.0v17.3h-1.0zM906.7 134.5h1.0v17.7h-1.0zM907.7 133.0h1.0v17.8h-1.0zM908.7 133.3h1.0v17.6h-1.0zM909.7 132.1h1.0v21.6h-1.0zM910.7 134.5h1.0v16.4h-1.0zM911.7 133.0h1.0v17.8h-1.0zM912.7 133.5h1.0v18.4h-1.0zM913.7 132.2h1.0v18.7h-1.0zM914.7 133.0h1.0v19.1h-1.0zM915.7 133.6h1.0v17.3h-1.0zM916.7 133.6h1.0v17.3h-1.0zM917.7 134.5h1.0v17.2h-1.0zM918.7 134.5h1.0v19.3h-1.0zM919.7 133.5h1.0v20.2h-1.0zM920.7 132.7h1.0v18.2h-1.0zM921.7 134.5h1.0v16.4h-1.0zM922.7 133.0h1.0v18.5h-1.0zM923.7 132.6h1.0v18.3h-1.0zM924.7 133.4h1.0v18.9h-1.0zM925.7 134.5h1.0v16.4h-1.0zM926.7 134.5h1.0v16.4h-1.0zM927.7 133.4h1.0v18.6h-1.0zM928.7 133.0h1.0v17.9h-1.0zM929.7 133.3h1.0v17.5h-1.0zM930.7 134.5h1.0v17.4h-1.0zM931.7 132.6h1.0v18.3h-1.0zM932.7 134.5h1.0v16.4h-1.0zM933.7 134.5h1.0v16.4h-1.0zM934.7 132.1h1.0v18.7h-1.0zM935.7 133.7h1.0v17.1h-1.0zM936.7 132.2h1.0v18.6h-1.0zM937.7 130.9h0.3v20.0h-0.3z" fill="#aaaa00"/>
<rect x="575.7" y="134.8" width="362.3" height="15.7" fill="url(#gy)"/>
<!-- trigger position marker -->
<path d="M477.8 24.2h13.6l-6.8 6.2z" fill="#ff9a1a"/>
<!-- T marker -->
<path d="M115.2 35q0-3 3-3h8.6q3 0 3 3v9.5q0 2.5-7.3 5q-7.3-2.500-7.300-5z" fill="#ff9a1a"/>
<text x="122.300" y="46.300" font-size="18" font-weight="bold" text-anchor="middle" fill="#000" font-family='"Liberation Sans","DejaVu Sans",sans-serif'>T</text>
<!-- trigger level arrow -->
<path d="M924.500 89.600l7.500-6.500v5.300h6v2.400h-6v5.300z" fill="#f4f400"/>
<!-- channel markers -->
<path d="M5.800 131.300h16.200l6.800 9.600l-6.800 9.600h-16.200z" fill="#0a0a20"/><path d="M5 130.300h15.600l7.700 9.700l-7.700 9.600h-15.600z" fill="#f4f400"/>
<text x="14" y="146.700" font-size="17.500" font-weight="bold" text-anchor="middle" fill="#000" font-family='"Liberation Sans","DejaVu Sans",sans-serif'>1</text>
<path d="M7.500 257h13l7.300 9.400l-7.300 9.400h-13q-1.700 0-1.700-1.700v-15.400q0-1.700 1.700-1.700z" fill="#030306" stroke="#36b2d6" stroke-width="1.300" stroke-linejoin="round"/>
<text x="14.500" y="273.300" font-size="17.500" font-weight="bold" text-anchor="middle" fill="#00eded" font-family='"Liberation Sans","DejaVu Sans",sans-serif'>2</text>
<path d="M7.500 427.600h13l7.300 8.500l-7.300 8.500h-13q-1.700 0-1.700-1.700v-13.600q0-1.700 1.700-1.700z" fill="#0a020c" stroke="#7c1c86" stroke-width="1.200" stroke-linejoin="round"/>
<text x="14.200" y="442.300" font-size="17.500" font-weight="bold" text-anchor="middle" fill="#d418c0" font-family='"Liberation Sans","DejaVu Sans",sans-serif'>3</text>
<!-- mouse cursor -->
<path d="M210 9.500v21.500l5-4.800l3.800 8l3.200-1.500l-3.800-7.700h7.300z" fill="#fff" stroke="#111" stroke-width="0.8"/>
</svg>

<div class="abs box" style="left:29px;width:389.500px;">
 <div class="pill" style="left:5.800px;top:2.500px;background:#f4f400;">1</div>
 <div class="t" style="left:56.700px;top:2px;color:#f4f400;">2.00 V</div>
 <div class="pill" style="left:5.800px;top:24.200px;background:#b400b4;">3</div>
 <div class="t" style="left:56.700px;top:24px;color:#b400bc;">2.00 V</div>
 <div class="pill" style="left:199.500px;top:2.500px;background:#00dede;">2</div>
 <div class="t" style="left:251.800px;top:2px;color:#00dede;">2.00 V</div>
</div>
<div class="abs box" style="left:421.500px;width:410.500px;">
 <div class="t" style="left:6px;top:2px;color:#fff;">2.00ms</div>
 <div class="t" style="left:173px;top:2px;color:#fff;">250MS/s</div>
 <div class="t" style="left:173px;top:24px;color:#fff;letter-spacing:1.8px;">5M points</div>
 <div class="pill" style="left:327.200px;top:2.500px;background:#f4f400;">1</div>
 <div class="t" style="left:337px;top:24px;color:#fff;">1.68 V</div>
 <div class="t" style="left:47.500px;top:24px;color:#ff9a1a;">7.97353ms</div>
</div>
<div class="abs box" style="left:835px;width:135px;">
 <div class="t" style="left:6px;top:2px;color:#fff;white-space:pre;word-spacing:-1px;">20 Jul   2024</div>
 <div class="t" style="left:6px;top:24px;color:#fff;">13:33:15</div>
</div>
<svg width="970" height="588" viewBox="0 0 970 588">
<rect x="427" y="497.100" width="15" height="15.500" rx="2.500" fill="#ff9a1a"/>
<text x="434.600" y="511" font-size="17" font-weight="bold" text-anchor="middle" fill="#000" font-family='"Liberation Sans","DejaVu Sans",sans-serif'>T</text>
<path d="M443.200 504.600h9M448.600 500.600l4.600 4l-4.600 4" stroke="#ff9a1a" stroke-width="2.100" fill="none"/>
<path d="M455.100 499.900h13.600l-6.800 8.300z" fill="#ff9a1a"/>
<path d="M797.800 488.300h5.200l4.200-10.600h4.800" stroke="#fff" stroke-width="2.400" fill="none"/>
</svg>

<div class="abs btn" style="left:7px;width:134.500px;"><div style="top:10px;left:-9px;">Add<br>Measurement</div></div>
<div class="abs btn" style="left:145px;width:134px;"><div style="top:10px;left:-8px;">Remove<br>Measurement</div></div>
<div class="abs btn" style="left:283px;width:135px;"><div style="top:20.500px;font-size:18.500px;left:-7px;">Indicators</div></div>
<div class="abs btn" style="left:421.500px;width:135px;"><div style="top:31px;letter-spacing:2.400px;left:-8px;">More</div></div>
<div class="abs btn" style="left:697px;width:134.500px;background:#a19b9d;border-color:#d8d8e0 #4a4a66 #4a4a66 #d8d8e0;color:#5e595c;line-height:20.500px;font-size:17.500px;"><div style="top:0px;left:-8px;right:-12px;">Bring<br>Cursors<br>On Screen</div></div>
<div class="abs btn" style="left:835px;width:134.500px;"><div style="top:10px;left:-7px;right:-10px;">Configure<br>Cursors</div></div>
<svg width="970" height="588" viewBox="0 0 970 588">
<path d="M476 549.500l13-13l13 13q-13-3.500-26 0z" fill="#f4f4f8"/>
</svg>
</body></html>
